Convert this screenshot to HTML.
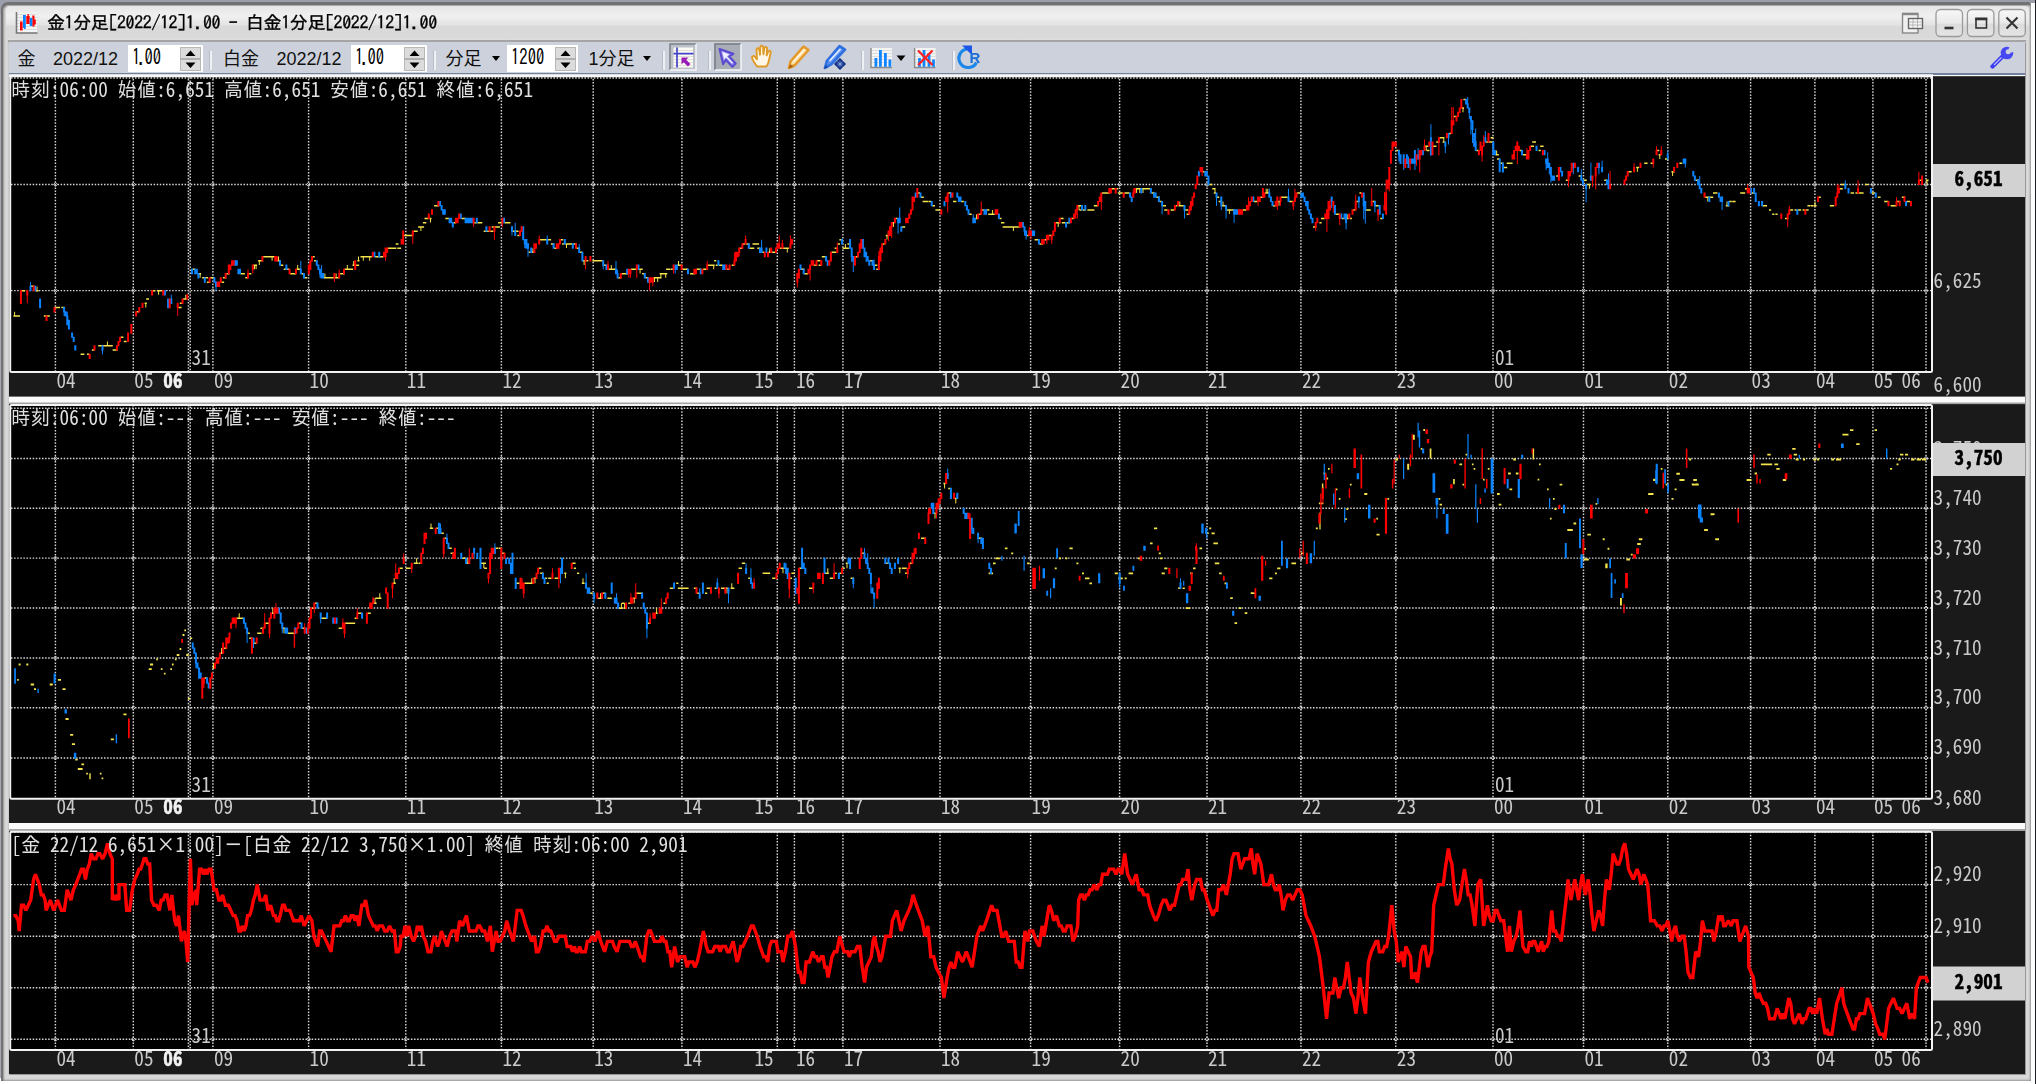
<!DOCTYPE html>
<html lang="ja"><head><meta charset="utf-8"><title>金1分足[2022/12]1.00 - 白金1分足[2022/12]1.00</title>
<style>
html,body{margin:0;padding:0;background:#fff}
body{width:2036px;height:1084px;position:relative;overflow:hidden;font-family:"Liberation Sans","Noto Sans CJK JP",sans-serif}
.abs{position:absolute}
#outer{left:0;top:0;width:2036px;height:1084px;background:#fff}
#darkr{left:2034.5px;top:0;width:2px;height:1084px;background:#1c1c24}
#topband{left:0;top:0;width:2034.5px;height:3px;background:#9c9fab}
#leftband{left:0;top:0;width:1.5px;height:1078px;background:#a7aab5}
#f1{left:1.4px;top:1.9px;width:2030px;height:1078.8px;background:#727272;border-radius:7px 3px 0 0}
#f2{left:3.2px;top:5px;width:2028.2px;height:1075.7px;background:#dadada;border-radius:5.5px 2px 0 0;box-shadow:inset 0 0 2.2px 0.8px #868686}
#title{left:5.5px;top:6px;width:2023.5px;height:34px;background:linear-gradient(#e6e6e6,#f0f0f0 30%,#e3e3e3 56%,#d9d9d9 59%,#d9d9d9 94%,#e0e0e0);border-radius:4px 4px 0 0}
#ttext{left:47px;top:11px;font:18px/22px IPAGothic,"Liberation Sans","Noto Sans CJK JP",sans-serif;color:#000;white-space:pre;letter-spacing:-0.4px;-webkit-text-stroke:0.35px #000;will-change:transform}
#inner{left:9px;top:41.6px;width:2015.7px;height:1032.5px;background:#fafafa;box-shadow:0 0 1.6px 1.2px #989898}
#tb{left:9px;top:41.6px;width:2015.7px;height:31.2px;background:#cdd1db}
#tbline{left:9px;top:72.5px;width:2015.7px;height:2px;background:#72819a}
#tsep{left:7.5px;top:39.8px;width:2018.7px;height:1.9px;background:#a5a5a5}
.lab{top:48px;font-size:18px;line-height:22px;color:#111;white-space:pre}
.cj{font-family:"Liberation Sans","Noto Sans CJK JP",sans-serif;font-size:18px}
.fld{top:45.3px;height:26.4px;background:#fff}
.fld span{position:absolute;left:4.3px;top:0.5px;font:19px/22px IPAGothic,"Liberation Mono",monospace;color:#000;transform:scale(.875,1.15);transform-origin:0 60%;white-space:pre}
.fld i{font-style:normal;margin:0 -2.2px 0 -2.6px}
.sp{top:46.5px;width:21px;height:24px;background:#dcdcdc;box-shadow:inset 0 0 0 1px #b8b8b8}
.sp:before{content:"";position:absolute;left:0;top:11.5px;width:21px;height:1.5px;background:#b0b0b0}
.sep{top:50.5px;width:2px;height:19px;background:#eef0f4;box-shadow:-1px 0 0 #b9bdc7}
.tri{width:0;height:0;border-left:4.5px solid transparent;border-right:4.5px solid transparent;border-top:5.5px solid #000}
.btn{top:43.4px;width:26.5px;height:26.5px}
</style></head><body>
<div class="abs" id="outer"></div><div class="abs" id="darkr"></div><div class="abs" id="topband"></div><div class="abs" id="leftband"></div>
<div class="abs" style="left:0;top:0;width:14px;height:14px;background:#9c9fab"></div><div class="abs" id="f1"></div><div class="abs" id="f2"></div><div class="abs" id="title"></div>
<div class="abs" id="ttext">金1分足[2022/12]1.00 - 白金1分足[2022/12]1.00</div>
<div class="abs" id="inner"></div><div class="abs" id="tb"></div><div class="abs" id="tbline"></div><div class="abs" id="tsep"></div>
<div class="abs lab cj" style="left:17.5px">金</div><div class="abs lab" style="left:53px">2022/12</div><div class="abs fld" style="left:127.7px;width:75.5px"><span>1<i>.</i>00</span></div><div class="abs sp" style="left:180.0px"></div><svg class="abs" style="left:180.0px;top:46.5px" width="21" height="24"><path d="M5.5 9L10.5 3.5L15.5 9zM5.5 15.5L10.5 21L15.5 15.5z" fill="#000"/></svg><div class="abs sep" style="left:210px"></div><div class="abs lab cj" style="left:223px">白金</div><div class="abs lab" style="left:276.5px">2022/12</div><div class="abs fld" style="left:351px;width:76px"><span>1<i>.</i>00</span></div><div class="abs sp" style="left:403.5px"></div><svg class="abs" style="left:403.5px;top:46.5px" width="21" height="24"><path d="M5.5 9L10.5 3.5L15.5 9zM5.5 15.5L10.5 21L15.5 15.5z" fill="#000"/></svg><div class="abs sep" style="left:433.7px"></div><div class="abs lab cj" style="left:445.5px">分足</div><div class="abs tri" style="left:492px;top:56px"></div><div class="abs fld" style="left:507.2px;width:71px"><span>1200</span></div><div class="abs sp" style="left:555.0px"></div><svg class="abs" style="left:555.0px;top:46.5px" width="21" height="24"><path d="M5.5 9L10.5 3.5L15.5 9zM5.5 15.5L10.5 21L15.5 15.5z" fill="#000"/></svg><div class="abs lab" style="left:588.5px"><span style="font-size:18px">1</span><span class="cj">分足</span></div><div class="abs tri" style="left:643.3px;top:56px"></div><div class="abs sep" style="left:663.3px"></div><div class="abs sep" style="left:709px"></div><div class="abs sep" style="left:862px"></div><div class="abs sep" style="left:952.5px"></div>
<svg class="abs" style="left:0;top:0" width="2036" height="76" viewBox="0 0 2036 76">
<defs><linearGradient id="bg" x1="0" y1="0" x2="0" y2="1"><stop offset="0" stop-color="#f8f8f8"/><stop offset="0.5" stop-color="#e9e9e9"/><stop offset="0.55" stop-color="#dcdcdc"/><stop offset="1" stop-color="#e4e4e4"/></linearGradient><filter id="b2"><feGaussianBlur stdDeviation="0.5"/></filter></defs>
<g filter="url(#b2)"><rect x="16.5" y="12.5" width="20.5" height="20" fill="#f4f4f4"/><path d="M17 14.5h20M17 17.5h20M17 20.5h20M17 23.5h20M17 26.5h20M17 29.5h20" stroke="#d4d4d4" stroke-width="0.8"/><path d="M16.5 12v21h21" fill="none" stroke="#777" stroke-width="1.6"/><path d="M20 21.5h2.6v9h-2.6zM26.3 16h3.4v8h-3.4zM27.5 14h1.3v2.5h-1.3zM32.3 15.5h2.2v11h-2.2zM34 19.5h1.8v5h-1.8z" fill="#ff0000"/><path d="M23 15h2.8v13h-2.8zM24 27h1.6v2h-1.6zM29.7 18h2.6v8h-2.6z" fill="#0a84ff"/></g>
<rect x="1936.0" y="9.5" width="26.5" height="27" rx="4.5" fill="url(#bg)" stroke="#9a9a9a" stroke-width="1.3"/>
<rect x="1967.4" y="9.5" width="26.5" height="27" rx="4.5" fill="url(#bg)" stroke="#9a9a9a" stroke-width="1.3"/>
<rect x="1998.8" y="9.5" width="26.5" height="27" rx="4.5" fill="url(#bg)" stroke="#9a9a9a" stroke-width="1.3"/>
<path d="M1944.5 28h9" stroke="#333" stroke-width="2.6"/>
<rect x="1976" y="18.5" width="10.5" height="9.5" fill="none" stroke="#333" stroke-width="1.6"/><path d="M1975.2 19h12" stroke="#333" stroke-width="2.6"/>
<path d="M2006.5 17.5l11 11M2017.5 17.5l-11 11" stroke="#333" stroke-width="2.1"/>
<g fill="none" stroke="#888" stroke-width="1.4"><rect x="1902.5" y="13.5" width="15.5" height="19.5" fill="#efefef"/><path d="M1902.5 14h15.5" stroke-width="2.4"/><rect x="1908.5" y="18.5" width="14" height="10" fill="#f6f6f6" stroke="#666"/><path d="M1909 22h13M1909 25h13M1913 19v9M1917.5 19v9" stroke="#aaa" stroke-width="0.8"/></g>
<rect x="669.5" y="43.5" width="26.5" height="26.5" fill="#bcc0c8"/><path d="M670 70V44h26" fill="none" stroke="#7e828a" stroke-width="1.5"/><path d="M670 70h26V44" fill="none" stroke="#f4f5f8" stroke-width="1.5"/>
<rect x="714.5" y="43.5" width="26.5" height="26.5" fill="#a9aeb6"/><path d="M715 70V44h26" fill="none" stroke="#777b84" stroke-width="1.5"/><path d="M715 70h26V44" fill="none" stroke="#f4f5f8" stroke-width="1.5"/>
<g filter="url(#b2)"><rect x="673.5" y="47.5" width="19.5" height="20" fill="#fbfbf3"/><path d="M674 50.5h19M674 56.5h19M674 59.5h19M674 62.5h19M674 65.5h19" stroke="#d9d9d0" stroke-width="0.8"/><path d="M677 47.5v20M673.5 53.7h20" stroke="#4343c9" stroke-width="1.7"/><path d="M681.5 57.5h7l-2.3 2.2l4.3 4.3l-2.6 2.6l-4.3-4.3l-2.1 2.2z" fill="#9a1db8"/></g>
<g filter="url(#b2)"><path d="M719.5 49l14 4.800l-4.300 2.700l6.500 7l-3.400 3.400l-6.500-7l-2.700 4.300z" fill="#8d84ea" stroke="#5a4bd0" stroke-width="2" stroke-linejoin="round"/><path d="M722 51.500l7.500 3l-2.500 1.800l6 6.500l-1 1l-6-6.500l-1.800 2.500z" fill="#f2f0ff"/></g>
<g filter="url(#b2)"><path d="M757 66.5c-2-3-4.5-6.5-5-9c0-1.5 1.7-2 2.8-.8l2.2 2.6l-.5-9.500c0-2 2.500-2 2.800 0l.7 5l.2-7.500c0-2 2.700-2 2.900 0l.3 7l1-6.200c.3-1.800 2.800-1.500 2.700.3l-.4 7l1.500-3.700c.8-1.700 2.900-1 2.500.8l-1.300 6c-.5 3-1.500 6-3 8z" fill="#fff8e8" stroke="#e09a28" stroke-width="1.9" stroke-linejoin="round"/></g>
<g filter="url(#b2)"><path d="M803.5 46.500l5 3.500l-13.500 15l-6 3l1.500-6.500z" fill="#fbe0a8" stroke="#e39a2a" stroke-width="2.600" stroke-linejoin="round"/><path d="M804.500 49.500l-11.500 12.500" stroke="#fff6e0" stroke-width="1.500"/><path d="M788.500 68.500l1.800-4.500l3 2.800z" fill="#a8620c"/></g>
<g filter="url(#b2)"><path d="M839.5 46l5.500 3.700l-13.500 14.500l-6.500 3.800l1.800-7z" fill="#5b93f2" stroke="#2f6fe0" stroke-width="2.600" stroke-linejoin="round"/><path d="M840.500 49l-11 12" stroke="#e4eeff" stroke-width="1.800"/><path d="M823.500 69l2.200-4l2.800 2.400z" fill="#1d4fb0"/><path d="M840 58l6 6l-6 6l-6-6z" fill="#0c2a80"/><path d="M836.500 64h7M840 60.500v7M837.500 61.500l5 5M842.500 61.500l-5 5" stroke="#9db8f0" stroke-width="0.700"/></g>
<g filter="url(#b2)"><rect x="871.0" y="48" width="21" height="19.500" fill="#f4f4f4"/><path d="M871.0 50.5h21M871.0 53.5h21M871.0 56.5h21M871.0 59.5h21M871.0 62.500h21" stroke="#d8d8d8" stroke-width="0.8"/><path d="M871.0 48v19.500h21" fill="none" stroke="#8a8a8a" stroke-width="1.4"/><rect x="874.5" y="58.0" width="2.800" height="8.8" fill="#0f86ff"/><rect x="879.0" y="50.0" width="2.800" height="16.8" fill="#0f86ff"/><rect x="884.0" y="53.0" width="2.800" height="13.8" fill="#0f86ff"/><rect x="888.5" y="59.5" width="2.800" height="7.3" fill="#0f86ff"/></g>
<path d="M896.500 55.500h9l-4.500 5.500z" fill="#000"/>
<g filter="url(#b2)"><rect x="914.6" y="48" width="21" height="19.500" fill="#f4f4f4"/><path d="M914.6 50.5h21M914.6 53.5h21M914.6 56.5h21M914.6 59.5h21M914.6 62.500h21" stroke="#d8d8d8" stroke-width="0.8"/><path d="M914.6 48v19.500h21" fill="none" stroke="#8a8a8a" stroke-width="1.4"/><rect x="918.1" y="58.0" width="2.800" height="8.8" fill="#0f86ff"/><rect x="922.6" y="50.0" width="2.800" height="16.8" fill="#0f86ff"/><rect x="927.6" y="53.0" width="2.800" height="13.8" fill="#0f86ff"/><rect x="932.1" y="59.5" width="2.800" height="7.3" fill="#0f86ff"/><path d="M918 50.500l14.500 14.500M932.500 50.500l-14.500 14.500" stroke="#ff2020" stroke-width="2.300"/></g>
<g filter="url(#b2)"><path d="M967 49a9.300 9.300 0 1 0 9.500 13.500" fill="none" stroke="#1a86ea" stroke-width="3.200"/><path d="M962 45.500h10v9.500z" fill="#1a56e8"/><text x="969.500" y="62.500" style="font:bold 15px 'Liberation Sans',sans-serif" fill="#1a6fd8">R</text></g>
<g filter="url(#b2)"><path d="M1992.5 66.500l10-10" stroke="#3a3af0" stroke-width="4.2" stroke-linecap="round"/><circle cx="2007" cy="53" r="6.3" fill="#4646f6"/><path d="M2007 53l3.200-7.800l6.500 6.500z" fill="#cdd1db"/><circle cx="2008.2" cy="51.8" r="2.500" fill="#cdd1db"/><path d="M1994 65l7.500-7.500" stroke="#c0c0ff" stroke-width="1.100"/></g>
</svg>
<svg width="2036" height="1084" viewBox="0 0 2036 1084" style="position:absolute;left:0;top:0">
<defs><filter id="bl" x="-1%" y="-1%" width="102%" height="102%"><feGaussianBlur stdDeviation="0.45"/></filter><filter id="bt" x="-1%" y="-1%" width="102%" height="102%"><feGaussianBlur stdDeviation="0.3"/></filter></defs>
<rect x="9" y="76.2" width="2016.0" height="320.4" fill="#1a1a1a"/>
<rect x="10" y="75.8" width="1922" height="296.2" fill="#000"/>
<rect x="9" y="404.1" width="2016.0" height="418.9" fill="#1a1a1a"/>
<rect x="10" y="405.1" width="1922" height="393.6" fill="#000"/>
<rect x="9" y="830.6" width="2016.0" height="243.4" fill="#1a1a1a"/>
<rect x="10" y="831.7" width="1922" height="218.4" fill="#000"/>
<path d="M9 403.2H2025M9 829.9H2025" stroke="#a4a4a4" stroke-width="1.6"/>
<g stroke="#d8d8d8" stroke-width="1.45" stroke-dasharray="1.5 1.6" fill="none" filter="url(#bl)">
<path d="M55.4 75.8V372.0"/>
<path d="M133.3 75.8V372.0"/>
<path d="M212.9 75.8V372.0"/>
<path d="M308.6 75.8V372.0"/>
<path d="M405.8 75.8V372.0"/>
<path d="M501.4 75.8V372.0"/>
<path d="M593.2 75.8V372.0"/>
<path d="M681.9 75.8V372.0"/>
<path d="M777.3 75.8V372.0"/>
<path d="M794.4 75.8V372.0"/>
<path d="M842.9 75.8V372.0"/>
<path d="M940.0 75.8V372.0"/>
<path d="M1030.6 75.8V372.0"/>
<path d="M1119.6 75.8V372.0"/>
<path d="M1207.0 75.8V372.0"/>
<path d="M1300.9 75.8V372.0"/>
<path d="M1395.8 75.8V372.0"/>
<path d="M1493.0 75.8V372.0"/>
<path d="M1583.5 75.8V372.0"/>
<path d="M1667.8 75.8V372.0"/>
<path d="M1750.6 75.8V372.0"/>
<path d="M1814.9 75.8V372.0"/>
<path d="M1872.9 75.8V372.0"/>
<path d="M1926.0 75.8V372.0"/>
<path d="M188.4 75.8V372.0"/><path d="M190.2 77.3V372.0"/>
<path d="M11.0 184.5H1931.0"/>
<path d="M11.0 290.6H1931.0"/>
<path d="M11.0 78.0H1931.0"/>
<path d="M55.4 405.1V798.7"/>
<path d="M133.3 405.1V798.7"/>
<path d="M212.9 405.1V798.7"/>
<path d="M308.6 405.1V798.7"/>
<path d="M405.8 405.1V798.7"/>
<path d="M501.4 405.1V798.7"/>
<path d="M593.2 405.1V798.7"/>
<path d="M681.9 405.1V798.7"/>
<path d="M777.3 405.1V798.7"/>
<path d="M794.4 405.1V798.7"/>
<path d="M842.9 405.1V798.7"/>
<path d="M940.0 405.1V798.7"/>
<path d="M1030.6 405.1V798.7"/>
<path d="M1119.6 405.1V798.7"/>
<path d="M1207.0 405.1V798.7"/>
<path d="M1300.9 405.1V798.7"/>
<path d="M1395.8 405.1V798.7"/>
<path d="M1493.0 405.1V798.7"/>
<path d="M1583.5 405.1V798.7"/>
<path d="M1667.8 405.1V798.7"/>
<path d="M1750.6 405.1V798.7"/>
<path d="M1814.9 405.1V798.7"/>
<path d="M1872.9 405.1V798.7"/>
<path d="M1926.0 405.1V798.7"/>
<path d="M188.4 405.1V798.7"/><path d="M190.2 406.6V798.7"/>
<path d="M11.0 458.5H1931.0"/>
<path d="M11.0 508.2H1931.0"/>
<path d="M11.0 558.1H1931.0"/>
<path d="M11.0 608.0H1931.0"/>
<path d="M11.0 657.9H1931.0"/>
<path d="M11.0 707.7H1931.0"/>
<path d="M11.0 757.9H1931.0"/>
<path d="M11.0 408.3H1931.0"/>
<path d="M55.4 831.7V1050.1"/>
<path d="M133.3 831.7V1050.1"/>
<path d="M212.9 831.7V1050.1"/>
<path d="M308.6 831.7V1050.1"/>
<path d="M405.8 831.7V1050.1"/>
<path d="M501.4 831.7V1050.1"/>
<path d="M593.2 831.7V1050.1"/>
<path d="M681.9 831.7V1050.1"/>
<path d="M777.3 831.7V1050.1"/>
<path d="M794.4 831.7V1050.1"/>
<path d="M842.9 831.7V1050.1"/>
<path d="M940.0 831.7V1050.1"/>
<path d="M1030.6 831.7V1050.1"/>
<path d="M1119.6 831.7V1050.1"/>
<path d="M1207.0 831.7V1050.1"/>
<path d="M1300.9 831.7V1050.1"/>
<path d="M1395.8 831.7V1050.1"/>
<path d="M1493.0 831.7V1050.1"/>
<path d="M1583.5 831.7V1050.1"/>
<path d="M1667.8 831.7V1050.1"/>
<path d="M1750.6 831.7V1050.1"/>
<path d="M1814.9 831.7V1050.1"/>
<path d="M1872.9 831.7V1050.1"/>
<path d="M1926.0 831.7V1050.1"/>
<path d="M188.4 831.7V1050.1"/><path d="M190.2 833.2V1050.1"/>
<path d="M11.0 884.6H1931.0"/>
<path d="M11.0 936.3H1931.0"/>
<path d="M11.0 987.8H1931.0"/>
<path d="M11.0 1039.3H1931.0"/>
<path d="M11.0 831.9H1931.0"/>
</g>
<g fill="none" stroke="#d8d8d8" stroke-width="0.9">
<path d="M55.4 182.5l2 2l-2 2l-2-2z"/>
<path d="M133.3 182.5l2 2l-2 2l-2-2z"/>
<path d="M212.9 182.5l2 2l-2 2l-2-2z"/>
<path d="M308.6 182.5l2 2l-2 2l-2-2z"/>
<path d="M405.8 182.5l2 2l-2 2l-2-2z"/>
<path d="M501.4 182.5l2 2l-2 2l-2-2z"/>
<path d="M593.2 182.5l2 2l-2 2l-2-2z"/>
<path d="M681.9 182.5l2 2l-2 2l-2-2z"/>
<path d="M777.3 182.5l2 2l-2 2l-2-2z"/>
<path d="M794.4 182.5l2 2l-2 2l-2-2z"/>
<path d="M842.9 182.5l2 2l-2 2l-2-2z"/>
<path d="M940.0 182.5l2 2l-2 2l-2-2z"/>
<path d="M1030.6 182.5l2 2l-2 2l-2-2z"/>
<path d="M1119.6 182.5l2 2l-2 2l-2-2z"/>
<path d="M1207.0 182.5l2 2l-2 2l-2-2z"/>
<path d="M1300.9 182.5l2 2l-2 2l-2-2z"/>
<path d="M1395.8 182.5l2 2l-2 2l-2-2z"/>
<path d="M1493.0 182.5l2 2l-2 2l-2-2z"/>
<path d="M1583.5 182.5l2 2l-2 2l-2-2z"/>
<path d="M1667.8 182.5l2 2l-2 2l-2-2z"/>
<path d="M1750.6 182.5l2 2l-2 2l-2-2z"/>
<path d="M1814.9 182.5l2 2l-2 2l-2-2z"/>
<path d="M1872.9 182.5l2 2l-2 2l-2-2z"/>
<path d="M1926.0 182.5l2 2l-2 2l-2-2z"/>
<path d="M55.4 288.6l2 2l-2 2l-2-2z"/>
<path d="M133.3 288.6l2 2l-2 2l-2-2z"/>
<path d="M212.9 288.6l2 2l-2 2l-2-2z"/>
<path d="M308.6 288.6l2 2l-2 2l-2-2z"/>
<path d="M405.8 288.6l2 2l-2 2l-2-2z"/>
<path d="M501.4 288.6l2 2l-2 2l-2-2z"/>
<path d="M593.2 288.6l2 2l-2 2l-2-2z"/>
<path d="M681.9 288.6l2 2l-2 2l-2-2z"/>
<path d="M777.3 288.6l2 2l-2 2l-2-2z"/>
<path d="M794.4 288.6l2 2l-2 2l-2-2z"/>
<path d="M842.9 288.6l2 2l-2 2l-2-2z"/>
<path d="M940.0 288.6l2 2l-2 2l-2-2z"/>
<path d="M1030.6 288.6l2 2l-2 2l-2-2z"/>
<path d="M1119.6 288.6l2 2l-2 2l-2-2z"/>
<path d="M1207.0 288.6l2 2l-2 2l-2-2z"/>
<path d="M1300.9 288.6l2 2l-2 2l-2-2z"/>
<path d="M1395.8 288.6l2 2l-2 2l-2-2z"/>
<path d="M1493.0 288.6l2 2l-2 2l-2-2z"/>
<path d="M1583.5 288.6l2 2l-2 2l-2-2z"/>
<path d="M1667.8 288.6l2 2l-2 2l-2-2z"/>
<path d="M1750.6 288.6l2 2l-2 2l-2-2z"/>
<path d="M1814.9 288.6l2 2l-2 2l-2-2z"/>
<path d="M1872.9 288.6l2 2l-2 2l-2-2z"/>
<path d="M1926.0 288.6l2 2l-2 2l-2-2z"/>
<path d="M55.4 456.5l2 2l-2 2l-2-2z"/>
<path d="M133.3 456.5l2 2l-2 2l-2-2z"/>
<path d="M212.9 456.5l2 2l-2 2l-2-2z"/>
<path d="M308.6 456.5l2 2l-2 2l-2-2z"/>
<path d="M405.8 456.5l2 2l-2 2l-2-2z"/>
<path d="M501.4 456.5l2 2l-2 2l-2-2z"/>
<path d="M593.2 456.5l2 2l-2 2l-2-2z"/>
<path d="M681.9 456.5l2 2l-2 2l-2-2z"/>
<path d="M777.3 456.5l2 2l-2 2l-2-2z"/>
<path d="M794.4 456.5l2 2l-2 2l-2-2z"/>
<path d="M842.9 456.5l2 2l-2 2l-2-2z"/>
<path d="M940.0 456.5l2 2l-2 2l-2-2z"/>
<path d="M1030.6 456.5l2 2l-2 2l-2-2z"/>
<path d="M1119.6 456.5l2 2l-2 2l-2-2z"/>
<path d="M1207.0 456.5l2 2l-2 2l-2-2z"/>
<path d="M1300.9 456.5l2 2l-2 2l-2-2z"/>
<path d="M1395.8 456.5l2 2l-2 2l-2-2z"/>
<path d="M1493.0 456.5l2 2l-2 2l-2-2z"/>
<path d="M1583.5 456.5l2 2l-2 2l-2-2z"/>
<path d="M1667.8 456.5l2 2l-2 2l-2-2z"/>
<path d="M1750.6 456.5l2 2l-2 2l-2-2z"/>
<path d="M1814.9 456.5l2 2l-2 2l-2-2z"/>
<path d="M1872.9 456.5l2 2l-2 2l-2-2z"/>
<path d="M1926.0 456.5l2 2l-2 2l-2-2z"/>
<path d="M55.4 506.2l2 2l-2 2l-2-2z"/>
<path d="M133.3 506.2l2 2l-2 2l-2-2z"/>
<path d="M212.9 506.2l2 2l-2 2l-2-2z"/>
<path d="M308.6 506.2l2 2l-2 2l-2-2z"/>
<path d="M405.8 506.2l2 2l-2 2l-2-2z"/>
<path d="M501.4 506.2l2 2l-2 2l-2-2z"/>
<path d="M593.2 506.2l2 2l-2 2l-2-2z"/>
<path d="M681.9 506.2l2 2l-2 2l-2-2z"/>
<path d="M777.3 506.2l2 2l-2 2l-2-2z"/>
<path d="M794.4 506.2l2 2l-2 2l-2-2z"/>
<path d="M842.9 506.2l2 2l-2 2l-2-2z"/>
<path d="M940.0 506.2l2 2l-2 2l-2-2z"/>
<path d="M1030.6 506.2l2 2l-2 2l-2-2z"/>
<path d="M1119.6 506.2l2 2l-2 2l-2-2z"/>
<path d="M1207.0 506.2l2 2l-2 2l-2-2z"/>
<path d="M1300.9 506.2l2 2l-2 2l-2-2z"/>
<path d="M1395.8 506.2l2 2l-2 2l-2-2z"/>
<path d="M1493.0 506.2l2 2l-2 2l-2-2z"/>
<path d="M1583.5 506.2l2 2l-2 2l-2-2z"/>
<path d="M1667.8 506.2l2 2l-2 2l-2-2z"/>
<path d="M1750.6 506.2l2 2l-2 2l-2-2z"/>
<path d="M1814.9 506.2l2 2l-2 2l-2-2z"/>
<path d="M1872.9 506.2l2 2l-2 2l-2-2z"/>
<path d="M1926.0 506.2l2 2l-2 2l-2-2z"/>
<path d="M55.4 556.1l2 2l-2 2l-2-2z"/>
<path d="M133.3 556.1l2 2l-2 2l-2-2z"/>
<path d="M212.9 556.1l2 2l-2 2l-2-2z"/>
<path d="M308.6 556.1l2 2l-2 2l-2-2z"/>
<path d="M405.8 556.1l2 2l-2 2l-2-2z"/>
<path d="M501.4 556.1l2 2l-2 2l-2-2z"/>
<path d="M593.2 556.1l2 2l-2 2l-2-2z"/>
<path d="M681.9 556.1l2 2l-2 2l-2-2z"/>
<path d="M777.3 556.1l2 2l-2 2l-2-2z"/>
<path d="M794.4 556.1l2 2l-2 2l-2-2z"/>
<path d="M842.9 556.1l2 2l-2 2l-2-2z"/>
<path d="M940.0 556.1l2 2l-2 2l-2-2z"/>
<path d="M1030.6 556.1l2 2l-2 2l-2-2z"/>
<path d="M1119.6 556.1l2 2l-2 2l-2-2z"/>
<path d="M1207.0 556.1l2 2l-2 2l-2-2z"/>
<path d="M1300.9 556.1l2 2l-2 2l-2-2z"/>
<path d="M1395.8 556.1l2 2l-2 2l-2-2z"/>
<path d="M1493.0 556.1l2 2l-2 2l-2-2z"/>
<path d="M1583.5 556.1l2 2l-2 2l-2-2z"/>
<path d="M1667.8 556.1l2 2l-2 2l-2-2z"/>
<path d="M1750.6 556.1l2 2l-2 2l-2-2z"/>
<path d="M1814.9 556.1l2 2l-2 2l-2-2z"/>
<path d="M1872.9 556.1l2 2l-2 2l-2-2z"/>
<path d="M1926.0 556.1l2 2l-2 2l-2-2z"/>
<path d="M55.4 606.0l2 2l-2 2l-2-2z"/>
<path d="M133.3 606.0l2 2l-2 2l-2-2z"/>
<path d="M212.9 606.0l2 2l-2 2l-2-2z"/>
<path d="M308.6 606.0l2 2l-2 2l-2-2z"/>
<path d="M405.8 606.0l2 2l-2 2l-2-2z"/>
<path d="M501.4 606.0l2 2l-2 2l-2-2z"/>
<path d="M593.2 606.0l2 2l-2 2l-2-2z"/>
<path d="M681.9 606.0l2 2l-2 2l-2-2z"/>
<path d="M777.3 606.0l2 2l-2 2l-2-2z"/>
<path d="M794.4 606.0l2 2l-2 2l-2-2z"/>
<path d="M842.9 606.0l2 2l-2 2l-2-2z"/>
<path d="M940.0 606.0l2 2l-2 2l-2-2z"/>
<path d="M1030.6 606.0l2 2l-2 2l-2-2z"/>
<path d="M1119.6 606.0l2 2l-2 2l-2-2z"/>
<path d="M1207.0 606.0l2 2l-2 2l-2-2z"/>
<path d="M1300.9 606.0l2 2l-2 2l-2-2z"/>
<path d="M1395.8 606.0l2 2l-2 2l-2-2z"/>
<path d="M1493.0 606.0l2 2l-2 2l-2-2z"/>
<path d="M1583.5 606.0l2 2l-2 2l-2-2z"/>
<path d="M1667.8 606.0l2 2l-2 2l-2-2z"/>
<path d="M1750.6 606.0l2 2l-2 2l-2-2z"/>
<path d="M1814.9 606.0l2 2l-2 2l-2-2z"/>
<path d="M1872.9 606.0l2 2l-2 2l-2-2z"/>
<path d="M1926.0 606.0l2 2l-2 2l-2-2z"/>
<path d="M55.4 655.9l2 2l-2 2l-2-2z"/>
<path d="M133.3 655.9l2 2l-2 2l-2-2z"/>
<path d="M212.9 655.9l2 2l-2 2l-2-2z"/>
<path d="M308.6 655.9l2 2l-2 2l-2-2z"/>
<path d="M405.8 655.9l2 2l-2 2l-2-2z"/>
<path d="M501.4 655.9l2 2l-2 2l-2-2z"/>
<path d="M593.2 655.9l2 2l-2 2l-2-2z"/>
<path d="M681.9 655.9l2 2l-2 2l-2-2z"/>
<path d="M777.3 655.9l2 2l-2 2l-2-2z"/>
<path d="M794.4 655.9l2 2l-2 2l-2-2z"/>
<path d="M842.9 655.9l2 2l-2 2l-2-2z"/>
<path d="M940.0 655.9l2 2l-2 2l-2-2z"/>
<path d="M1030.6 655.9l2 2l-2 2l-2-2z"/>
<path d="M1119.6 655.9l2 2l-2 2l-2-2z"/>
<path d="M1207.0 655.9l2 2l-2 2l-2-2z"/>
<path d="M1300.9 655.9l2 2l-2 2l-2-2z"/>
<path d="M1395.8 655.9l2 2l-2 2l-2-2z"/>
<path d="M1493.0 655.9l2 2l-2 2l-2-2z"/>
<path d="M1583.5 655.9l2 2l-2 2l-2-2z"/>
<path d="M1667.8 655.9l2 2l-2 2l-2-2z"/>
<path d="M1750.6 655.9l2 2l-2 2l-2-2z"/>
<path d="M1814.9 655.9l2 2l-2 2l-2-2z"/>
<path d="M1872.9 655.9l2 2l-2 2l-2-2z"/>
<path d="M1926.0 655.9l2 2l-2 2l-2-2z"/>
<path d="M55.4 705.7l2 2l-2 2l-2-2z"/>
<path d="M133.3 705.7l2 2l-2 2l-2-2z"/>
<path d="M212.9 705.7l2 2l-2 2l-2-2z"/>
<path d="M308.6 705.7l2 2l-2 2l-2-2z"/>
<path d="M405.8 705.7l2 2l-2 2l-2-2z"/>
<path d="M501.4 705.7l2 2l-2 2l-2-2z"/>
<path d="M593.2 705.7l2 2l-2 2l-2-2z"/>
<path d="M681.9 705.7l2 2l-2 2l-2-2z"/>
<path d="M777.3 705.7l2 2l-2 2l-2-2z"/>
<path d="M794.4 705.7l2 2l-2 2l-2-2z"/>
<path d="M842.9 705.7l2 2l-2 2l-2-2z"/>
<path d="M940.0 705.7l2 2l-2 2l-2-2z"/>
<path d="M1030.6 705.7l2 2l-2 2l-2-2z"/>
<path d="M1119.6 705.7l2 2l-2 2l-2-2z"/>
<path d="M1207.0 705.7l2 2l-2 2l-2-2z"/>
<path d="M1300.9 705.7l2 2l-2 2l-2-2z"/>
<path d="M1395.8 705.7l2 2l-2 2l-2-2z"/>
<path d="M1493.0 705.7l2 2l-2 2l-2-2z"/>
<path d="M1583.5 705.7l2 2l-2 2l-2-2z"/>
<path d="M1667.8 705.7l2 2l-2 2l-2-2z"/>
<path d="M1750.6 705.7l2 2l-2 2l-2-2z"/>
<path d="M1814.9 705.7l2 2l-2 2l-2-2z"/>
<path d="M1872.9 705.7l2 2l-2 2l-2-2z"/>
<path d="M1926.0 705.7l2 2l-2 2l-2-2z"/>
<path d="M55.4 755.9l2 2l-2 2l-2-2z"/>
<path d="M133.3 755.9l2 2l-2 2l-2-2z"/>
<path d="M212.9 755.9l2 2l-2 2l-2-2z"/>
<path d="M308.6 755.9l2 2l-2 2l-2-2z"/>
<path d="M405.8 755.9l2 2l-2 2l-2-2z"/>
<path d="M501.4 755.9l2 2l-2 2l-2-2z"/>
<path d="M593.2 755.9l2 2l-2 2l-2-2z"/>
<path d="M681.9 755.9l2 2l-2 2l-2-2z"/>
<path d="M777.3 755.9l2 2l-2 2l-2-2z"/>
<path d="M794.4 755.9l2 2l-2 2l-2-2z"/>
<path d="M842.9 755.9l2 2l-2 2l-2-2z"/>
<path d="M940.0 755.9l2 2l-2 2l-2-2z"/>
<path d="M1030.6 755.9l2 2l-2 2l-2-2z"/>
<path d="M1119.6 755.9l2 2l-2 2l-2-2z"/>
<path d="M1207.0 755.9l2 2l-2 2l-2-2z"/>
<path d="M1300.9 755.9l2 2l-2 2l-2-2z"/>
<path d="M1395.8 755.9l2 2l-2 2l-2-2z"/>
<path d="M1493.0 755.9l2 2l-2 2l-2-2z"/>
<path d="M1583.5 755.9l2 2l-2 2l-2-2z"/>
<path d="M1667.8 755.9l2 2l-2 2l-2-2z"/>
<path d="M1750.6 755.9l2 2l-2 2l-2-2z"/>
<path d="M1814.9 755.9l2 2l-2 2l-2-2z"/>
<path d="M1872.9 755.9l2 2l-2 2l-2-2z"/>
<path d="M1926.0 755.9l2 2l-2 2l-2-2z"/>
<path d="M55.4 882.6l2 2l-2 2l-2-2z"/>
<path d="M133.3 882.6l2 2l-2 2l-2-2z"/>
<path d="M212.9 882.6l2 2l-2 2l-2-2z"/>
<path d="M308.6 882.6l2 2l-2 2l-2-2z"/>
<path d="M405.8 882.6l2 2l-2 2l-2-2z"/>
<path d="M501.4 882.6l2 2l-2 2l-2-2z"/>
<path d="M593.2 882.6l2 2l-2 2l-2-2z"/>
<path d="M681.9 882.6l2 2l-2 2l-2-2z"/>
<path d="M777.3 882.6l2 2l-2 2l-2-2z"/>
<path d="M794.4 882.6l2 2l-2 2l-2-2z"/>
<path d="M842.9 882.6l2 2l-2 2l-2-2z"/>
<path d="M940.0 882.6l2 2l-2 2l-2-2z"/>
<path d="M1030.6 882.6l2 2l-2 2l-2-2z"/>
<path d="M1119.6 882.6l2 2l-2 2l-2-2z"/>
<path d="M1207.0 882.6l2 2l-2 2l-2-2z"/>
<path d="M1300.9 882.6l2 2l-2 2l-2-2z"/>
<path d="M1395.8 882.6l2 2l-2 2l-2-2z"/>
<path d="M1493.0 882.6l2 2l-2 2l-2-2z"/>
<path d="M1583.5 882.6l2 2l-2 2l-2-2z"/>
<path d="M1667.8 882.6l2 2l-2 2l-2-2z"/>
<path d="M1750.6 882.6l2 2l-2 2l-2-2z"/>
<path d="M1814.9 882.6l2 2l-2 2l-2-2z"/>
<path d="M1872.9 882.6l2 2l-2 2l-2-2z"/>
<path d="M1926.0 882.6l2 2l-2 2l-2-2z"/>
<path d="M55.4 934.3l2 2l-2 2l-2-2z"/>
<path d="M133.3 934.3l2 2l-2 2l-2-2z"/>
<path d="M212.9 934.3l2 2l-2 2l-2-2z"/>
<path d="M308.6 934.3l2 2l-2 2l-2-2z"/>
<path d="M405.8 934.3l2 2l-2 2l-2-2z"/>
<path d="M501.4 934.3l2 2l-2 2l-2-2z"/>
<path d="M593.2 934.3l2 2l-2 2l-2-2z"/>
<path d="M681.9 934.3l2 2l-2 2l-2-2z"/>
<path d="M777.3 934.3l2 2l-2 2l-2-2z"/>
<path d="M794.4 934.3l2 2l-2 2l-2-2z"/>
<path d="M842.9 934.3l2 2l-2 2l-2-2z"/>
<path d="M940.0 934.3l2 2l-2 2l-2-2z"/>
<path d="M1030.6 934.3l2 2l-2 2l-2-2z"/>
<path d="M1119.6 934.3l2 2l-2 2l-2-2z"/>
<path d="M1207.0 934.3l2 2l-2 2l-2-2z"/>
<path d="M1300.9 934.3l2 2l-2 2l-2-2z"/>
<path d="M1395.8 934.3l2 2l-2 2l-2-2z"/>
<path d="M1493.0 934.3l2 2l-2 2l-2-2z"/>
<path d="M1583.5 934.3l2 2l-2 2l-2-2z"/>
<path d="M1667.8 934.3l2 2l-2 2l-2-2z"/>
<path d="M1750.6 934.3l2 2l-2 2l-2-2z"/>
<path d="M1814.9 934.3l2 2l-2 2l-2-2z"/>
<path d="M1872.9 934.3l2 2l-2 2l-2-2z"/>
<path d="M1926.0 934.3l2 2l-2 2l-2-2z"/>
<path d="M55.4 985.8l2 2l-2 2l-2-2z"/>
<path d="M133.3 985.8l2 2l-2 2l-2-2z"/>
<path d="M212.9 985.8l2 2l-2 2l-2-2z"/>
<path d="M308.6 985.8l2 2l-2 2l-2-2z"/>
<path d="M405.8 985.8l2 2l-2 2l-2-2z"/>
<path d="M501.4 985.8l2 2l-2 2l-2-2z"/>
<path d="M593.2 985.8l2 2l-2 2l-2-2z"/>
<path d="M681.9 985.8l2 2l-2 2l-2-2z"/>
<path d="M777.3 985.8l2 2l-2 2l-2-2z"/>
<path d="M794.4 985.8l2 2l-2 2l-2-2z"/>
<path d="M842.9 985.8l2 2l-2 2l-2-2z"/>
<path d="M940.0 985.8l2 2l-2 2l-2-2z"/>
<path d="M1030.6 985.8l2 2l-2 2l-2-2z"/>
<path d="M1119.6 985.8l2 2l-2 2l-2-2z"/>
<path d="M1207.0 985.8l2 2l-2 2l-2-2z"/>
<path d="M1300.9 985.8l2 2l-2 2l-2-2z"/>
<path d="M1395.8 985.8l2 2l-2 2l-2-2z"/>
<path d="M1493.0 985.8l2 2l-2 2l-2-2z"/>
<path d="M1583.5 985.8l2 2l-2 2l-2-2z"/>
<path d="M1667.8 985.8l2 2l-2 2l-2-2z"/>
<path d="M1750.6 985.8l2 2l-2 2l-2-2z"/>
<path d="M1814.9 985.8l2 2l-2 2l-2-2z"/>
<path d="M1872.9 985.8l2 2l-2 2l-2-2z"/>
<path d="M1926.0 985.8l2 2l-2 2l-2-2z"/>
<path d="M55.4 1037.3l2 2l-2 2l-2-2z"/>
<path d="M133.3 1037.3l2 2l-2 2l-2-2z"/>
<path d="M212.9 1037.3l2 2l-2 2l-2-2z"/>
<path d="M308.6 1037.3l2 2l-2 2l-2-2z"/>
<path d="M405.8 1037.3l2 2l-2 2l-2-2z"/>
<path d="M501.4 1037.3l2 2l-2 2l-2-2z"/>
<path d="M593.2 1037.3l2 2l-2 2l-2-2z"/>
<path d="M681.9 1037.3l2 2l-2 2l-2-2z"/>
<path d="M777.3 1037.3l2 2l-2 2l-2-2z"/>
<path d="M794.4 1037.3l2 2l-2 2l-2-2z"/>
<path d="M842.9 1037.3l2 2l-2 2l-2-2z"/>
<path d="M940.0 1037.3l2 2l-2 2l-2-2z"/>
<path d="M1030.6 1037.3l2 2l-2 2l-2-2z"/>
<path d="M1119.6 1037.3l2 2l-2 2l-2-2z"/>
<path d="M1207.0 1037.3l2 2l-2 2l-2-2z"/>
<path d="M1300.9 1037.3l2 2l-2 2l-2-2z"/>
<path d="M1395.8 1037.3l2 2l-2 2l-2-2z"/>
<path d="M1493.0 1037.3l2 2l-2 2l-2-2z"/>
<path d="M1583.5 1037.3l2 2l-2 2l-2-2z"/>
<path d="M1667.8 1037.3l2 2l-2 2l-2-2z"/>
<path d="M1750.6 1037.3l2 2l-2 2l-2-2z"/>
<path d="M1814.9 1037.3l2 2l-2 2l-2-2z"/>
<path d="M1872.9 1037.3l2 2l-2 2l-2-2z"/>
<path d="M1926.0 1037.3l2 2l-2 2l-2-2z"/>
</g>
<g filter="url(#bl)"><path fill="#f4e34c" d="M13.4 315.3h3.4v1.5h-3.4zM14.1 311.8h1.0v4.2h-1.0zM16.6 315.3h3.4v1.5h-3.4zM21.4 289.9h2.8v1.5h-2.8zM23.0 289.9h2.2v1.5h-2.2zM31.0 285.6h3.4v1.5h-3.4zM35.8 289.9h2.8v1.5h-2.8zM36.5 286.4h1.0v4.2h-1.0zM43.8 315.3h2.8v1.5h-2.8zM47.0 315.3h2.8v1.5h-2.8zM55.0 306.8h2.8v1.5h-2.8zM56.6 306.8h3.4v1.5h-3.4zM61.4 306.8h3.4v1.5h-3.4zM80.6 353.5h3.4v1.5h-3.4zM82.2 353.5h2.2v1.5h-2.2zM87.0 353.5h2.2v1.5h-2.2zM91.8 349.3h2.8v1.5h-2.8zM98.2 345.0h2.2v1.5h-2.2zM99.8 345.0h3.4v1.5h-3.4zM103.0 345.0h2.8v1.5h-2.8zM104.6 345.0h3.4v1.5h-3.4zM106.2 345.0h2.2v1.5h-2.2zM106.9 341.5h1.0v4.2h-1.0zM107.8 345.0h2.8v1.5h-2.8zM109.4 345.0h3.4v1.5h-3.4zM112.6 349.3h2.8v1.5h-2.8zM114.2 349.3h3.4v1.5h-3.4zM120.6 336.5h2.8v1.5h-2.8zM123.8 340.8h2.8v1.5h-2.8zM136.6 311.1h2.2v1.5h-2.2zM144.6 302.6h2.2v1.5h-2.2zM145.3 303.3h1.0v4.2h-1.0zM146.2 298.3h2.8v1.5h-2.8zM152.6 289.9h2.8v1.5h-2.8zM157.4 289.9h2.8v1.5h-2.8zM158.1 290.6h1.0v4.2h-1.0zM160.6 289.9h2.2v1.5h-2.2zM178.2 306.8h3.4v1.5h-3.4zM179.8 302.6h2.2v1.5h-2.2zM183.0 298.3h2.8v1.5h-2.8zM184.6 298.3h2.2v1.5h-2.2zM185.3 294.8h1.0v4.2h-1.0zM192.5 268.6h2.8v1.5h-2.8zM198.9 272.9h2.2v1.5h-2.2zM199.6 273.6h1.0v4.2h-1.0zM202.1 277.1h3.4v1.5h-3.4zM205.3 277.1h2.8v1.5h-2.8zM206.9 281.4h3.4v1.5h-3.4zM210.1 277.1h2.8v1.5h-2.8zM211.7 277.1h2.8v1.5h-2.8zM221.3 281.4h2.8v1.5h-2.8zM222.9 277.1h3.4v1.5h-3.4zM226.1 272.9h3.4v1.5h-3.4zM240.5 272.9h2.2v1.5h-2.2zM242.1 272.9h2.8v1.5h-2.8zM245.3 277.1h2.8v1.5h-2.8zM248.5 272.9h2.8v1.5h-2.8zM253.3 264.4h2.2v1.5h-2.2zM254.0 265.1h1.0v4.2h-1.0zM254.9 264.4h2.2v1.5h-2.2zM255.6 265.1h1.0v4.2h-1.0zM258.1 260.1h3.4v1.5h-3.4zM258.8 260.9h1.0v4.2h-1.0zM259.7 260.1h3.4v1.5h-3.4zM262.9 255.9h3.4v1.5h-3.4zM264.5 255.9h2.8v1.5h-2.8zM266.1 255.9h3.4v1.5h-3.4zM269.3 255.9h3.4v1.5h-3.4zM270.9 255.9h2.8v1.5h-2.8zM271.6 256.6h1.0v4.2h-1.0zM272.5 255.9h2.8v1.5h-2.8zM277.3 260.1h3.4v1.5h-3.4zM278.0 256.6h1.0v4.2h-1.0zM280.5 264.4h2.8v1.5h-2.8zM283.7 268.6h3.4v1.5h-3.4zM286.9 268.6h2.2v1.5h-2.2zM290.1 272.9h2.8v1.5h-2.8zM291.7 272.9h3.4v1.5h-3.4zM293.3 272.9h2.8v1.5h-2.8zM296.5 268.6h2.8v1.5h-2.8zM297.2 265.1h1.0v4.2h-1.0zM298.1 268.6h2.8v1.5h-2.8zM301.3 272.9h2.8v1.5h-2.8zM304.5 277.1h2.8v1.5h-2.8zM312.5 255.9h2.2v1.5h-2.2zM314.1 260.1h2.2v1.5h-2.2zM323.7 277.1h2.8v1.5h-2.8zM324.4 273.6h1.0v4.2h-1.0zM325.3 277.1h3.4v1.5h-3.4zM326.9 277.1h2.2v1.5h-2.2zM328.5 277.1h2.8v1.5h-2.8zM330.1 277.1h2.8v1.5h-2.8zM331.7 277.1h2.8v1.5h-2.8zM334.9 277.1h2.2v1.5h-2.2zM335.6 273.6h1.0v4.2h-1.0zM336.5 277.1h2.8v1.5h-2.8zM339.7 272.9h2.2v1.5h-2.2zM341.3 272.9h3.4v1.5h-3.4zM344.5 268.6h2.8v1.5h-2.8zM346.1 268.6h2.2v1.5h-2.2zM346.8 265.1h1.0v4.2h-1.0zM347.7 268.6h3.4v1.5h-3.4zM349.3 268.6h2.8v1.5h-2.8zM350.9 268.6h2.2v1.5h-2.2zM352.5 264.4h2.8v1.5h-2.8zM353.2 260.9h1.0v4.2h-1.0zM355.7 264.4h3.4v1.5h-3.4zM357.3 260.1h2.2v1.5h-2.2zM358.0 256.6h1.0v4.2h-1.0zM360.5 255.9h2.8v1.5h-2.8zM362.1 255.9h2.2v1.5h-2.2zM362.8 256.6h1.0v4.2h-1.0zM363.7 255.9h2.8v1.5h-2.8zM365.3 255.9h3.4v1.5h-3.4zM366.9 255.9h2.8v1.5h-2.8zM368.5 255.9h3.4v1.5h-3.4zM369.2 256.6h1.0v4.2h-1.0zM374.9 255.9h2.2v1.5h-2.2zM376.5 255.9h3.4v1.5h-3.4zM379.7 255.9h2.8v1.5h-2.8zM381.3 255.9h2.2v1.5h-2.2zM387.7 247.4h2.8v1.5h-2.8zM389.3 247.4h2.2v1.5h-2.2zM390.9 247.4h2.2v1.5h-2.2zM392.5 247.4h2.8v1.5h-2.8zM394.1 247.4h2.2v1.5h-2.2zM395.7 243.2h2.8v1.5h-2.8zM397.3 247.4h3.4v1.5h-3.4zM398.9 247.4h2.2v1.5h-2.2zM403.7 234.7h2.2v1.5h-2.2zM405.3 234.7h2.8v1.5h-2.8zM406.9 234.7h3.4v1.5h-3.4zM408.5 234.7h2.2v1.5h-2.2zM410.1 234.7h2.2v1.5h-2.2zM413.3 230.4h3.4v1.5h-3.4zM414.9 230.4h2.8v1.5h-2.8zM418.1 226.2h3.4v1.5h-3.4zM419.7 226.2h3.4v1.5h-3.4zM420.4 226.9h1.0v4.2h-1.0zM421.3 226.2h2.8v1.5h-2.8zM422.9 221.9h3.4v1.5h-3.4zM424.5 217.7h2.8v1.5h-2.8zM426.1 217.7h2.8v1.5h-2.8zM429.3 217.7h2.2v1.5h-2.2zM430.0 218.4h1.0v4.2h-1.0zM434.1 205.0h3.4v1.5h-3.4zM435.7 205.0h3.4v1.5h-3.4zM445.3 217.7h2.8v1.5h-2.8zM446.9 217.7h2.2v1.5h-2.2zM453.3 221.9h2.8v1.5h-2.8zM461.3 217.7h3.4v1.5h-3.4zM462.9 217.7h2.8v1.5h-2.8zM474.1 221.9h2.8v1.5h-2.8zM477.3 221.9h3.4v1.5h-3.4zM478.9 221.9h3.4v1.5h-3.4zM483.7 230.4h3.4v1.5h-3.4zM486.9 230.4h3.4v1.5h-3.4zM490.1 230.4h3.4v1.5h-3.4zM491.7 226.2h3.4v1.5h-3.4zM494.9 226.2h2.2v1.5h-2.2zM496.5 226.2h3.4v1.5h-3.4zM498.1 221.9h2.8v1.5h-2.8zM499.7 221.9h3.4v1.5h-3.4zM504.5 221.9h2.2v1.5h-2.2zM506.1 221.9h2.2v1.5h-2.2zM507.7 221.9h2.8v1.5h-2.8zM512.5 230.4h2.8v1.5h-2.8zM515.7 230.4h2.8v1.5h-2.8zM517.3 234.7h2.8v1.5h-2.8zM528.5 251.6h2.8v1.5h-2.8zM531.7 251.6h2.8v1.5h-2.8zM532.4 248.2h1.0v4.2h-1.0zM539.7 238.9h2.2v1.5h-2.2zM541.3 238.9h2.8v1.5h-2.8zM542.9 238.9h3.4v1.5h-3.4zM544.5 238.9h3.4v1.5h-3.4zM547.7 238.9h3.4v1.5h-3.4zM550.9 243.2h3.4v1.5h-3.4zM554.1 247.4h2.8v1.5h-2.8zM560.5 238.9h2.8v1.5h-2.8zM562.1 243.2h2.2v1.5h-2.2zM565.3 243.2h3.4v1.5h-3.4zM566.0 243.9h1.0v4.2h-1.0zM566.9 243.2h2.2v1.5h-2.2zM568.5 243.2h3.4v1.5h-3.4zM570.1 243.2h2.2v1.5h-2.2zM573.3 243.2h3.4v1.5h-3.4zM576.5 247.4h2.8v1.5h-2.8zM579.7 251.6h2.8v1.5h-2.8zM582.9 260.1h2.2v1.5h-2.2zM583.6 260.9h1.0v4.2h-1.0zM586.1 260.1h2.2v1.5h-2.2zM592.5 260.1h3.4v1.5h-3.4zM594.1 260.1h3.4v1.5h-3.4zM595.7 260.1h2.2v1.5h-2.2zM597.3 260.1h2.8v1.5h-2.8zM598.9 260.1h2.2v1.5h-2.2zM600.5 260.1h2.2v1.5h-2.2zM603.7 264.4h2.8v1.5h-2.8zM608.5 268.6h2.2v1.5h-2.2zM610.1 268.6h3.4v1.5h-3.4zM610.8 265.1h1.0v4.2h-1.0zM611.7 268.6h2.8v1.5h-2.8zM613.3 268.6h2.8v1.5h-2.8zM618.1 277.1h3.4v1.5h-3.4zM621.3 272.9h3.4v1.5h-3.4zM622.9 272.9h3.4v1.5h-3.4zM624.5 272.9h3.4v1.5h-3.4zM630.9 268.6h2.8v1.5h-2.8zM632.5 268.6h2.8v1.5h-2.8zM634.1 268.6h2.2v1.5h-2.2zM638.9 268.6h2.8v1.5h-2.8zM639.6 269.4h1.0v4.2h-1.0zM640.5 268.6h2.2v1.5h-2.2zM642.1 272.9h2.8v1.5h-2.8zM645.3 277.1h2.8v1.5h-2.8zM653.3 277.1h2.2v1.5h-2.2zM654.0 277.9h1.0v4.2h-1.0zM654.9 277.1h2.2v1.5h-2.2zM656.5 277.1h2.8v1.5h-2.8zM657.2 277.9h1.0v4.2h-1.0zM658.1 277.1h3.4v1.5h-3.4zM659.7 272.9h3.4v1.5h-3.4zM660.4 273.6h1.0v4.2h-1.0zM661.3 272.9h3.4v1.5h-3.4zM662.9 272.9h2.2v1.5h-2.2zM664.5 272.9h2.8v1.5h-2.8zM665.2 273.6h1.0v4.2h-1.0zM666.1 268.6h2.2v1.5h-2.2zM667.7 268.6h2.8v1.5h-2.8zM670.9 268.6h2.8v1.5h-2.8zM677.3 264.4h3.4v1.5h-3.4zM678.0 260.9h1.0v4.2h-1.0zM678.9 264.4h3.4v1.5h-3.4zM682.1 268.6h3.4v1.5h-3.4zM683.7 268.6h2.8v1.5h-2.8zM685.3 268.6h2.8v1.5h-2.8zM690.1 272.9h2.2v1.5h-2.2zM691.7 272.9h3.4v1.5h-3.4zM696.5 268.6h3.4v1.5h-3.4zM698.1 268.6h3.4v1.5h-3.4zM702.9 268.6h2.2v1.5h-2.2zM704.5 268.6h2.2v1.5h-2.2zM707.7 264.4h2.8v1.5h-2.8zM709.3 264.4h3.4v1.5h-3.4zM710.9 264.4h2.2v1.5h-2.2zM712.5 264.4h2.2v1.5h-2.2zM713.2 265.1h1.0v4.2h-1.0zM714.1 260.1h2.2v1.5h-2.2zM715.7 264.4h2.2v1.5h-2.2zM718.9 264.4h2.2v1.5h-2.2zM720.5 264.4h2.2v1.5h-2.2zM726.9 268.6h2.8v1.5h-2.8zM731.7 264.4h2.8v1.5h-2.8zM739.7 247.4h2.8v1.5h-2.8zM742.9 243.2h2.2v1.5h-2.2zM746.1 243.2h3.4v1.5h-3.4zM749.3 247.4h3.4v1.5h-3.4zM750.9 247.4h3.4v1.5h-3.4zM752.5 243.2h2.8v1.5h-2.8zM754.1 243.2h2.2v1.5h-2.2zM755.7 243.2h3.4v1.5h-3.4zM757.3 247.4h2.8v1.5h-2.8zM762.1 251.6h2.2v1.5h-2.2zM768.5 251.6h3.4v1.5h-3.4zM769.2 248.2h1.0v4.2h-1.0zM771.7 251.6h3.4v1.5h-3.4zM773.3 251.6h2.2v1.5h-2.2zM779.7 247.4h3.4v1.5h-3.4zM782.9 247.4h2.2v1.5h-2.2zM784.5 247.4h2.8v1.5h-2.8zM786.1 247.4h2.8v1.5h-2.8zM786.8 248.2h1.0v4.2h-1.0zM801.0 268.6h3.4v1.5h-3.4zM804.2 272.9h2.2v1.5h-2.2zM805.8 272.9h2.2v1.5h-2.2zM813.8 264.4h3.4v1.5h-3.4zM817.0 260.1h3.4v1.5h-3.4zM818.6 264.4h2.8v1.5h-2.8zM821.8 255.9h3.4v1.5h-3.4zM823.4 255.9h2.8v1.5h-2.8zM831.4 251.6h3.4v1.5h-3.4zM833.0 251.6h3.4v1.5h-3.4zM834.6 247.4h2.2v1.5h-2.2zM837.8 243.2h2.2v1.5h-2.2zM839.4 238.9h3.4v1.5h-3.4zM842.6 247.4h2.8v1.5h-2.8zM844.2 247.4h3.4v1.5h-3.4zM844.9 243.9h1.0v4.2h-1.0zM845.8 247.4h3.4v1.5h-3.4zM847.4 243.2h2.2v1.5h-2.2zM855.4 255.9h2.8v1.5h-2.8zM869.8 260.1h3.4v1.5h-3.4zM874.6 264.4h2.8v1.5h-2.8zM876.2 268.6h3.4v1.5h-3.4zM882.6 243.2h2.2v1.5h-2.2zM885.8 234.7h2.2v1.5h-2.2zM886.5 235.4h1.0v4.2h-1.0zM892.2 221.9h2.2v1.5h-2.2zM892.9 222.7h1.0v4.2h-1.0zM895.4 217.7h2.2v1.5h-2.2zM901.8 226.2h3.4v1.5h-3.4zM917.8 192.2h2.2v1.5h-2.2zM921.0 196.5h2.8v1.5h-2.8zM922.6 200.7h2.2v1.5h-2.2zM924.2 200.7h2.2v1.5h-2.2zM925.8 200.7h2.8v1.5h-2.8zM929.0 200.7h2.2v1.5h-2.2zM932.2 205.0h2.8v1.5h-2.8zM935.4 209.2h2.2v1.5h-2.2zM937.0 209.2h2.2v1.5h-2.2zM938.6 209.2h2.2v1.5h-2.2zM948.2 192.2h2.8v1.5h-2.8zM953.0 200.7h3.4v1.5h-3.4zM961.0 200.7h2.8v1.5h-2.8zM969.0 213.4h2.8v1.5h-2.8zM975.4 217.7h2.8v1.5h-2.8zM976.1 214.2h1.0v4.2h-1.0zM978.6 213.4h2.8v1.5h-2.8zM981.8 209.2h2.8v1.5h-2.8zM986.6 209.2h2.8v1.5h-2.8zM988.2 213.4h3.4v1.5h-3.4zM991.4 213.4h3.4v1.5h-3.4zM992.1 209.9h1.0v4.2h-1.0zM999.4 217.7h2.2v1.5h-2.2zM1001.0 221.9h3.4v1.5h-3.4zM1002.6 226.2h2.8v1.5h-2.8zM1004.2 226.2h2.2v1.5h-2.2zM1005.8 226.2h2.2v1.5h-2.2zM1007.4 226.2h3.4v1.5h-3.4zM1009.0 226.2h2.2v1.5h-2.2zM1010.6 226.2h2.8v1.5h-2.8zM1012.2 226.2h3.4v1.5h-3.4zM1012.9 226.9h1.0v4.2h-1.0zM1013.8 226.2h2.8v1.5h-2.8zM1015.4 226.2h2.8v1.5h-2.8zM1017.0 226.2h3.4v1.5h-3.4zM1026.6 234.7h2.2v1.5h-2.2zM1034.6 238.9h2.2v1.5h-2.2zM1036.2 238.9h3.4v1.5h-3.4zM1039.4 243.2h3.4v1.5h-3.4zM1044.2 238.9h2.2v1.5h-2.2zM1049.0 234.7h3.4v1.5h-3.4zM1055.4 221.9h2.2v1.5h-2.2zM1057.0 221.9h3.4v1.5h-3.4zM1057.7 222.7h1.0v4.2h-1.0zM1060.2 217.7h3.4v1.5h-3.4zM1061.8 221.9h2.8v1.5h-2.8zM1063.4 221.9h2.2v1.5h-2.2zM1066.6 221.9h3.4v1.5h-3.4zM1071.4 217.7h2.8v1.5h-2.8zM1077.8 205.0h3.4v1.5h-3.4zM1078.5 205.7h1.0v4.2h-1.0zM1079.4 209.2h2.2v1.5h-2.2zM1082.6 209.2h3.4v1.5h-3.4zM1087.4 209.2h2.8v1.5h-2.8zM1089.0 209.2h2.8v1.5h-2.8zM1090.6 209.2h2.8v1.5h-2.8zM1092.2 209.2h2.2v1.5h-2.2zM1093.8 205.0h2.8v1.5h-2.8zM1095.4 205.0h2.8v1.5h-2.8zM1101.8 192.2h2.2v1.5h-2.2zM1103.4 192.2h2.8v1.5h-2.8zM1105.0 192.2h2.2v1.5h-2.2zM1106.6 192.2h3.4v1.5h-3.4zM1111.4 188.0h2.8v1.5h-2.8zM1113.0 188.0h2.2v1.5h-2.2zM1116.2 188.0h2.2v1.5h-2.2zM1117.8 192.2h2.8v1.5h-2.8zM1119.4 192.2h3.4v1.5h-3.4zM1124.2 192.2h2.8v1.5h-2.8zM1125.8 192.2h3.4v1.5h-3.4zM1127.4 192.2h2.2v1.5h-2.2zM1135.4 188.0h2.8v1.5h-2.8zM1136.1 188.7h1.0v4.2h-1.0zM1137.0 188.0h2.2v1.5h-2.2zM1138.6 188.0h3.4v1.5h-3.4zM1139.3 188.7h1.0v4.2h-1.0zM1141.8 188.0h3.4v1.5h-3.4zM1142.5 188.7h1.0v4.2h-1.0zM1143.4 188.0h2.2v1.5h-2.2zM1145.0 188.0h3.4v1.5h-3.4zM1146.6 188.0h3.4v1.5h-3.4zM1148.2 188.0h2.2v1.5h-2.2zM1151.4 192.2h3.4v1.5h-3.4zM1156.2 196.5h3.4v1.5h-3.4zM1159.4 200.7h2.2v1.5h-2.2zM1162.6 205.0h3.4v1.5h-3.4zM1164.2 209.2h3.4v1.5h-3.4zM1170.6 209.2h3.4v1.5h-3.4zM1172.2 209.2h2.2v1.5h-2.2zM1175.4 205.0h2.2v1.5h-2.2zM1178.6 205.0h2.2v1.5h-2.2zM1179.3 201.5h1.0v4.2h-1.0zM1180.2 205.0h2.8v1.5h-2.8zM1181.8 205.0h2.2v1.5h-2.2zM1185.0 209.2h3.4v1.5h-3.4zM1186.6 213.4h2.8v1.5h-2.8zM1202.6 171.0h2.2v1.5h-2.2zM1209.0 183.7h3.4v1.5h-3.4zM1212.2 188.0h3.4v1.5h-3.4zM1213.8 192.2h2.2v1.5h-2.2zM1214.5 188.7h1.0v4.2h-1.0zM1217.0 196.5h2.2v1.5h-2.2zM1218.6 200.7h3.4v1.5h-3.4zM1221.8 205.0h3.4v1.5h-3.4zM1222.5 201.5h1.0v4.2h-1.0zM1223.4 205.0h3.4v1.5h-3.4zM1226.6 209.2h3.4v1.5h-3.4zM1228.2 209.2h2.2v1.5h-2.2zM1228.9 209.9h1.0v4.2h-1.0zM1229.8 209.2h2.8v1.5h-2.8zM1231.4 209.2h3.4v1.5h-3.4zM1242.6 209.2h2.8v1.5h-2.8zM1244.2 209.2h2.2v1.5h-2.2zM1253.8 200.7h2.8v1.5h-2.8zM1255.4 200.7h2.2v1.5h-2.2zM1260.2 196.5h3.4v1.5h-3.4zM1265.0 192.2h2.2v1.5h-2.2zM1265.7 188.7h1.0v4.2h-1.0zM1266.6 192.2h2.2v1.5h-2.2zM1267.3 188.7h1.0v4.2h-1.0zM1273.0 205.0h3.4v1.5h-3.4zM1277.8 200.7h2.2v1.5h-2.2zM1278.5 201.5h1.0v4.2h-1.0zM1281.0 196.5h2.2v1.5h-2.2zM1282.6 196.5h2.2v1.5h-2.2zM1284.2 196.5h3.4v1.5h-3.4zM1289.0 200.7h2.8v1.5h-2.8zM1290.6 200.7h2.8v1.5h-2.8zM1297.0 192.2h3.4v1.5h-3.4zM1298.6 192.2h2.2v1.5h-2.2zM1313.0 226.2h3.4v1.5h-3.4zM1319.4 221.9h2.2v1.5h-2.2zM1321.0 217.7h2.2v1.5h-2.2zM1322.6 217.7h2.2v1.5h-2.2zM1335.4 213.4h2.2v1.5h-2.2zM1337.0 213.4h2.8v1.5h-2.8zM1341.8 217.7h3.4v1.5h-3.4zM1346.6 217.7h2.2v1.5h-2.2zM1347.3 214.2h1.0v4.2h-1.0zM1349.8 217.7h2.2v1.5h-2.2zM1353.0 209.2h2.2v1.5h-2.2zM1356.2 200.7h3.4v1.5h-3.4zM1359.4 192.2h2.2v1.5h-2.2zM1365.8 209.2h3.4v1.5h-3.4zM1367.4 209.2h3.4v1.5h-3.4zM1372.2 200.7h3.4v1.5h-3.4zM1375.4 205.0h3.4v1.5h-3.4zM1380.2 217.7h2.8v1.5h-2.8zM1396.2 149.8h3.4v1.5h-3.4zM1425.0 145.5h3.4v1.5h-3.4zM1425.7 146.3h1.0v4.2h-1.0zM1426.6 149.8h2.8v1.5h-2.8zM1433.0 145.5h3.4v1.5h-3.4zM1436.2 141.3h3.4v1.5h-3.4zM1439.4 137.0h2.2v1.5h-2.2zM1441.0 137.0h3.4v1.5h-3.4zM1442.6 141.3h2.2v1.5h-2.2zM1443.3 137.8h1.0v4.2h-1.0zM1449.0 132.8h2.2v1.5h-2.2zM1453.8 115.8h3.4v1.5h-3.4zM1461.8 107.3h2.2v1.5h-2.2zM1462.5 108.1h1.0v4.2h-1.0zM1463.4 98.8h2.8v1.5h-2.8zM1476.2 149.8h2.8v1.5h-2.8zM1485.8 141.3h2.8v1.5h-2.8zM1489.0 141.3h3.4v1.5h-3.4zM1490.6 137.0h2.8v1.5h-2.8zM1495.4 154.0h3.4v1.5h-3.4zM1496.1 150.5h1.0v4.2h-1.0zM1497.0 158.3h2.8v1.5h-2.8zM1500.2 162.5h3.4v1.5h-3.4zM1503.4 166.7h2.8v1.5h-2.8zM1505.0 166.7h2.2v1.5h-2.2zM1506.6 162.5h2.8v1.5h-2.8zM1508.2 162.5h2.2v1.5h-2.2zM1509.8 162.5h2.8v1.5h-2.8zM1519.4 149.8h2.8v1.5h-2.8zM1522.6 154.0h3.4v1.5h-3.4zM1524.2 154.0h2.2v1.5h-2.2zM1530.6 145.5h3.4v1.5h-3.4zM1532.2 141.3h2.8v1.5h-2.8zM1533.8 141.3h2.2v1.5h-2.2zM1538.6 149.8h2.2v1.5h-2.2zM1540.2 145.5h3.4v1.5h-3.4zM1556.2 175.2h3.4v1.5h-3.4zM1565.8 179.5h3.4v1.5h-3.4zM1578.6 175.2h2.8v1.5h-2.8zM1583.4 179.5h3.4v1.5h-3.4zM1586.6 183.7h2.8v1.5h-2.8zM1588.2 183.7h2.8v1.5h-2.8zM1588.9 184.5h1.0v4.2h-1.0zM1604.2 179.5h2.8v1.5h-2.8zM1628.2 171.0h3.4v1.5h-3.4zM1636.2 166.7h2.8v1.5h-2.8zM1636.9 167.5h1.0v4.2h-1.0zM1644.2 162.5h3.4v1.5h-3.4zM1650.6 162.5h3.4v1.5h-3.4zM1657.0 149.8h2.2v1.5h-2.2zM1658.6 154.0h2.2v1.5h-2.2zM1659.3 154.8h1.0v4.2h-1.0zM1665.0 158.3h3.4v1.5h-3.4zM1671.4 171.0h3.4v1.5h-3.4zM1672.1 171.7h1.0v4.2h-1.0zM1679.4 162.5h2.8v1.5h-2.8zM1695.4 179.5h3.4v1.5h-3.4zM1705.0 196.5h2.8v1.5h-2.8zM1706.6 196.5h3.4v1.5h-3.4zM1707.3 197.2h1.0v4.2h-1.0zM1709.8 196.5h3.4v1.5h-3.4zM1713.0 192.2h2.8v1.5h-2.8zM1714.6 192.2h2.8v1.5h-2.8zM1725.8 205.0h3.4v1.5h-3.4zM1726.5 201.5h1.0v4.2h-1.0zM1729.0 200.7h2.8v1.5h-2.8zM1732.2 200.7h3.4v1.5h-3.4zM1740.2 192.2h2.2v1.5h-2.2zM1741.8 192.2h3.4v1.5h-3.4zM1745.0 188.0h2.2v1.5h-2.2zM1751.4 192.2h3.4v1.5h-3.4zM1762.6 205.0h3.4v1.5h-3.4zM1764.2 205.0h2.8v1.5h-2.8zM1769.0 209.2h2.2v1.5h-2.2zM1772.2 213.4h2.2v1.5h-2.2zM1775.4 213.4h2.2v1.5h-2.2zM1785.0 217.7h3.4v1.5h-3.4zM1789.8 209.2h3.4v1.5h-3.4zM1794.6 209.2h2.2v1.5h-2.2zM1797.8 209.2h3.4v1.5h-3.4zM1802.6 209.2h2.8v1.5h-2.8zM1805.8 209.2h2.8v1.5h-2.8zM1807.4 205.0h2.8v1.5h-2.8zM1810.6 205.0h2.8v1.5h-2.8zM1813.8 205.0h2.8v1.5h-2.8zM1814.5 201.5h1.0v4.2h-1.0zM1818.6 196.5h2.2v1.5h-2.2zM1829.8 205.0h2.2v1.5h-2.2zM1831.4 205.0h2.8v1.5h-2.8zM1839.4 188.0h3.4v1.5h-3.4zM1841.0 183.7h2.2v1.5h-2.2zM1842.6 183.7h3.4v1.5h-3.4zM1850.6 192.2h3.4v1.5h-3.4zM1855.4 192.2h2.8v1.5h-2.8zM1858.6 192.2h3.4v1.5h-3.4zM1860.2 192.2h3.4v1.5h-3.4zM1865.0 183.7h3.4v1.5h-3.4zM1871.4 192.2h3.4v1.5h-3.4zM1873.0 192.2h2.2v1.5h-2.2zM1877.8 196.5h2.8v1.5h-2.8zM1884.2 200.7h3.4v1.5h-3.4zM1885.8 200.7h2.8v1.5h-2.8zM1890.6 205.0h2.8v1.5h-2.8zM1892.2 205.0h2.8v1.5h-2.8zM1893.8 205.0h2.8v1.5h-2.8zM1897.0 200.7h3.4v1.5h-3.4zM1901.8 196.5h3.4v1.5h-3.4zM1906.6 200.7h3.4v1.5h-3.4zM1919.4 179.5h2.2v1.5h-2.2zM1925.8 179.5h2.8v1.5h-2.8zM1926.5 180.2h1.0v4.2h-1.0z"/>
<path fill="#0a84ff" d="M29.5 285.8h2.0v5.4h-2.0zM30.0 282.1h1.0v4.2h-1.0zM34.3 285.8h2.0v5.4h-2.0zM39.1 298.5h2.0v9.7h-2.0zM63.1 307.0h2.0v5.4h-2.0zM63.6 311.8h1.0v4.2h-1.0zM64.7 311.2h2.0v5.4h-2.0zM66.3 315.5h2.0v9.7h-2.0zM66.8 311.8h1.0v4.2h-1.0zM67.9 319.7h2.0v9.7h-2.0zM71.1 332.4h2.0v5.4h-2.0zM72.7 336.7h2.0v5.4h-2.0zM74.3 345.2h2.0v5.4h-2.0zM101.5 345.2h2.0v5.4h-2.0zM102.0 350.0h1.0v4.2h-1.0zM163.9 290.0h2.0v5.4h-2.0zM167.1 298.5h2.0v9.7h-2.0zM170.3 298.5h2.0v5.4h-2.0zM170.8 294.8h1.0v4.2h-1.0zM191.0 268.8h2.0v5.4h-2.0zM194.2 268.8h2.0v5.4h-2.0zM195.8 268.8h2.0v5.4h-2.0zM197.4 273.0h2.0v5.4h-2.0zM203.8 277.3h2.0v5.4h-2.0zM213.4 277.3h2.0v5.4h-2.0zM215.0 281.5h2.0v5.4h-2.0zM215.5 286.4h1.0v4.2h-1.0zM234.2 260.3h2.0v5.4h-2.0zM235.8 260.3h2.0v5.4h-2.0zM237.4 268.8h2.0v5.4h-2.0zM239.0 268.8h2.0v5.4h-2.0zM279.0 260.3h2.0v5.4h-2.0zM285.4 264.5h2.0v5.4h-2.0zM299.8 268.8h2.0v5.4h-2.0zM300.3 260.9h1.0v8.5h-1.0zM303.0 273.0h2.0v5.4h-2.0zM315.8 260.3h2.0v5.4h-2.0zM317.4 264.5h2.0v5.4h-2.0zM319.0 268.8h2.0v5.4h-2.0zM319.5 273.6h1.0v4.2h-1.0zM320.6 273.0h2.0v5.4h-2.0zM321.1 265.1h1.0v8.5h-1.0zM322.2 273.0h2.0v5.4h-2.0zM373.4 251.8h2.0v5.4h-2.0zM378.2 251.8h2.0v5.4h-2.0zM439.0 200.9h2.0v5.4h-2.0zM440.6 205.1h2.0v5.4h-2.0zM442.2 209.3h2.0v5.4h-2.0zM443.8 209.3h2.0v5.4h-2.0zM448.6 217.8h2.0v5.4h-2.0zM450.2 217.8h2.0v5.4h-2.0zM451.8 222.1h2.0v5.4h-2.0zM459.8 213.6h2.0v5.4h-2.0zM464.6 217.8h2.0v5.4h-2.0zM466.2 217.8h2.0v5.4h-2.0zM467.8 217.8h2.0v5.4h-2.0zM469.4 217.8h2.0v5.4h-2.0zM471.0 217.8h2.0v5.4h-2.0zM475.8 217.8h2.0v5.4h-2.0zM485.4 226.3h2.0v5.4h-2.0zM503.0 217.8h2.0v5.4h-2.0zM511.0 226.3h2.0v5.4h-2.0zM511.5 231.2h1.0v4.2h-1.0zM514.2 230.6h2.0v5.4h-2.0zM514.7 222.7h1.0v8.5h-1.0zM522.2 226.3h2.0v13.9h-2.0zM523.8 239.1h2.0v5.4h-2.0zM524.3 243.9h1.0v4.2h-1.0zM525.4 239.1h2.0v9.7h-2.0zM527.0 243.3h2.0v5.4h-2.0zM527.5 248.2h1.0v8.5h-1.0zM530.2 247.6h2.0v5.4h-2.0zM546.2 239.1h2.0v5.4h-2.0zM546.7 235.4h1.0v4.2h-1.0zM552.6 243.3h2.0v5.4h-2.0zM563.8 239.1h2.0v5.4h-2.0zM571.8 243.3h2.0v5.4h-2.0zM578.2 247.6h2.0v5.4h-2.0zM578.7 243.9h1.0v4.2h-1.0zM581.4 251.8h2.0v9.7h-2.0zM602.2 260.3h2.0v5.4h-2.0zM602.7 265.1h1.0v4.2h-1.0zM605.4 264.5h2.0v5.4h-2.0zM615.0 268.8h2.0v5.4h-2.0zM615.5 260.9h1.0v8.5h-1.0zM616.6 273.0h2.0v5.4h-2.0zM617.1 269.4h1.0v4.2h-1.0zM626.2 268.8h2.0v5.4h-2.0zM637.4 264.5h2.0v5.4h-2.0zM643.8 273.0h2.0v5.4h-2.0zM647.0 277.3h2.0v5.4h-2.0zM674.2 264.5h2.0v5.4h-2.0zM674.7 269.4h1.0v4.2h-1.0zM675.8 264.5h2.0v5.4h-2.0zM687.0 268.8h2.0v5.4h-2.0zM699.8 268.8h2.0v5.4h-2.0zM717.4 260.3h2.0v5.4h-2.0zM722.2 264.5h2.0v5.4h-2.0zM723.8 264.5h2.0v5.4h-2.0zM747.8 243.3h2.0v5.4h-2.0zM759.0 247.6h2.0v5.4h-2.0zM760.6 247.6h2.0v5.4h-2.0zM761.1 239.7h1.0v8.5h-1.0zM765.4 247.6h2.0v5.4h-2.0zM799.5 264.5h2.0v5.4h-2.0zM802.7 268.8h2.0v5.4h-2.0zM825.1 256.0h2.0v5.4h-2.0zM826.7 260.3h2.0v5.4h-2.0zM841.1 239.1h2.0v5.4h-2.0zM849.1 239.1h2.0v9.7h-2.0zM850.7 247.6h2.0v9.7h-2.0zM851.2 256.6h1.0v5.5h-1.0zM852.3 256.0h2.0v5.4h-2.0zM852.8 260.9h1.0v11.0h-1.0zM861.9 239.1h2.0v9.7h-2.0zM863.5 247.6h2.0v9.7h-2.0zM865.1 251.8h2.0v5.4h-2.0zM865.6 256.6h1.0v5.5h-1.0zM866.7 256.0h2.0v5.4h-2.0zM868.3 260.3h2.0v5.4h-2.0zM871.5 260.3h2.0v5.4h-2.0zM873.1 264.5h2.0v5.4h-2.0zM873.6 259.6h1.0v5.5h-1.0zM897.1 217.8h2.0v5.4h-2.0zM897.6 222.7h1.0v11.0h-1.0zM898.7 217.8h2.0v5.4h-2.0zM899.2 207.4h1.0v11.0h-1.0zM900.3 226.3h2.0v5.4h-2.0zM914.7 192.4h2.0v5.4h-2.0zM919.5 192.4h2.0v5.4h-2.0zM930.7 200.9h2.0v5.4h-2.0zM943.5 200.9h2.0v5.4h-2.0zM949.9 192.4h2.0v5.4h-2.0zM956.3 192.4h2.0v5.4h-2.0zM957.9 196.6h2.0v5.4h-2.0zM959.5 196.6h2.0v5.4h-2.0zM964.3 200.9h2.0v5.4h-2.0zM965.9 205.1h2.0v5.4h-2.0zM967.5 209.3h2.0v5.4h-2.0zM972.3 217.8h2.0v5.4h-2.0zM972.8 214.2h1.0v4.2h-1.0zM973.9 217.8h2.0v5.4h-2.0zM983.5 209.3h2.0v5.4h-2.0zM985.1 209.3h2.0v5.4h-2.0zM997.9 213.6h2.0v5.4h-2.0zM1021.9 222.1h2.0v5.4h-2.0zM1023.5 226.3h2.0v5.4h-2.0zM1024.0 231.2h1.0v4.2h-1.0zM1025.1 230.6h2.0v5.4h-2.0zM1025.6 235.4h1.0v4.2h-1.0zM1031.5 230.6h2.0v5.4h-2.0zM1033.1 230.6h2.0v5.4h-2.0zM1037.9 239.1h2.0v5.4h-2.0zM1065.1 222.1h2.0v5.4h-2.0zM1068.3 217.8h2.0v5.4h-2.0zM1081.1 205.1h2.0v5.4h-2.0zM1084.3 205.1h2.0v5.4h-2.0zM1129.1 192.4h2.0v5.4h-2.0zM1130.7 196.6h2.0v5.4h-2.0zM1140.3 188.1h2.0v5.4h-2.0zM1149.9 188.1h2.0v5.4h-2.0zM1153.1 192.4h2.0v5.4h-2.0zM1154.7 192.4h2.0v5.4h-2.0zM1157.9 196.6h2.0v5.4h-2.0zM1161.1 200.9h2.0v5.4h-2.0zM1161.6 205.7h1.0v8.5h-1.0zM1183.5 205.1h2.0v5.4h-2.0zM1184.0 209.9h1.0v8.5h-1.0zM1197.9 171.1h2.0v5.4h-2.0zM1204.3 171.1h2.0v5.4h-2.0zM1205.9 171.1h2.0v5.4h-2.0zM1207.5 175.4h2.0v9.7h-2.0zM1215.5 192.4h2.0v5.4h-2.0zM1216.0 197.2h1.0v8.5h-1.0zM1220.3 196.6h2.0v9.7h-2.0zM1220.8 205.7h1.0v4.2h-1.0zM1225.1 205.1h2.0v5.4h-2.0zM1225.6 209.9h1.0v8.5h-1.0zM1233.1 209.3h2.0v5.4h-2.0zM1233.6 214.2h1.0v8.5h-1.0zM1234.7 209.3h2.0v5.4h-2.0zM1236.3 209.3h2.0v5.4h-2.0zM1252.3 196.6h2.0v5.4h-2.0zM1268.3 192.4h2.0v5.4h-2.0zM1268.8 188.7h1.0v4.2h-1.0zM1269.9 196.6h2.0v5.4h-2.0zM1271.5 200.9h2.0v5.4h-2.0zM1287.5 196.6h2.0v5.4h-2.0zM1288.0 188.7h1.0v8.5h-1.0zM1300.3 192.4h2.0v5.4h-2.0zM1301.9 192.4h2.0v5.4h-2.0zM1303.5 196.6h2.0v5.4h-2.0zM1305.1 200.9h2.0v5.4h-2.0zM1306.7 200.9h2.0v9.7h-2.0zM1308.3 209.3h2.0v5.4h-2.0zM1309.9 213.6h2.0v5.4h-2.0zM1311.5 217.8h2.0v5.4h-2.0zM1330.7 196.6h2.0v5.4h-2.0zM1331.2 201.5h1.0v6.8h-1.0zM1333.9 205.1h2.0v9.7h-2.0zM1340.3 213.6h2.0v5.4h-2.0zM1343.5 213.6h2.0v5.4h-2.0zM1345.1 213.6h2.0v9.7h-2.0zM1345.6 222.7h1.0v6.8h-1.0zM1357.9 196.6h2.0v5.4h-2.0zM1358.4 201.5h1.0v6.8h-1.0zM1362.7 192.4h2.0v13.9h-2.0zM1363.2 205.7h1.0v13.6h-1.0zM1364.3 200.9h2.0v9.7h-2.0zM1364.8 209.9h1.0v13.6h-1.0zM1373.9 200.9h2.0v5.4h-2.0zM1374.4 205.7h1.0v6.8h-1.0zM1378.7 205.1h2.0v9.7h-2.0zM1381.9 213.6h2.0v5.4h-2.0zM1397.9 149.9h2.0v5.4h-2.0zM1398.4 154.8h1.0v6.8h-1.0zM1399.5 154.2h2.0v9.7h-2.0zM1402.7 154.2h2.0v9.7h-2.0zM1403.2 163.2h1.0v6.8h-1.0zM1405.9 154.2h2.0v9.7h-2.0zM1407.5 162.7h2.0v5.4h-2.0zM1408.0 156.5h1.0v6.8h-1.0zM1410.7 158.4h2.0v5.4h-2.0zM1412.3 158.4h2.0v5.4h-2.0zM1413.9 149.9h2.0v13.9h-2.0zM1414.4 163.2h1.0v6.8h-1.0zM1417.1 154.2h2.0v5.4h-2.0zM1417.6 148.0h1.0v6.8h-1.0zM1421.9 149.9h2.0v5.4h-2.0zM1429.9 137.2h2.0v18.2h-2.0zM1430.4 124.2h1.0v13.6h-1.0zM1444.3 141.4h2.0v5.4h-2.0zM1444.8 146.3h1.0v6.8h-1.0zM1447.5 132.9h2.0v5.4h-2.0zM1448.0 137.8h1.0v6.8h-1.0zM1465.1 99.0h2.0v5.4h-2.0zM1466.7 103.2h2.0v5.4h-2.0zM1467.2 97.0h1.0v6.8h-1.0zM1468.3 107.5h2.0v5.4h-2.0zM1468.8 112.3h1.0v6.8h-1.0zM1469.9 116.0h2.0v5.4h-2.0zM1470.4 120.8h1.0v13.6h-1.0zM1471.5 120.2h2.0v9.7h-2.0zM1472.0 129.3h1.0v13.6h-1.0zM1473.1 132.9h2.0v13.9h-2.0zM1474.7 141.4h2.0v9.7h-2.0zM1475.2 128.4h1.0v13.6h-1.0zM1484.3 137.2h2.0v5.4h-2.0zM1484.8 131.0h1.0v6.8h-1.0zM1492.3 141.4h2.0v13.9h-2.0zM1493.9 149.9h2.0v5.4h-2.0zM1498.7 158.4h2.0v13.9h-2.0zM1501.9 162.7h2.0v9.7h-2.0zM1521.1 149.9h2.0v5.4h-2.0zM1535.5 145.7h2.0v5.4h-2.0zM1543.5 149.9h2.0v5.4h-2.0zM1545.1 158.4h2.0v5.4h-2.0zM1545.6 163.2h1.0v6.8h-1.0zM1546.7 158.4h2.0v9.7h-2.0zM1547.2 152.2h1.0v6.8h-1.0zM1548.3 162.7h2.0v5.4h-2.0zM1548.8 167.5h1.0v6.8h-1.0zM1549.9 166.9h2.0v9.7h-2.0zM1550.4 176.0h1.0v6.8h-1.0zM1551.5 175.4h2.0v5.4h-2.0zM1553.1 175.4h2.0v5.4h-2.0zM1559.5 166.9h2.0v5.4h-2.0zM1561.1 171.1h2.0v5.4h-2.0zM1572.3 162.7h2.0v5.4h-2.0zM1572.8 167.5h1.0v6.8h-1.0zM1577.1 166.9h2.0v5.4h-2.0zM1580.3 175.4h2.0v5.4h-2.0zM1580.8 169.2h1.0v6.8h-1.0zM1581.9 179.6h2.0v5.4h-2.0zM1585.1 183.9h2.0v5.4h-2.0zM1585.6 188.7h1.0v13.6h-1.0zM1589.9 175.4h2.0v5.4h-2.0zM1590.4 162.4h1.0v13.6h-1.0zM1597.9 162.7h2.0v5.4h-2.0zM1598.4 167.5h1.0v6.8h-1.0zM1601.1 166.9h2.0v5.4h-2.0zM1601.6 160.7h1.0v6.8h-1.0zM1605.9 179.6h2.0v5.4h-2.0zM1607.5 179.6h2.0v9.7h-2.0zM1608.0 173.4h1.0v6.8h-1.0zM1666.7 154.2h2.0v5.4h-2.0zM1667.2 150.5h1.0v4.2h-1.0zM1682.7 158.4h2.0v5.4h-2.0zM1684.3 158.4h2.0v5.4h-2.0zM1684.8 163.2h1.0v4.2h-1.0zM1692.3 171.1h2.0v5.4h-2.0zM1693.9 175.4h2.0v5.4h-2.0zM1697.1 179.6h2.0v5.4h-2.0zM1698.7 183.9h2.0v5.4h-2.0zM1699.2 176.0h1.0v8.5h-1.0zM1700.3 188.1h2.0v5.4h-2.0zM1708.3 196.6h2.0v5.4h-2.0zM1717.9 192.4h2.0v5.4h-2.0zM1719.5 196.6h2.0v5.4h-2.0zM1721.1 196.6h2.0v5.4h-2.0zM1721.6 201.5h1.0v8.5h-1.0zM1727.5 200.9h2.0v5.4h-2.0zM1749.9 188.1h2.0v5.4h-2.0zM1753.1 188.1h2.0v5.4h-2.0zM1754.7 192.4h2.0v9.7h-2.0zM1757.9 200.9h2.0v5.4h-2.0zM1761.1 200.9h2.0v5.4h-2.0zM1796.3 209.3h2.0v5.4h-2.0zM1844.3 183.9h2.0v5.4h-2.0zM1844.8 180.2h1.0v4.2h-1.0zM1847.5 188.1h2.0v5.4h-2.0zM1869.9 188.1h2.0v5.4h-2.0zM1874.7 192.4h2.0v5.4h-2.0zM1905.1 200.9h2.0v5.4h-2.0z"/>
<path fill="#ff0000" d="M19.9 290.0h2.0v13.9h-2.0zM26.3 290.0h2.0v5.4h-2.0zM26.8 294.8h1.0v8.5h-1.0zM32.7 285.8h2.0v5.4h-2.0zM45.5 315.5h2.0v5.4h-2.0zM53.5 307.0h2.0v5.4h-2.0zM88.7 353.7h2.0v5.4h-2.0zM93.5 345.2h2.0v5.4h-2.0zM115.9 345.2h2.0v5.4h-2.0zM117.5 340.9h2.0v5.4h-2.0zM119.1 336.7h2.0v5.4h-2.0zM127.1 332.4h2.0v9.7h-2.0zM130.3 324.0h2.0v9.7h-2.0zM135.1 311.2h2.0v5.4h-2.0zM138.3 307.0h2.0v5.4h-2.0zM141.5 302.7h2.0v5.4h-2.0zM151.1 290.0h2.0v5.4h-2.0zM162.3 290.0h2.0v5.4h-2.0zM168.7 298.5h2.0v9.7h-2.0zM176.7 302.7h2.0v5.4h-2.0zM177.2 307.6h1.0v8.5h-1.0zM181.5 298.5h2.0v5.4h-2.0zM186.3 294.2h2.0v5.4h-2.0zM208.6 277.3h2.0v5.4h-2.0zM216.6 281.5h2.0v5.4h-2.0zM218.2 281.5h2.0v5.4h-2.0zM219.8 277.3h2.0v5.4h-2.0zM224.6 273.0h2.0v5.4h-2.0zM227.8 264.5h2.0v9.7h-2.0zM229.4 264.5h2.0v5.4h-2.0zM231.0 260.3h2.0v5.4h-2.0zM232.6 260.3h2.0v5.4h-2.0zM247.0 273.0h2.0v5.4h-2.0zM247.5 269.4h1.0v4.2h-1.0zM251.8 264.5h2.0v5.4h-2.0zM252.3 269.4h1.0v4.2h-1.0zM261.4 256.0h2.0v5.4h-2.0zM274.2 256.0h2.0v5.4h-2.0zM275.8 256.0h2.0v5.4h-2.0zM288.6 268.8h2.0v5.4h-2.0zM295.0 268.8h2.0v5.4h-2.0zM307.8 264.5h2.0v9.7h-2.0zM309.4 260.3h2.0v9.7h-2.0zM311.0 256.0h2.0v5.4h-2.0zM333.4 273.0h2.0v5.4h-2.0zM333.9 277.9h1.0v4.2h-1.0zM338.2 273.0h2.0v5.4h-2.0zM338.7 269.4h1.0v4.2h-1.0zM343.0 268.8h2.0v5.4h-2.0zM354.2 260.3h2.0v9.7h-2.0zM371.8 251.8h2.0v5.4h-2.0zM383.0 251.8h2.0v5.4h-2.0zM384.6 247.6h2.0v9.7h-2.0zM385.1 256.6h1.0v4.2h-1.0zM386.2 247.6h2.0v5.4h-2.0zM400.6 239.1h2.0v5.4h-2.0zM402.2 230.6h2.0v13.9h-2.0zM411.8 230.6h2.0v5.4h-2.0zM412.3 235.4h1.0v8.5h-1.0zM427.8 213.6h2.0v5.4h-2.0zM431.0 209.3h2.0v5.4h-2.0zM437.4 200.9h2.0v5.4h-2.0zM455.0 217.8h2.0v5.4h-2.0zM456.6 217.8h2.0v5.4h-2.0zM458.2 213.6h2.0v5.4h-2.0zM472.6 217.8h2.0v5.4h-2.0zM473.1 222.7h1.0v4.2h-1.0zM488.6 226.3h2.0v5.4h-2.0zM493.4 226.3h2.0v5.4h-2.0zM493.9 231.2h1.0v8.5h-1.0zM501.4 217.8h2.0v5.4h-2.0zM501.9 222.7h1.0v4.2h-1.0zM519.0 230.6h2.0v5.4h-2.0zM520.6 226.3h2.0v5.4h-2.0zM533.4 243.3h2.0v9.7h-2.0zM535.0 243.3h2.0v5.4h-2.0zM538.2 239.1h2.0v5.4h-2.0zM538.7 235.4h1.0v4.2h-1.0zM555.8 243.3h2.0v5.4h-2.0zM557.4 243.3h2.0v5.4h-2.0zM559.0 239.1h2.0v5.4h-2.0zM575.0 243.3h2.0v5.4h-2.0zM584.6 256.0h2.0v5.4h-2.0zM585.1 260.9h1.0v8.5h-1.0zM589.4 256.0h2.0v5.4h-2.0zM607.0 264.5h2.0v5.4h-2.0zM607.5 260.9h1.0v4.2h-1.0zM619.8 273.0h2.0v5.4h-2.0zM627.8 268.8h2.0v5.4h-2.0zM628.3 273.6h1.0v4.2h-1.0zM629.4 268.8h2.0v5.4h-2.0zM629.9 273.6h1.0v4.2h-1.0zM635.8 264.5h2.0v5.4h-2.0zM636.3 269.4h1.0v8.5h-1.0zM648.6 277.3h2.0v5.4h-2.0zM649.1 282.1h1.0v8.5h-1.0zM650.2 277.3h2.0v5.4h-2.0zM651.8 277.3h2.0v5.4h-2.0zM652.3 282.1h1.0v4.2h-1.0zM672.6 264.5h2.0v5.4h-2.0zM673.1 269.4h1.0v4.2h-1.0zM680.6 264.5h2.0v5.4h-2.0zM693.4 268.8h2.0v5.4h-2.0zM695.0 268.8h2.0v5.4h-2.0zM701.4 268.8h2.0v5.4h-2.0zM706.2 264.5h2.0v5.4h-2.0zM706.7 260.9h1.0v4.2h-1.0zM725.4 264.5h2.0v5.4h-2.0zM728.6 264.5h2.0v5.4h-2.0zM733.4 260.3h2.0v5.4h-2.0zM733.9 252.4h1.0v8.5h-1.0zM735.0 251.8h2.0v9.7h-2.0zM736.6 251.8h2.0v5.4h-2.0zM738.2 247.6h2.0v5.4h-2.0zM738.7 252.4h1.0v4.2h-1.0zM741.4 243.3h2.0v5.4h-2.0zM744.6 239.1h2.0v5.4h-2.0zM745.1 235.4h1.0v4.2h-1.0zM763.8 251.8h2.0v5.4h-2.0zM767.0 251.8h2.0v5.4h-2.0zM770.2 247.6h2.0v5.4h-2.0zM775.0 247.6h2.0v5.4h-2.0zM776.6 243.3h2.0v5.4h-2.0zM778.2 243.3h2.0v5.4h-2.0zM778.7 235.4h1.0v8.5h-1.0zM781.4 243.3h2.0v5.4h-2.0zM781.9 239.7h1.0v4.2h-1.0zM789.4 243.3h2.0v5.4h-2.0zM789.9 235.4h1.0v8.5h-1.0zM791.0 239.1h2.0v5.4h-2.0zM796.3 273.0h2.0v9.7h-2.0zM796.8 282.1h1.0v5.5h-1.0zM797.9 268.8h2.0v9.7h-2.0zM807.5 268.8h2.0v5.4h-2.0zM809.1 264.5h2.0v5.4h-2.0zM809.6 269.4h1.0v11.0h-1.0zM810.7 260.3h2.0v5.4h-2.0zM812.3 260.3h2.0v5.4h-2.0zM815.5 260.3h2.0v5.4h-2.0zM820.3 260.3h2.0v5.4h-2.0zM828.3 260.3h2.0v5.4h-2.0zM829.9 251.8h2.0v9.7h-2.0zM836.3 247.6h2.0v5.4h-2.0zM836.8 242.6h1.0v5.5h-1.0zM853.9 256.0h2.0v9.7h-2.0zM857.1 251.8h2.0v5.4h-2.0zM858.7 243.3h2.0v9.7h-2.0zM860.3 239.1h2.0v9.7h-2.0zM877.9 256.0h2.0v13.9h-2.0zM878.4 251.1h1.0v5.5h-1.0zM879.5 247.6h2.0v13.9h-2.0zM881.1 243.3h2.0v9.7h-2.0zM884.3 239.1h2.0v5.4h-2.0zM887.5 230.6h2.0v5.4h-2.0zM888.0 235.4h1.0v5.5h-1.0zM889.1 226.3h2.0v9.7h-2.0zM890.7 222.1h2.0v5.4h-2.0zM891.2 226.9h1.0v11.0h-1.0zM893.9 217.8h2.0v5.4h-2.0zM905.1 217.8h2.0v5.4h-2.0zM906.7 217.8h2.0v5.4h-2.0zM908.3 213.6h2.0v5.4h-2.0zM909.9 209.3h2.0v5.4h-2.0zM911.5 196.6h2.0v13.9h-2.0zM913.1 196.6h2.0v5.4h-2.0zM916.3 188.1h2.0v9.7h-2.0zM940.3 209.3h2.0v5.4h-2.0zM945.1 196.6h2.0v5.4h-2.0zM946.7 192.4h2.0v9.7h-2.0zM947.2 201.5h1.0v11.0h-1.0zM951.5 192.4h2.0v5.4h-2.0zM977.1 213.6h2.0v5.4h-2.0zM980.3 209.3h2.0v5.4h-2.0zM980.8 201.5h1.0v8.5h-1.0zM994.7 209.3h2.0v5.4h-2.0zM996.3 209.3h2.0v5.4h-2.0zM1018.7 222.1h2.0v5.4h-2.0zM1020.3 222.1h2.0v5.4h-2.0zM1028.3 230.6h2.0v5.4h-2.0zM1028.8 226.9h1.0v4.2h-1.0zM1029.9 230.6h2.0v5.4h-2.0zM1030.4 235.4h1.0v4.2h-1.0zM1041.1 239.1h2.0v5.4h-2.0zM1042.7 239.1h2.0v5.4h-2.0zM1045.9 234.8h2.0v5.4h-2.0zM1046.4 239.7h1.0v4.2h-1.0zM1047.5 234.8h2.0v5.4h-2.0zM1050.7 234.8h2.0v5.4h-2.0zM1051.2 239.7h1.0v4.2h-1.0zM1052.3 230.6h2.0v5.4h-2.0zM1053.9 222.1h2.0v9.7h-2.0zM1058.7 217.8h2.0v5.4h-2.0zM1069.9 217.8h2.0v5.4h-2.0zM1073.1 213.6h2.0v5.4h-2.0zM1074.7 209.3h2.0v5.4h-2.0zM1075.2 214.2h1.0v4.2h-1.0zM1076.3 205.1h2.0v5.4h-2.0zM1076.8 209.9h1.0v8.5h-1.0zM1097.1 200.9h2.0v5.4h-2.0zM1098.7 196.6h2.0v5.4h-2.0zM1100.3 192.4h2.0v9.7h-2.0zM1100.8 201.5h1.0v8.5h-1.0zM1108.3 188.1h2.0v5.4h-2.0zM1109.9 188.1h2.0v5.4h-2.0zM1114.7 188.1h2.0v5.4h-2.0zM1122.7 192.4h2.0v5.4h-2.0zM1132.3 192.4h2.0v5.4h-2.0zM1132.8 188.7h1.0v4.2h-1.0zM1133.9 188.1h2.0v5.4h-2.0zM1167.5 209.3h2.0v5.4h-2.0zM1173.9 205.1h2.0v5.4h-2.0zM1177.1 200.9h2.0v5.4h-2.0zM1188.3 209.3h2.0v5.4h-2.0zM1188.8 205.7h1.0v4.2h-1.0zM1189.9 200.9h2.0v9.7h-2.0zM1191.5 196.6h2.0v9.7h-2.0zM1193.1 192.4h2.0v5.4h-2.0zM1194.7 183.9h2.0v5.4h-2.0zM1196.3 175.4h2.0v9.7h-2.0zM1199.5 166.9h2.0v5.4h-2.0zM1201.1 166.9h2.0v5.4h-2.0zM1201.6 171.7h1.0v4.2h-1.0zM1237.9 209.3h2.0v5.4h-2.0zM1239.5 209.3h2.0v5.4h-2.0zM1241.1 209.3h2.0v5.4h-2.0zM1245.9 205.1h2.0v5.4h-2.0zM1247.5 205.1h2.0v5.4h-2.0zM1248.0 197.2h1.0v8.5h-1.0zM1249.1 200.9h2.0v5.4h-2.0zM1250.7 196.6h2.0v5.4h-2.0zM1257.1 196.6h2.0v5.4h-2.0zM1257.6 201.5h1.0v4.2h-1.0zM1258.7 196.6h2.0v5.4h-2.0zM1261.9 188.1h2.0v9.7h-2.0zM1263.5 192.4h2.0v5.4h-2.0zM1274.7 200.9h2.0v5.4h-2.0zM1276.3 196.6h2.0v9.7h-2.0zM1276.8 205.7h1.0v4.2h-1.0zM1279.5 196.6h2.0v5.4h-2.0zM1280.0 201.5h1.0v4.2h-1.0zM1292.3 200.9h2.0v5.4h-2.0zM1292.8 205.7h1.0v4.2h-1.0zM1293.9 196.6h2.0v5.4h-2.0zM1294.4 188.7h1.0v8.5h-1.0zM1295.5 192.4h2.0v5.4h-2.0zM1314.7 222.1h2.0v5.4h-2.0zM1315.2 226.9h1.0v4.2h-1.0zM1316.3 217.8h2.0v5.4h-2.0zM1324.3 213.6h2.0v5.4h-2.0zM1325.9 209.3h2.0v9.7h-2.0zM1326.4 218.4h1.0v13.6h-1.0zM1327.5 200.9h2.0v18.2h-2.0zM1329.1 205.1h2.0v5.4h-2.0zM1329.6 198.9h1.0v6.8h-1.0zM1332.3 200.9h2.0v5.4h-2.0zM1332.8 205.7h1.0v6.8h-1.0zM1338.7 213.6h2.0v5.4h-2.0zM1339.2 218.4h1.0v6.8h-1.0zM1348.3 213.6h2.0v5.4h-2.0zM1351.5 209.3h2.0v5.4h-2.0zM1354.7 200.9h2.0v9.7h-2.0zM1355.2 194.7h1.0v6.8h-1.0zM1361.1 192.4h2.0v5.4h-2.0zM1370.7 200.9h2.0v5.4h-2.0zM1371.2 187.9h1.0v13.6h-1.0zM1377.1 209.3h2.0v5.4h-2.0zM1377.6 214.2h1.0v6.8h-1.0zM1383.5 205.1h2.0v5.4h-2.0zM1384.0 192.1h1.0v13.6h-1.0zM1385.1 192.4h2.0v22.4h-2.0zM1385.6 179.4h1.0v13.6h-1.0zM1386.7 179.6h2.0v9.7h-2.0zM1388.3 166.9h2.0v18.2h-2.0zM1388.8 184.5h1.0v6.8h-1.0zM1389.9 149.9h2.0v13.9h-2.0zM1391.5 141.4h2.0v9.7h-2.0zM1393.1 141.4h2.0v5.4h-2.0zM1394.7 141.4h2.0v5.4h-2.0zM1404.3 158.4h2.0v9.7h-2.0zM1409.1 158.4h2.0v5.4h-2.0zM1409.6 163.2h1.0v6.8h-1.0zM1415.5 154.2h2.0v5.4h-2.0zM1416.0 159.0h1.0v6.8h-1.0zM1418.7 149.9h2.0v9.7h-2.0zM1419.2 159.0h1.0v13.6h-1.0zM1420.3 149.9h2.0v5.4h-2.0zM1423.5 145.7h2.0v5.4h-2.0zM1424.0 139.5h1.0v6.8h-1.0zM1428.3 141.4h2.0v5.4h-2.0zM1431.5 141.4h2.0v13.9h-2.0zM1437.9 137.2h2.0v5.4h-2.0zM1438.4 142.0h1.0v13.6h-1.0zM1445.9 132.9h2.0v5.4h-2.0zM1450.7 120.2h2.0v13.9h-2.0zM1451.2 107.2h1.0v13.6h-1.0zM1452.3 120.2h2.0v5.4h-2.0zM1452.8 107.2h1.0v13.6h-1.0zM1455.5 116.0h2.0v5.4h-2.0zM1457.1 111.7h2.0v5.4h-2.0zM1458.7 107.5h2.0v5.4h-2.0zM1460.3 99.0h2.0v9.7h-2.0zM1477.9 149.9h2.0v5.4h-2.0zM1479.5 141.4h2.0v9.7h-2.0zM1481.1 145.7h2.0v9.7h-2.0zM1481.6 154.8h1.0v6.8h-1.0zM1482.7 141.4h2.0v5.4h-2.0zM1483.2 135.2h1.0v6.8h-1.0zM1487.5 132.9h2.0v9.7h-2.0zM1511.5 154.2h2.0v5.4h-2.0zM1513.1 149.9h2.0v9.7h-2.0zM1514.7 145.7h2.0v5.4h-2.0zM1516.3 141.4h2.0v9.7h-2.0zM1516.8 150.5h1.0v13.6h-1.0zM1517.9 145.7h2.0v5.4h-2.0zM1525.9 154.2h2.0v5.4h-2.0zM1526.4 148.0h1.0v6.8h-1.0zM1527.5 149.9h2.0v9.7h-2.0zM1529.1 145.7h2.0v5.4h-2.0zM1541.9 149.9h2.0v5.4h-2.0zM1557.9 166.9h2.0v13.9h-2.0zM1567.5 171.1h2.0v9.7h-2.0zM1568.0 180.2h1.0v6.8h-1.0zM1569.1 171.1h2.0v5.4h-2.0zM1570.7 162.7h2.0v9.7h-2.0zM1573.9 162.7h2.0v5.4h-2.0zM1591.5 175.4h2.0v5.4h-2.0zM1592.0 180.2h1.0v6.8h-1.0zM1594.7 166.9h2.0v9.7h-2.0zM1595.2 176.0h1.0v13.6h-1.0zM1596.3 162.7h2.0v5.4h-2.0zM1609.1 183.9h2.0v5.4h-2.0zM1609.6 170.9h1.0v13.6h-1.0zM1623.5 179.6h2.0v5.4h-2.0zM1625.1 175.4h2.0v5.4h-2.0zM1626.7 171.1h2.0v5.4h-2.0zM1633.1 166.9h2.0v5.4h-2.0zM1633.6 163.2h1.0v4.2h-1.0zM1639.5 162.7h2.0v5.4h-2.0zM1652.3 158.4h2.0v5.4h-2.0zM1652.8 163.2h1.0v4.2h-1.0zM1655.5 149.9h2.0v5.4h-2.0zM1656.0 146.3h1.0v4.2h-1.0zM1660.3 149.9h2.0v5.4h-2.0zM1660.8 146.3h1.0v4.2h-1.0zM1673.1 166.9h2.0v5.4h-2.0zM1676.3 162.7h2.0v5.4h-2.0zM1703.5 192.4h2.0v5.4h-2.0zM1746.7 188.1h2.0v5.4h-2.0zM1747.2 184.5h1.0v4.2h-1.0zM1748.3 188.1h2.0v5.4h-2.0zM1780.3 213.6h2.0v5.4h-2.0zM1786.7 213.6h2.0v5.4h-2.0zM1787.2 218.4h1.0v8.5h-1.0zM1788.3 209.3h2.0v5.4h-2.0zM1788.8 205.7h1.0v4.2h-1.0zM1804.3 209.3h2.0v5.4h-2.0zM1817.1 196.6h2.0v5.4h-2.0zM1834.7 196.6h2.0v9.7h-2.0zM1836.3 192.4h2.0v5.4h-2.0zM1836.8 184.5h1.0v8.5h-1.0zM1837.9 188.1h2.0v5.4h-2.0zM1838.4 184.5h1.0v4.2h-1.0zM1857.1 188.1h2.0v5.4h-2.0zM1857.6 180.2h1.0v8.5h-1.0zM1887.5 200.9h2.0v5.4h-2.0zM1895.5 200.9h2.0v5.4h-2.0zM1896.0 197.2h1.0v4.2h-1.0zM1898.7 200.9h2.0v5.4h-2.0zM1903.5 196.6h2.0v5.4h-2.0zM1909.9 200.9h2.0v5.4h-2.0zM1917.9 179.6h2.0v5.4h-2.0zM1918.4 171.7h1.0v8.5h-1.0zM1921.1 175.4h2.0v9.7h-2.0z"/></g>
<g filter="url(#bl)"><path fill="#f4e34c" d="M190.0 637.4h2.2v1.5h-2.2zM204.4 677.3h2.8v1.5h-2.8zM212.4 667.3h2.2v1.5h-2.2zM213.1 663.1h1.0v5.0h-1.0zM220.4 652.4h2.2v1.5h-2.2zM221.1 648.1h1.0v5.0h-1.0zM223.6 647.4h3.4v1.5h-3.4zM236.4 617.4h2.8v1.5h-2.8zM238.0 617.4h2.2v1.5h-2.2zM238.7 613.2h1.0v5.0h-1.0zM239.6 617.4h2.2v1.5h-2.2zM241.2 617.4h2.2v1.5h-2.2zM247.6 632.4h2.2v1.5h-2.2zM249.2 637.4h3.4v1.5h-3.4zM254.0 642.4h2.8v1.5h-2.8zM257.2 632.4h3.4v1.5h-3.4zM258.8 632.4h2.8v1.5h-2.8zM260.4 627.4h3.4v1.5h-3.4zM265.2 622.4h3.4v1.5h-3.4zM266.8 622.4h2.8v1.5h-2.8zM271.6 612.4h3.4v1.5h-3.4zM272.3 608.2h1.0v5.0h-1.0zM282.8 627.4h2.2v1.5h-2.2zM283.5 628.2h1.0v5.0h-1.0zM287.6 632.4h2.2v1.5h-2.2zM289.2 632.4h3.4v1.5h-3.4zM290.8 632.4h2.8v1.5h-2.8zM292.4 632.4h3.4v1.5h-3.4zM298.8 622.4h2.2v1.5h-2.2zM302.0 627.4h3.4v1.5h-3.4zM311.6 607.5h2.8v1.5h-2.8zM314.8 602.5h2.8v1.5h-2.8zM321.2 617.4h2.2v1.5h-2.2zM322.8 617.4h2.8v1.5h-2.8zM324.4 617.4h2.8v1.5h-2.8zM338.6 627.4h2.2v1.5h-2.2zM340.2 627.4h2.2v1.5h-2.2zM345.0 622.4h3.4v1.5h-3.4zM346.6 622.4h2.8v1.5h-2.8zM348.2 622.4h3.4v1.5h-3.4zM349.8 622.4h3.4v1.5h-3.4zM353.0 622.4h2.2v1.5h-2.2zM354.6 617.4h3.4v1.5h-3.4zM357.8 612.4h3.4v1.5h-3.4zM359.4 612.4h2.2v1.5h-2.2zM367.4 612.4h3.4v1.5h-3.4zM373.8 602.5h2.8v1.5h-2.8zM374.5 598.2h1.0v5.0h-1.0zM375.4 597.5h3.4v1.5h-3.4zM377.0 597.5h3.4v1.5h-3.4zM378.6 597.5h2.8v1.5h-2.8zM379.3 593.2h1.0v5.0h-1.0zM393.0 582.5h2.8v1.5h-2.8zM393.7 578.3h1.0v5.0h-1.0zM399.4 567.5h3.4v1.5h-3.4zM405.8 567.5h2.8v1.5h-2.8zM407.4 567.5h3.4v1.5h-3.4zM413.8 562.5h3.4v1.5h-3.4zM415.4 562.5h2.8v1.5h-2.8zM416.1 558.3h1.0v5.0h-1.0zM418.6 562.5h2.8v1.5h-2.8zM429.8 527.6h3.4v1.5h-3.4zM430.5 523.4h1.0v5.0h-1.0zM436.2 527.6h3.4v1.5h-3.4zM441.0 532.6h2.8v1.5h-2.8zM444.2 537.6h2.2v1.5h-2.2zM449.0 547.6h2.8v1.5h-2.8zM450.6 552.6h3.4v1.5h-3.4zM461.8 557.5h2.2v1.5h-2.2zM463.4 557.5h2.8v1.5h-2.8zM466.6 562.5h3.4v1.5h-3.4zM467.3 558.3h1.0v5.0h-1.0zM481.0 562.5h2.2v1.5h-2.2zM482.6 562.5h3.4v1.5h-3.4zM483.3 563.3h1.0v5.0h-1.0zM484.2 567.5h2.8v1.5h-2.8zM495.4 547.6h2.8v1.5h-2.8zM498.6 547.6h3.4v1.5h-3.4zM501.8 552.6h2.8v1.5h-2.8zM516.2 582.5h3.4v1.5h-3.4zM524.2 582.5h3.4v1.5h-3.4zM527.4 582.5h2.2v1.5h-2.2zM529.0 582.5h2.8v1.5h-2.8zM530.6 582.5h3.4v1.5h-3.4zM531.3 578.3h1.0v5.0h-1.0zM533.8 577.5h2.8v1.5h-2.8zM534.5 578.3h1.0v5.0h-1.0zM538.6 567.5h2.8v1.5h-2.8zM540.2 572.5h3.4v1.5h-3.4zM545.0 577.5h2.2v1.5h-2.2zM546.6 582.5h2.2v1.5h-2.2zM548.2 577.5h3.4v1.5h-3.4zM554.6 577.5h3.4v1.5h-3.4zM564.2 572.5h2.2v1.5h-2.2zM564.9 573.3h1.0v5.0h-1.0zM572.2 562.5h3.4v1.5h-3.4zM573.8 567.5h2.2v1.5h-2.2zM577.0 572.5h2.2v1.5h-2.2zM581.8 582.5h2.8v1.5h-2.8zM582.5 578.3h1.0v5.0h-1.0zM589.8 592.5h2.8v1.5h-2.8zM597.8 597.5h2.8v1.5h-2.8zM599.4 597.5h2.8v1.5h-2.8zM600.1 593.2h1.0v5.0h-1.0zM602.6 592.5h2.8v1.5h-2.8zM607.4 597.5h2.8v1.5h-2.8zM609.0 597.5h2.8v1.5h-2.8zM618.6 607.5h2.2v1.5h-2.2zM620.2 607.5h2.2v1.5h-2.2zM620.9 603.2h1.0v5.0h-1.0zM621.8 602.5h2.8v1.5h-2.8zM623.4 607.5h2.8v1.5h-2.8zM624.1 603.2h1.0v5.0h-1.0zM628.2 602.5h3.4v1.5h-3.4zM633.0 597.5h2.8v1.5h-2.8zM633.7 598.2h1.0v5.0h-1.0zM636.2 592.5h2.2v1.5h-2.2zM637.8 592.5h3.4v1.5h-3.4zM639.4 592.5h3.4v1.5h-3.4zM647.4 622.4h3.4v1.5h-3.4zM655.4 612.4h2.2v1.5h-2.2zM656.1 608.2h1.0v5.0h-1.0zM663.4 602.5h2.8v1.5h-2.8zM669.8 587.5h3.4v1.5h-3.4zM676.2 582.5h2.2v1.5h-2.2zM677.8 587.5h2.2v1.5h-2.2zM679.4 587.5h3.4v1.5h-3.4zM682.6 587.5h2.8v1.5h-2.8zM684.2 587.5h3.4v1.5h-3.4zM685.8 587.5h2.8v1.5h-2.8zM693.8 587.5h3.4v1.5h-3.4zM697.0 592.5h2.2v1.5h-2.2zM705.0 592.5h2.2v1.5h-2.2zM706.6 587.5h2.8v1.5h-2.8zM708.2 587.5h3.4v1.5h-3.4zM714.6 587.5h2.2v1.5h-2.2zM721.0 587.5h2.2v1.5h-2.2zM722.6 587.5h2.8v1.5h-2.8zM725.8 587.5h2.2v1.5h-2.2zM726.5 588.2h1.0v5.0h-1.0zM730.6 587.5h3.4v1.5h-3.4zM731.3 583.2h1.0v5.0h-1.0zM732.2 587.5h2.2v1.5h-2.2zM738.6 567.5h3.4v1.5h-3.4zM741.8 562.5h3.4v1.5h-3.4zM748.2 577.5h2.2v1.5h-2.2zM762.6 572.5h2.2v1.5h-2.2zM764.2 572.5h3.4v1.5h-3.4zM767.4 572.5h2.8v1.5h-2.8zM772.2 577.5h3.4v1.5h-3.4zM780.2 567.5h2.2v1.5h-2.2zM781.8 567.5h2.2v1.5h-2.2zM782.5 568.3h1.0v5.0h-1.0zM789.8 577.5h2.2v1.5h-2.2zM791.4 572.5h3.4v1.5h-3.4zM799.4 567.5h2.8v1.5h-2.8zM809.0 587.5h3.4v1.5h-3.4zM810.6 587.5h2.2v1.5h-2.2zM825.0 572.5h2.8v1.5h-2.8zM826.6 572.5h2.2v1.5h-2.2zM827.3 568.3h1.0v5.0h-1.0zM829.8 577.5h3.4v1.5h-3.4zM834.6 572.5h2.2v1.5h-2.2zM839.4 572.5h2.8v1.5h-2.8zM842.6 567.5h2.2v1.5h-2.2zM845.8 562.5h2.8v1.5h-2.8zM846.5 563.3h1.0v5.0h-1.0zM850.6 577.5h3.4v1.5h-3.4zM861.8 552.6h2.8v1.5h-2.8zM885.8 562.5h2.8v1.5h-2.8zM898.6 567.5h2.2v1.5h-2.2zM899.3 568.3h1.0v5.0h-1.0zM901.8 567.5h2.8v1.5h-2.8zM903.4 567.5h3.4v1.5h-3.4zM905.0 572.5h3.4v1.5h-3.4zM909.8 562.5h2.2v1.5h-2.2zM921.0 537.6h3.4v1.5h-3.4zM922.6 537.6h3.4v1.5h-3.4zM933.8 512.6h2.8v1.5h-2.8zM934.5 513.4h1.0v5.0h-1.0zM943.4 482.7h2.2v1.5h-2.2zM944.1 483.4h1.0v5.0h-1.0zM948.2 487.7h2.2v1.5h-2.2zM954.6 497.7h2.2v1.5h-2.2zM955.3 498.4h1.0v5.0h-1.0zM978.6 537.6h3.4v1.5h-3.4zM1182.6 587.5h2.2v1.5h-2.2zM1206.6 532.6h2.2v1.5h-2.2zM1251.4 592.5h3.4v1.5h-3.4zM1291.4 562.5h2.8v1.5h-2.8zM1301.0 552.6h2.8v1.5h-2.8zM18.6 663.6h2.0v1.8h-2.0zM26.3 663.6h2.0v1.8h-2.0zM17.1 679.0h1.7v1.8h-1.7zM30.7 683.6h3.4v1.8h-3.4zM34.0 688.2h2.0v1.8h-2.0zM49.7 683.6h3.1v1.8h-3.1zM57.9 679.0h3.1v1.8h-3.1zM62.5 688.2h3.1v1.8h-3.1zM65.5 718.1h3.1v1.8h-3.1zM70.1 733.9h3.1v1.8h-3.1zM71.9 743.3h3.1v1.8h-3.1zM75.3 758.7h2.4v1.8h-2.4zM81.4 763.5h2.7v1.8h-2.7zM77.8 768.1h4.8v1.8h-4.8zM86.2 772.8h1.7v1.8h-1.7zM89.3 773.2h1.4v6.0h-1.4zM99.8 772.8h1.7v1.8h-1.7zM101.6 777.5h1.7v1.8h-1.7zM110.8 738.5h3.1v1.8h-3.1zM123.4 713.5h3.1v1.8h-3.1zM148.7 668.2h3.1v1.8h-3.1zM150.0 663.6h3.1v1.8h-3.1zM156.2 658.5h1.7v1.8h-1.7zM160.8 668.2h1.7v1.8h-1.7zM163.9 672.8h1.7v1.8h-1.7zM170.3 668.2h1.7v1.8h-1.7zM171.9 663.6h1.7v1.8h-1.7zM174.9 658.5h1.7v1.8h-1.7zM176.7 654.1h2.7v1.8h-2.7zM179.6 648.1h1.7v1.8h-1.7zM182.5 634.1h2.0v1.8h-2.0zM184.3 629.5h1.7v1.8h-1.7zM186.2 654.1h2.4v1.8h-2.4zM187.9 697.8h2.0v1.8h-2.0zM1319.4 512.4h1.2v17.1h-1.2zM1321.9 483.4h1.4v10.2h-1.4zM1328.0 468.0h1.7v1.8h-1.7zM1335.7 488.5h1.7v1.8h-1.7zM1338.8 497.9h1.7v1.8h-1.7zM1346.5 508.1h1.7v1.8h-1.7zM1345.1 518.3h1.7v1.8h-1.7zM1349.9 483.7h1.7v1.8h-1.7zM1364.2 493.1h3.1v1.8h-3.1zM1376.3 517.8h1.7v1.8h-1.7zM1376.5 533.7h3.1v1.8h-3.1zM1387.4 497.9h1.7v1.8h-1.7zM1395.6 458.6h2.4v1.8h-2.4zM1407.2 463.8h2.0v6.0h-2.0zM1412.8 434.7h2.0v5.1h-2.0zM1420.7 448.0h1.7v1.8h-1.7zM1423.3 429.1h1.7v1.8h-1.7zM1429.7 448.4h1.7v10.2h-1.7zM1438.6 497.9h1.7v1.8h-1.7zM1439.6 503.8h2.4v1.8h-2.4zM1453.1 479.1h1.7v5.1h-1.7zM1459.4 463.4h2.7v1.8h-2.7zM1462.5 483.7h1.7v1.8h-1.7zM1465.6 453.8h1.7v1.8h-1.7zM1471.9 463.4h1.7v1.8h-1.7zM1473.6 468.0h1.7v1.8h-1.7zM1483.0 478.7h1.7v1.8h-1.7zM1487.8 468.0h1.7v1.8h-1.7zM1497.0 493.1h2.7v1.8h-2.7zM1498.7 503.8h2.7v1.8h-2.7zM1508.1 472.6h2.7v1.8h-2.7zM1509.5 488.5h2.7v1.8h-2.7zM1513.2 458.6h2.7v1.8h-2.7zM1515.8 472.6h2.7v1.8h-2.7zM1532.6 448.4h1.5v11.1h-1.5zM1539.0 463.4h1.7v1.8h-1.7zM1537.6 478.7h1.7v1.8h-1.7zM1547.0 488.5h1.7v1.8h-1.7zM1553.0 497.9h1.7v1.8h-1.7zM1554.5 508.1h2.0v1.8h-2.0zM1559.6 483.7h2.7v1.8h-2.7zM1549.9 517.8h1.7v1.8h-1.7zM1567.3 529.1h5.5v1.8h-5.5zM1573.5 522.6h2.7v1.8h-2.7zM1584.4 558.4h3.8v1.8h-3.8zM1588.0 533.7h2.7v1.8h-2.7zM1595.6 503.0h1.7v1.8h-1.7zM1603.0 538.5h1.7v1.8h-1.7zM1607.6 547.7h1.7v1.8h-1.7zM1605.9 563.6h1.7v4.3h-1.7zM1637.8 543.1h2.0v1.8h-2.0zM1639.2 538.5h2.7v1.8h-2.7zM1626.7 558.4h2.7v1.8h-2.7zM1649.2 493.1h3.8v1.8h-3.8zM1653.2 478.7h2.7v1.8h-2.7zM1620.0 598.0h1.9v7.6h-1.9zM1653.1 479.1h3.0v1.8h-3.0zM1648.0 493.3h5.5v1.8h-5.5zM1676.3 473.0h3.6v1.8h-3.6zM1679.5 479.1h4.7v1.8h-4.7zM1693.2 479.1h3.6v1.8h-3.6zM1691.8 483.6h2.2v1.8h-2.2zM1695.4 483.6h3.3v1.8h-3.3zM1674.7 488.5h1.9v1.8h-1.9zM1671.6 497.9h1.9v1.8h-1.9zM1710.5 513.4h3.6v1.8h-3.6zM1704.3 529.0h3.6v1.8h-3.6zM1715.4 538.3h3.6v1.8h-3.6zM1602.7 538.3h1.9v1.8h-1.9zM1607.5 548.0h1.9v1.8h-1.9zM1638.8 538.3h3.6v1.8h-3.6zM1637.2 543.1h3.6v1.8h-3.6zM1630.8 553.8h1.9v1.8h-1.9zM1626.4 558.7h3.6v1.8h-3.6zM1605.3 563.4h2.2v4.8h-2.2zM1587.3 533.7h3.6v1.8h-3.6zM1584.0 548.0h1.9v1.8h-1.9zM1583.9 558.7h5.0v1.8h-5.0zM1650.2 493.1h3.1v1.8h-3.1zM1653.6 479.1h2.4v1.8h-2.4zM1660.8 468.0h1.7v1.8h-1.7zM1665.7 483.7h2.0v1.8h-2.0zM1671.5 497.9h2.0v1.8h-2.0zM1674.6 488.5h2.0v1.8h-2.0zM1676.5 472.8h3.4v1.8h-3.4zM1679.4 479.1h5.1v1.8h-5.1zM1693.5 479.1h3.4v1.8h-3.4zM1691.8 483.7h6.8v1.8h-6.8zM1689.1 458.6h2.0v1.8h-2.0zM1710.8 513.2h3.8v1.8h-3.8zM1704.1 529.1h3.8v1.8h-3.8zM1715.2 538.5h3.8v1.8h-3.8zM1746.6 479.1h4.8v1.8h-4.8zM1754.6 472.6h2.4v1.8h-2.4zM1760.9 463.4h11.3v1.8h-11.3zM1767.3 453.8h3.4v1.8h-3.4zM1774.4 463.4h3.8v1.8h-3.8zM1776.3 468.0h3.4v1.8h-3.4zM1782.8 479.1h3.4v1.8h-3.4zM1792.2 448.0h3.4v1.8h-3.4zM1793.7 453.8h3.4v1.8h-3.4zM1795.6 458.6h3.1v1.8h-3.1zM1803.1 458.6h2.0v1.8h-2.0zM1813.5 458.6h2.4v1.8h-2.4zM1817.1 458.6h2.0v1.8h-2.0zM1831.3 458.6h2.7v1.8h-2.7zM1836.0 458.6h5.1v1.8h-5.1zM1842.4 433.8h6.1v1.8h-6.1zM1850.0 429.2h3.4v1.8h-3.4zM1856.2 443.2h3.4v1.8h-3.4zM1874.6 429.2h2.4v1.8h-2.4zM1890.1 468.0h2.0v1.8h-2.0zM1896.5 463.4h2.0v1.8h-2.0zM1898.3 458.6h2.4v1.8h-2.4zM1900.0 453.8h3.4v1.8h-3.4zM1905.0 453.8h3.1v1.8h-3.1zM1911.1 458.6h3.4v1.8h-3.4zM1916.6 458.6h4.4v1.8h-4.4zM1921.9 458.6h4.1v1.8h-4.1zM988.6 572.4h4.5v1.8h-4.5zM993.0 562.4h2.6v1.8h-2.6zM995.4 557.4h4.5v1.8h-4.5zM1004.9 547.4h2.6v1.8h-2.6zM1011.2 552.4h2.0v1.8h-2.0zM1027.1 562.4h2.6v1.8h-2.6zM1054.7 567.4h2.0v1.8h-2.0zM1059.0 557.4h2.0v1.8h-2.0zM1065.3 557.4h2.0v1.8h-2.0zM1069.5 547.4h3.2v1.8h-3.2zM1076.4 562.4h2.0v1.8h-2.0zM1082.0 572.4h2.0v1.8h-2.0zM1085.0 577.4h4.5v1.8h-4.5zM1089.4 582.4h2.6v1.8h-2.6zM1114.7 572.4h3.2v1.8h-3.2zM1118.3 577.4h4.5v1.8h-4.5zM1124.7 577.4h2.0v1.8h-2.0zM1128.6 572.4h4.5v1.8h-4.5zM1138.0 557.4h2.6v1.8h-2.6zM1150.0 542.4h2.6v1.8h-2.6zM1154.0 527.5h3.2v1.8h-3.2zM1158.8 552.4h2.0v1.8h-2.0zM1159.9 557.4h2.6v1.8h-2.6zM1164.2 567.4h3.2v1.8h-3.2zM1161.6 572.4h3.2v1.8h-3.2zM1178.2 587.3h2.6v1.8h-2.6zM1185.7 607.3h4.5v1.8h-4.5zM1190.1 572.4h2.6v1.8h-2.6zM1193.0 567.4h2.6v1.8h-2.6zM1199.5 547.4h2.6v1.8h-2.6zM1209.2 527.5h2.0v1.8h-2.0zM1211.5 532.5h3.2v1.8h-3.2zM1213.4 542.4h4.5v1.8h-4.5zM1214.8 562.4h4.5v1.8h-4.5zM1219.1 572.4h2.6v1.8h-2.6zM1224.5 582.4h2.0v1.8h-2.0zM1230.2 597.3h2.6v1.8h-2.6zM1234.5 622.3h2.6v1.8h-2.6zM1238.7 607.3h2.6v1.8h-2.6zM1244.7 612.3h2.6v1.8h-2.6zM1250.7 592.3h2.6v1.8h-2.6zM1269.2 577.4h3.2v1.8h-3.2zM1274.9 572.4h2.0v1.8h-2.0zM1277.2 567.4h3.2v1.8h-3.2zM1291.6 562.4h4.5v1.8h-4.5zM1315.8 527.5h2.0v1.8h-2.0zM1318.9 502.5h4.5v1.8h-4.5zM1321.8 487.5h2.0v1.8h-2.0zM1323.5 472.6h2.0v1.8h-2.0zM1326.1 477.6h2.0v1.8h-2.0z"/>
<path fill="#0a84ff" d="M191.7 642.5h2.0v6.2h-2.0zM193.3 647.5h2.0v6.2h-2.0zM194.9 652.5h2.0v11.2h-2.0zM195.4 663.1h1.0v5.0h-1.0zM196.5 662.5h2.0v6.2h-2.0zM198.1 667.5h2.0v11.2h-2.0zM199.7 672.5h2.0v6.2h-2.0zM206.1 677.5h2.0v6.2h-2.0zM207.7 682.4h2.0v6.2h-2.0zM242.9 617.6h2.0v6.2h-2.0zM244.5 622.6h2.0v6.2h-2.0zM246.1 627.6h2.0v6.2h-2.0zM246.6 633.1h1.0v10.0h-1.0zM252.5 637.5h2.0v6.2h-2.0zM253.0 643.1h1.0v5.0h-1.0zM278.1 607.6h2.0v6.2h-2.0zM279.7 612.6h2.0v11.2h-2.0zM281.3 622.6h2.0v6.2h-2.0zM281.8 628.2h1.0v5.0h-1.0zM284.5 627.6h2.0v6.2h-2.0zM286.1 627.6h2.0v6.2h-2.0zM294.1 627.6h2.0v6.2h-2.0zM300.5 622.6h2.0v6.2h-2.0zM305.3 627.6h2.0v6.2h-2.0zM316.5 602.6h2.0v6.2h-2.0zM319.7 612.6h2.0v6.2h-2.0zM320.2 618.2h1.0v5.0h-1.0zM326.1 612.6h2.0v6.2h-2.0zM332.3 617.6h2.0v6.2h-2.0zM335.5 617.6h2.0v6.2h-2.0zM361.1 612.6h2.0v6.2h-2.0zM437.9 522.8h2.0v11.2h-2.0zM439.5 527.8h2.0v6.2h-2.0zM440.0 523.4h1.0v5.0h-1.0zM445.9 537.7h2.0v6.2h-2.0zM446.4 533.4h1.0v5.0h-1.0zM447.5 542.7h2.0v6.2h-2.0zM460.3 552.7h2.0v6.2h-2.0zM465.1 557.7h2.0v6.2h-2.0zM473.1 547.7h2.0v6.2h-2.0zM473.6 553.3h1.0v5.0h-1.0zM476.3 552.7h2.0v6.2h-2.0zM479.5 547.7h2.0v21.2h-2.0zM493.9 547.7h2.0v6.2h-2.0zM494.4 543.3h1.0v5.0h-1.0zM505.1 557.7h2.0v6.2h-2.0zM508.3 557.7h2.0v6.2h-2.0zM509.9 562.7h2.0v11.2h-2.0zM511.5 552.7h2.0v21.2h-2.0zM514.7 577.7h2.0v11.2h-2.0zM541.9 572.7h2.0v6.2h-2.0zM543.5 577.7h2.0v6.2h-2.0zM559.5 567.7h2.0v6.2h-2.0zM560.0 573.3h1.0v10.0h-1.0zM561.1 557.7h2.0v16.2h-2.0zM585.1 582.6h2.0v6.2h-2.0zM585.6 573.3h1.0v10.0h-1.0zM586.7 587.6h2.0v6.2h-2.0zM588.3 587.6h2.0v6.2h-2.0zM593.1 592.6h2.0v6.2h-2.0zM593.6 598.2h1.0v5.0h-1.0zM604.3 592.6h2.0v6.2h-2.0zM610.7 582.6h2.0v11.2h-2.0zM613.9 597.6h2.0v6.2h-2.0zM615.5 597.6h2.0v6.2h-2.0zM616.0 593.2h1.0v5.0h-1.0zM617.1 602.6h2.0v6.2h-2.0zM641.1 592.6h2.0v6.2h-2.0zM642.7 602.6h2.0v6.2h-2.0zM644.3 607.6h2.0v6.2h-2.0zM645.9 612.6h2.0v16.2h-2.0zM646.4 628.2h1.0v10.0h-1.0zM673.1 582.6h2.0v6.2h-2.0zM698.7 592.6h2.0v6.2h-2.0zM699.2 588.2h1.0v5.0h-1.0zM701.9 582.6h2.0v11.2h-2.0zM716.3 582.6h2.0v6.2h-2.0zM716.8 578.3h1.0v5.0h-1.0zM727.5 587.6h2.0v6.2h-2.0zM728.0 593.2h1.0v10.0h-1.0zM745.1 567.7h2.0v6.2h-2.0zM745.6 563.3h1.0v5.0h-1.0zM749.9 577.7h2.0v6.2h-2.0zM750.4 568.3h1.0v10.0h-1.0zM751.5 582.6h2.0v6.2h-2.0zM783.5 562.7h2.0v6.2h-2.0zM785.1 567.7h2.0v6.2h-2.0zM785.6 563.3h1.0v5.0h-1.0zM786.7 567.7h2.0v11.2h-2.0zM794.7 577.7h2.0v16.2h-2.0zM801.1 547.7h2.0v21.2h-2.0zM802.7 562.7h2.0v6.2h-2.0zM804.3 567.7h2.0v6.2h-2.0zM823.5 557.7h2.0v16.2h-2.0zM837.9 572.7h2.0v6.2h-2.0zM847.5 557.7h2.0v6.2h-2.0zM849.1 557.7h2.0v11.2h-2.0zM852.3 577.7h2.0v6.2h-2.0zM852.8 583.2h1.0v5.0h-1.0zM863.5 552.7h2.0v6.2h-2.0zM864.0 548.3h1.0v5.0h-1.0zM865.1 557.7h2.0v6.2h-2.0zM866.7 562.7h2.0v6.2h-2.0zM867.2 553.3h1.0v10.0h-1.0zM868.3 567.7h2.0v6.2h-2.0zM869.9 572.7h2.0v11.2h-2.0zM870.4 583.2h1.0v10.0h-1.0zM871.5 587.6h2.0v6.2h-2.0zM873.1 592.6h2.0v6.2h-2.0zM873.6 598.2h1.0v10.0h-1.0zM884.3 557.7h2.0v6.2h-2.0zM887.5 557.7h2.0v6.2h-2.0zM889.1 562.7h2.0v6.2h-2.0zM890.7 567.7h2.0v6.2h-2.0zM893.9 562.7h2.0v6.2h-2.0zM897.1 557.7h2.0v6.2h-2.0zM930.7 502.8h2.0v6.2h-2.0zM932.3 502.8h2.0v11.2h-2.0zM946.7 472.9h2.0v6.2h-2.0zM947.2 468.5h1.0v5.0h-1.0zM949.9 487.8h2.0v11.2h-2.0zM956.3 492.8h2.0v6.2h-2.0zM962.7 507.8h2.0v6.2h-2.0zM964.3 512.8h2.0v6.2h-2.0zM965.9 512.8h2.0v6.2h-2.0zM970.7 517.8h2.0v11.2h-2.0zM971.2 528.4h1.0v5.0h-1.0zM972.3 527.8h2.0v6.2h-2.0zM977.1 532.8h2.0v6.2h-2.0zM977.6 538.3h1.0v5.0h-1.0zM980.3 537.7h2.0v6.2h-2.0zM981.9 537.7h2.0v11.2h-2.0zM988.3 562.7h2.0v6.2h-2.0zM989.9 567.7h2.0v6.2h-2.0zM1118.7 572.7h2.0v11.2h-2.0zM1119.2 583.2h1.0v5.0h-1.0zM1179.5 582.6h2.0v6.2h-2.0zM1180.0 578.3h1.0v5.0h-1.0zM1205.1 527.8h2.0v6.2h-2.0zM1225.9 582.6h2.0v6.2h-2.0zM14.2 668.3h1.7v15.4h-1.7zM37.4 688.8h1.4v4.3h-1.4zM53.6 673.4h2.0v10.2h-2.0zM64.5 709.2h2.4v4.3h-2.4zM73.9 752.8h2.4v6.0h-2.4zM115.7 734.3h1.4v9.0h-1.4zM1323.7 463.8h1.2v16.2h-1.2zM1333.0 493.6h1.4v11.1h-1.4zM1344.1 508.1h1.2v14.5h-1.2zM1356.7 473.2h2.4v6.0h-2.4zM1368.0 504.7h2.4v13.7h-2.4zM1403.0 458.6h1.2v20.5h-1.2zM1417.5 422.8h1.2v14.5h-1.2zM1418.8 430.5h1.4v17.1h-1.4zM1422.2 448.4h2.0v5.1h-2.0zM1432.5 473.2h2.7v19.6h-2.7zM1435.5 497.9h2.7v6.8h-2.7zM1436.3 504.7h1.2v13.7h-1.2zM1442.7 509.0h2.0v5.1h-2.0zM1445.8 514.1h2.7v19.6h-2.7zM1467.4 433.9h1.2v24.7h-1.2zM1470.4 454.7h1.4v3.9h-1.4zM1475.2 484.2h1.2v24.7h-1.2zM1476.8 509.0h1.2v13.7h-1.2zM1484.3 488.5h1.5v4.3h-1.5zM1490.7 458.6h2.7v35.0h-2.7zM1506.7 479.1h2.0v9.4h-2.0zM1517.7 479.1h2.2v18.8h-2.2zM1521.2 454.7h2.0v3.9h-2.0zM1549.0 497.9h1.2v11.1h-1.2zM1563.0 504.7h2.0v8.5h-2.0zM1564.8 543.1h1.9v15.4h-1.9zM1579.0 518.4h1.9v29.9h-1.9zM1580.5 554.2h2.2v13.7h-2.2zM1597.3 497.9h1.2v6.0h-1.2zM1609.6 558.5h1.2v9.4h-1.2zM1655.7 463.8h1.7v20.5h-1.7zM1610.7 573.1h1.7v24.9h-1.7zM1614.3 579.3h1.7v4.2h-1.7zM1621.8 593.2h1.7v4.8h-1.7zM1655.2 470.0h2.2v13.1h-2.2zM1664.7 470.0h1.2v13.8h-1.2zM1667.2 483.8h1.7v9.0h-1.7zM1698.2 504.6h3.3v13.8h-3.3zM1700.0 518.4h3.0v4.2h-3.0zM1609.3 558.6h1.7v9.7h-1.7zM1655.8 468.0h2.0v11.9h-2.0zM1656.6 463.8h1.2v19.6h-1.2zM1664.3 468.9h1.4v14.5h-1.4zM1667.2 484.2h1.4v8.5h-1.4zM1698.0 504.7h3.1v12.8h-3.1zM1699.7 517.5h3.1v5.1h-3.1zM1798.7 454.7h1.4v3.9h-1.4zM1841.0 443.6h2.7v4.3h-2.7zM1886.0 448.4h1.4v10.2h-1.4zM1001.3 555.8h1.2v5.0h-1.2zM1014.4 523.4h2.4v10.0h-2.4zM1017.8 510.9h1.8v15.0h-1.8zM1023.5 555.8h1.2v15.0h-1.2zM1042.6 568.3h2.4v10.0h-2.4zM1046.3 590.7h1.8v5.0h-1.8zM1050.0 588.2h1.2v10.0h-1.2zM1052.9 578.3h2.2v10.0h-2.2zM1056.2 548.3h1.8v10.0h-1.8zM1098.1 573.3h2.2v10.0h-2.2zM1123.1 585.7h1.8v5.0h-1.8zM1132.5 565.8h1.8v5.0h-1.8zM1143.3 545.8h2.4v5.0h-2.4zM1183.1 580.8h1.2v5.0h-1.2zM1185.9 593.2h2.4v10.0h-2.4zM1201.3 523.4h2.4v10.0h-2.4zM1206.2 528.4h1.2v10.0h-1.2zM1232.1 610.7h2.2v5.0h-2.2zM1258.5 595.7h2.4v5.0h-2.4zM1281.0 540.8h1.8v25.0h-1.8zM1285.9 558.3h2.2v10.0h-2.2zM1309.7 553.3h2.4v10.0h-2.4zM1313.7 540.8h1.2v15.0h-1.2z"/>
<path fill="#ff0000" d="M201.3 677.5h2.0v21.2h-2.0zM202.9 677.5h2.0v6.2h-2.0zM203.4 683.0h1.0v5.0h-1.0zM209.3 677.5h2.0v11.2h-2.0zM210.9 672.5h2.0v6.2h-2.0zM214.1 662.5h2.0v6.2h-2.0zM215.7 657.5h2.0v6.2h-2.0zM217.3 657.5h2.0v6.2h-2.0zM218.9 652.5h2.0v6.2h-2.0zM222.1 642.5h2.0v11.2h-2.0zM225.3 637.5h2.0v11.2h-2.0zM226.9 637.5h2.0v6.2h-2.0zM228.5 632.5h2.0v6.2h-2.0zM229.0 638.1h1.0v5.0h-1.0zM230.1 622.6h2.0v6.2h-2.0zM231.7 617.6h2.0v6.2h-2.0zM233.3 617.6h2.0v6.2h-2.0zM234.9 617.6h2.0v6.2h-2.0zM235.4 623.2h1.0v5.0h-1.0zM250.9 637.5h2.0v16.2h-2.0zM255.7 637.5h2.0v6.2h-2.0zM262.1 627.6h2.0v6.2h-2.0zM263.7 622.6h2.0v6.2h-2.0zM264.2 613.2h1.0v10.0h-1.0zM268.5 617.6h2.0v16.2h-2.0zM269.0 633.1h1.0v5.0h-1.0zM270.1 612.6h2.0v6.2h-2.0zM273.3 607.6h2.0v11.2h-2.0zM274.9 607.6h2.0v6.2h-2.0zM275.4 603.2h1.0v5.0h-1.0zM276.5 607.6h2.0v6.2h-2.0zM295.7 627.6h2.0v6.2h-2.0zM297.3 622.6h2.0v6.2h-2.0zM303.7 627.6h2.0v6.2h-2.0zM304.2 623.2h1.0v5.0h-1.0zM306.9 627.6h2.0v6.2h-2.0zM307.4 623.2h1.0v5.0h-1.0zM308.5 617.6h2.0v11.2h-2.0zM310.1 607.6h2.0v11.2h-2.0zM313.3 602.6h2.0v6.2h-2.0zM313.8 608.2h1.0v5.0h-1.0zM333.9 617.6h2.0v6.2h-2.0zM341.9 622.6h2.0v6.2h-2.0zM342.4 618.2h1.0v5.0h-1.0zM343.5 622.6h2.0v11.2h-2.0zM344.0 633.1h1.0v5.0h-1.0zM356.3 612.6h2.0v6.2h-2.0zM356.8 608.2h1.0v5.0h-1.0zM365.9 612.6h2.0v11.2h-2.0zM369.1 602.6h2.0v6.2h-2.0zM370.7 602.6h2.0v6.2h-2.0zM372.3 597.6h2.0v6.2h-2.0zM385.1 587.6h2.0v6.2h-2.0zM386.7 592.6h2.0v16.2h-2.0zM391.5 582.6h2.0v6.2h-2.0zM392.0 588.2h1.0v10.0h-1.0zM394.7 572.7h2.0v6.2h-2.0zM395.2 563.3h1.0v10.0h-1.0zM396.3 572.7h2.0v6.2h-2.0zM397.9 567.7h2.0v6.2h-2.0zM402.7 557.7h2.0v6.2h-2.0zM403.2 553.3h1.0v5.0h-1.0zM410.7 562.7h2.0v6.2h-2.0zM411.2 568.3h1.0v5.0h-1.0zM420.3 552.7h2.0v11.2h-2.0zM421.9 547.7h2.0v6.2h-2.0zM423.5 532.8h2.0v11.2h-2.0zM425.1 532.8h2.0v6.2h-2.0zM434.7 527.8h2.0v6.2h-2.0zM442.7 537.7h2.0v16.2h-2.0zM443.2 553.3h1.0v5.0h-1.0zM452.3 552.7h2.0v6.2h-2.0zM453.9 547.7h2.0v11.2h-2.0zM468.3 557.7h2.0v6.2h-2.0zM468.8 548.3h1.0v10.0h-1.0zM471.5 552.7h2.0v6.2h-2.0zM487.5 572.7h2.0v6.2h-2.0zM488.0 578.3h1.0v5.0h-1.0zM489.1 552.7h2.0v21.2h-2.0zM490.7 547.7h2.0v11.2h-2.0zM492.3 547.7h2.0v6.2h-2.0zM500.3 547.7h2.0v21.2h-2.0zM503.5 552.7h2.0v6.2h-2.0zM519.5 577.7h2.0v11.2h-2.0zM521.1 582.6h2.0v6.2h-2.0zM521.6 578.3h1.0v5.0h-1.0zM522.7 582.6h2.0v11.2h-2.0zM523.2 593.2h1.0v5.0h-1.0zM532.3 577.7h2.0v6.2h-2.0zM535.5 572.7h2.0v6.2h-2.0zM537.1 567.7h2.0v6.2h-2.0zM551.5 572.7h2.0v6.2h-2.0zM552.0 568.3h1.0v5.0h-1.0zM557.9 567.7h2.0v11.2h-2.0zM558.4 578.3h1.0v10.0h-1.0zM570.7 562.7h2.0v6.2h-2.0zM596.3 592.6h2.0v6.2h-2.0zM601.1 592.6h2.0v6.2h-2.0zM625.1 602.6h2.0v6.2h-2.0zM629.9 597.6h2.0v6.2h-2.0zM630.4 593.2h1.0v5.0h-1.0zM631.5 597.6h2.0v6.2h-2.0zM634.7 592.6h2.0v6.2h-2.0zM635.2 583.2h1.0v10.0h-1.0zM649.1 617.6h2.0v6.2h-2.0zM649.6 613.2h1.0v5.0h-1.0zM652.3 612.6h2.0v6.2h-2.0zM653.9 612.6h2.0v6.2h-2.0zM658.7 607.6h2.0v6.2h-2.0zM660.3 607.6h2.0v6.2h-2.0zM660.8 598.2h1.0v10.0h-1.0zM665.1 597.6h2.0v6.2h-2.0zM666.7 592.6h2.0v6.2h-2.0zM695.5 587.6h2.0v6.2h-2.0zM709.9 587.6h2.0v6.2h-2.0zM717.9 587.6h2.0v6.2h-2.0zM718.4 593.2h1.0v5.0h-1.0zM724.3 587.6h2.0v6.2h-2.0zM737.1 572.7h2.0v11.2h-2.0zM753.1 582.6h2.0v6.2h-2.0zM753.6 578.3h1.0v5.0h-1.0zM775.5 572.7h2.0v6.2h-2.0zM777.1 567.7h2.0v6.2h-2.0zM778.7 562.7h2.0v6.2h-2.0zM788.3 572.7h2.0v16.2h-2.0zM788.8 588.2h1.0v10.0h-1.0zM796.3 587.6h2.0v6.2h-2.0zM797.9 567.7h2.0v36.1h-2.0zM812.3 582.6h2.0v6.2h-2.0zM812.8 588.2h1.0v5.0h-1.0zM817.1 572.7h2.0v6.2h-2.0zM818.7 572.7h2.0v6.2h-2.0zM821.9 572.7h2.0v11.2h-2.0zM833.1 572.7h2.0v6.2h-2.0zM833.6 563.3h1.0v10.0h-1.0zM841.1 567.7h2.0v6.2h-2.0zM858.7 557.7h2.0v11.2h-2.0zM860.3 547.7h2.0v11.2h-2.0zM876.3 582.6h2.0v16.2h-2.0zM877.9 577.7h2.0v11.2h-2.0zM906.7 567.7h2.0v6.2h-2.0zM907.2 573.3h1.0v5.0h-1.0zM908.3 562.7h2.0v6.2h-2.0zM911.5 552.7h2.0v11.2h-2.0zM913.1 552.7h2.0v6.2h-2.0zM913.6 548.3h1.0v5.0h-1.0zM914.7 547.7h2.0v6.2h-2.0zM917.9 532.8h2.0v6.2h-2.0zM924.3 537.7h2.0v6.2h-2.0zM927.5 512.8h2.0v11.2h-2.0zM928.0 508.4h1.0v5.0h-1.0zM929.1 507.8h2.0v6.2h-2.0zM935.5 502.8h2.0v11.2h-2.0zM936.0 513.4h1.0v5.0h-1.0zM937.1 502.8h2.0v6.2h-2.0zM937.6 498.4h1.0v5.0h-1.0zM938.7 497.8h2.0v6.2h-2.0zM940.3 492.8h2.0v6.2h-2.0zM945.1 472.9h2.0v11.2h-2.0zM953.1 492.8h2.0v6.2h-2.0zM967.5 512.8h2.0v6.2h-2.0zM969.1 517.8h2.0v21.2h-2.0zM969.6 513.4h1.0v5.0h-1.0zM1032.3 567.7h2.0v21.2h-2.0zM1033.9 567.7h2.0v21.2h-2.0zM1168.3 567.7h2.0v6.2h-2.0zM1190.7 572.7h2.0v11.2h-2.0zM1195.5 547.7h2.0v16.2h-2.0zM1196.0 543.3h1.0v5.0h-1.0zM1305.9 552.7h2.0v11.2h-2.0zM1321.9 487.8h2.0v11.2h-2.0zM1322.4 498.4h1.0v5.0h-1.0zM128.0 718.6h1.7v19.6h-1.7zM181.3 638.9h1.7v4.1h-1.7zM293.7 629.0h1.4v18.8h-1.4zM1320.2 493.6h1.4v20.5h-1.4zM1325.2 473.2h1.5v15.4h-1.5zM1331.3 463.8h1.2v9.4h-1.2zM1334.8 488.5h1.2v20.5h-1.2zM1348.7 488.5h1.4v9.4h-1.4zM1353.5 448.4h2.4v19.6h-2.4zM1360.5 454.4h1.7v34.1h-1.7zM1373.6 518.4h2.0v4.3h-2.0zM1384.9 497.9h2.2v35.8h-2.2zM1391.9 479.1h1.4v9.4h-1.4zM1393.6 459.5h1.2v23.9h-1.2zM1398.7 454.7h1.4v3.9h-1.4zM1409.8 454.4h1.4v11.9h-1.4zM1411.6 433.9h1.2v23.9h-1.2zM1425.5 429.6h2.4v4.3h-2.4zM1426.8 439.0h2.4v4.3h-2.4zM1450.2 484.2h2.4v4.3h-2.4zM1453.8 459.5h2.0v4.3h-2.0zM1464.4 458.6h1.4v29.9h-1.4zM1479.7 497.9h1.5v6.0h-1.5zM1481.5 448.4h1.4v30.7h-1.4zM1486.0 479.1h1.5v9.4h-1.5zM1503.6 468.0h2.0v16.2h-2.0zM1519.4 463.8h2.2v15.4h-2.2zM1531.6 448.4h1.2v5.1h-1.2zM1558.4 504.7h2.0v4.3h-2.0zM1582.4 538.9h1.9v15.4h-1.9zM1590.0 504.7h2.7v13.7h-2.7zM1636.4 548.2h2.0v6.0h-2.0zM1632.9 554.2h2.4v4.3h-2.4zM1645.8 509.0h2.0v4.3h-2.0zM1625.1 573.1h2.8v15.2h-2.8zM1623.3 604.3h1.4v9.0h-1.4zM1662.5 472.8h1.4v15.2h-1.4zM1645.1 509.4h3.0v4.2h-3.0zM1737.4 508.8h1.7v13.8h-1.7zM1636.1 548.2h3.0v5.5h-3.0zM1633.0 554.4h3.0v4.2h-3.0zM1662.6 473.2h1.4v15.4h-1.4zM1685.9 448.4h1.5v19.6h-1.5zM1737.5 509.0h1.5v13.7h-1.5zM1753.3 454.4h1.5v13.7h-1.5zM1756.3 474.0h1.4v9.4h-1.4zM1759.4 479.1h1.4v4.3h-1.4zM1784.7 473.2h2.7v6.0h-2.7zM1789.1 454.4h2.7v4.3h-2.7zM1818.3 443.6h2.0v4.3h-2.0zM1038.9 565.8h1.2v15.0h-1.2zM1078.7 575.8h1.8v5.0h-1.8zM1139.8 555.8h2.4v5.0h-2.4zM1157.2 545.8h1.8v5.0h-1.8zM1176.3 568.3h1.2v10.0h-1.2zM1188.5 585.7h2.4v5.0h-2.4zM1195.1 545.8h1.8v5.0h-1.8zM1222.9 575.8h1.8v5.0h-1.8zM1254.5 588.2h1.8v10.0h-1.8zM1261.1 555.8h2.2v25.0h-2.2zM1265.0 560.8h1.2v5.0h-1.2zM1299.2 548.3h1.2v10.0h-1.2zM1302.6 540.8h1.2v15.0h-1.2zM1318.3 513.4h2.2v10.0h-2.2z"/></g>
<path d="M13.4 915.6 L15.8 915.6 L18.2 920.7 L19.2 931.0 L21.5 905.2 L23.7 905.2 L25.9 910.4 L28.3 905.2 L30.7 900.1 L33.6 879.4 L35.5 874.3 L37.4 879.4 L39.3 884.6 L41.3 894.9 L43.2 894.9 L45.1 900.1 L46.1 910.4 L48.2 905.2 L50.3 900.1 L52.0 905.2 L53.7 910.4 L55.7 905.2 L57.6 900.1 L59.5 905.2 L61.4 910.4 L64.3 910.4 L67.2 889.8 L69.1 894.9 L71.0 900.1 L73.4 889.8 L75.8 884.6 L77.7 879.4 L79.7 874.3 L81.6 869.1 L83.5 869.1 L85.4 879.4 L87.3 869.1 L89.3 864.0 L91.2 853.6 L93.6 858.8 L96.0 858.8 L97.9 853.6 L99.8 853.6 L102.7 858.8 L105.1 853.6 L107.5 843.3 L109.9 853.6 L112.3 858.8 L112.3 900.1 L114.0 894.9 L115.6 900.1 L117.3 894.9 L119.0 900.1 L119.0 884.6 L121.9 884.6 L124.8 884.6 L126.7 910.4 L129.6 910.4 L132.4 889.8 L134.8 879.4 L137.2 874.3 L139.0 869.1 L140.7 869.1 L142.4 864.0 L144.1 858.8 L145.9 858.8 L147.8 864.0 L149.7 864.0 L151.6 900.1 L154.0 905.2 L156.4 905.2 L159.3 910.4 L161.2 900.1 L163.1 900.1 L165.1 894.9 L167.0 894.9 L169.9 910.4 L171.8 894.9 L174.7 920.7 L176.6 925.9 L178.5 915.6 L181.4 941.4 L184.3 931.0 L186.0 941.4 L187.7 962.0 L189.1 905.2 L190.4 858.8 L191.9 905.2 L194.0 894.9 L196.2 889.8 L196.7 905.2 L199.6 869.1 L201.5 869.1 L203.5 874.3 L205.4 869.1 L206.9 874.3 L209.0 869.1 L211.1 869.1 L214.0 889.8 L216.4 889.8 L218.8 900.1 L220.7 900.1 L222.6 894.9 L225.5 905.2 L228.4 905.2 L230.8 910.4 L233.2 915.6 L235.1 915.6 L237.0 920.7 L239.0 931.0 L240.6 931.0 L242.2 925.9 L244.1 931.0 L245.9 925.9 L247.6 915.6 L249.5 915.6 L251.4 910.4 L253.4 900.1 L255.3 894.9 L257.2 884.6 L260.1 900.1 L262.0 900.1 L263.9 900.1 L265.8 894.9 L267.8 910.4 L270.6 905.2 L273.5 915.6 L275.2 915.6 L276.9 920.7 L278.6 920.7 L280.2 915.6 L282.5 905.2 L284.3 905.2 L286.0 910.4 L287.9 910.4 L289.8 910.4 L291.7 915.6 L293.7 920.7 L295.6 920.7 L297.5 920.7 L299.4 920.7 L301.3 915.6 L304.2 925.9 L306.6 920.7 L309.0 915.6 L311.9 920.7 L313.8 936.2 L315.7 941.4 L317.7 946.5 L319.6 931.0 L321.5 931.0 L323.9 936.2 L326.3 941.4 L328.7 946.5 L331.1 951.7 L334.0 925.9 L335.9 925.9 L337.8 925.9 L339.7 925.9 L341.7 920.7 L343.6 920.7 L345.5 915.6 L347.4 920.7 L349.3 920.7 L351.2 915.6 L353.2 915.6 L355.1 920.7 L357.0 915.6 L358.9 925.9 L361.8 905.2 L363.7 905.2 L365.6 900.1 L368.5 915.6 L370.9 920.7 L373.3 925.9 L375.2 925.9 L377.2 931.0 L379.1 925.9 L380.0 925.9 L382.4 925.9 L384.8 931.0 L387.2 931.0 L389.6 925.9 L392.0 931.0 L394.4 931.0 L396.3 951.7 L398.2 951.7 L400.2 946.5 L401.1 936.2 L403.0 936.2 L405.0 925.9 L406.9 936.2 L408.8 925.9 L411.2 936.2 L413.6 941.4 L415.5 936.2 L417.4 925.9 L419.3 931.0 L421.3 925.9 L423.2 936.2 L425.6 941.4 L428.0 951.7 L430.9 951.7 L432.8 941.4 L434.7 936.2 L437.6 946.5 L439.5 941.4 L441.4 931.0 L443.3 936.2 L445.3 941.4 L447.2 946.5 L449.6 936.2 L452.0 931.0 L453.9 931.0 L455.8 931.0 L456.8 941.4 L459.7 920.7 L462.5 925.9 L464.5 920.7 L466.4 915.6 L469.3 931.0 L471.7 931.0 L474.0 931.0 L476.0 931.0 L477.9 925.9 L479.8 925.9 L482.2 931.0 L484.6 931.0 L487.5 941.4 L490.4 925.9 L492.3 951.7 L494.2 941.4 L496.1 931.0 L498.0 941.4 L500.0 941.4 L502.4 936.2 L504.8 931.0 L506.7 920.7 L509.6 931.0 L511.5 936.2 L513.4 941.4 L515.3 925.9 L517.2 910.4 L519.2 910.4 L521.1 910.4 L523.0 915.6 L525.9 925.9 L527.8 931.0 L529.7 936.2 L531.6 941.4 L534.5 936.2 L536.4 951.7 L538.3 951.7 L540.3 946.5 L543.1 931.0 L545.1 931.0 L547.0 925.9 L548.9 931.0 L550.8 931.0 L552.7 936.2 L554.7 941.4 L556.6 941.4 L559.0 936.2 L561.4 936.2 L563.3 936.2 L565.2 936.2 L567.1 946.5 L568.9 946.5 L570.7 946.5 L572.5 951.7 L574.3 946.5 L576.1 951.7 L577.8 951.7 L579.6 946.5 L581.5 951.7 L583.5 951.7 L585.4 951.7 L587.3 941.4 L589.7 941.4 L592.1 936.2 L595.0 941.4 L597.9 931.0 L600.7 941.4 L602.6 946.5 L604.6 951.7 L607.4 941.4 L609.1 941.4 L610.8 941.4 L612.5 941.4 L614.2 946.5 L617.0 951.7 L619.9 941.4 L621.8 941.4 L623.8 941.4 L625.7 941.4 L627.6 941.4 L629.5 941.4 L631.4 946.5 L633.4 946.5 L635.3 941.4 L637.2 946.5 L638.9 951.7 L640.6 956.8 L642.2 956.8 L643.9 962.0 L646.8 936.2 L648.7 931.0 L650.6 931.0 L652.6 936.2 L654.5 941.4 L656.4 941.4 L658.3 941.4 L660.2 941.4 L662.1 936.2 L664.1 941.4 L666.0 941.4 L667.9 951.7 L669.8 951.7 L671.7 967.2 L674.6 946.5 L677.5 962.0 L679.9 956.8 L682.3 956.8 L684.7 956.8 L687.1 967.2 L689.0 962.0 L690.9 962.0 L692.9 962.0 L694.8 967.2 L697.2 962.0 L699.6 951.7 L701.5 941.4 L703.4 931.0 L706.3 946.5 L708.2 951.7 L710.1 951.7 L712.5 951.7 L714.9 946.5 L716.7 946.5 L718.4 946.5 L720.1 951.7 L721.8 946.5 L723.6 946.5 L725.5 946.5 L727.4 951.7 L729.3 951.7 L731.2 946.5 L733.2 941.4 L735.1 951.7 L737.0 962.0 L738.9 956.8 L740.8 946.5 L742.8 946.5 L745.2 941.4 L747.6 936.2 L749.5 931.0 L751.4 925.9 L753.3 925.9 L755.2 931.0 L757.2 936.2 L760.0 946.5 L761.9 951.7 L763.8 956.8 L765.8 956.8 L767.7 962.0 L769.6 946.5 L771.5 941.4 L773.9 941.4 L776.3 941.4 L778.0 951.7 L779.7 951.7 L781.4 951.7 L783.0 962.0 L785.4 951.7 L787.8 936.2 L790.2 936.2 L792.6 931.0 L795.5 946.5 L798.4 972.3 L800.3 972.3 L802.2 982.6 L804.1 982.6 L806.1 962.0 L807.7 962.0 L809.4 962.0 L811.1 956.8 L812.8 951.7 L814.7 956.8 L816.6 956.8 L818.5 962.0 L821.4 956.8 L823.1 956.8 L824.8 967.2 L826.5 967.2 L828.1 977.5 L830.1 967.2 L832.0 956.8 L834.4 951.7 L836.8 951.7 L839.7 936.2 L842.5 946.5 L844.2 951.7 L845.9 951.7 L847.6 951.7 L849.3 956.8 L851.2 951.7 L853.1 951.7 L855.0 951.7 L857.4 946.5 L859.8 946.5 L862.2 967.2 L864.6 982.6 L866.5 967.2 L868.9 962.0 L871.3 956.8 L873.0 941.4 L874.6 936.2 L876.4 946.5 L878.2 951.7 L880.0 962.0 L881.9 956.8 L883.8 946.5 L885.7 936.2 L888.1 936.2 L890.5 936.2 L892.4 920.7 L894.5 915.6 L896.7 910.4 L898.9 920.7 L901.1 931.0 L904.0 920.7 L906.4 915.6 L908.8 910.4 L910.9 905.2 L913.0 894.9 L914.7 900.1 L916.4 905.2 L918.3 910.4 L920.3 915.6 L922.2 920.7 L925.1 936.2 L927.9 925.9 L930.8 956.8 L933.7 956.8 L936.1 967.2 L938.5 972.3 L941.4 977.5 L943.9 998.1 L945.5 987.8 L947.1 977.5 L949.1 967.2 L951.0 962.0 L952.9 967.2 L954.8 967.2 L957.7 951.7 L960.1 956.8 L962.5 962.0 L964.4 956.8 L966.3 951.7 L968.3 956.8 L970.2 962.0 L972.1 967.2 L974.5 951.7 L976.9 936.2 L978.8 931.0 L980.7 925.9 L982.6 931.0 L984.6 925.9 L986.5 920.7 L988.2 915.6 L989.9 910.4 L991.7 905.2 L993.5 910.4 L995.3 910.4 L997.0 910.4 L999.9 925.9 L1001.8 936.2 L1003.8 936.2 L1005.7 931.0 L1008.6 941.4 L1010.5 941.4 L1012.4 941.4 L1014.3 941.4 L1016.2 962.0 L1018.2 962.0 L1020.1 967.2 L1022.0 967.2 L1024.9 931.0 L1027.8 941.4 L1029.4 931.0 L1031.0 931.0 L1032.8 931.0 L1034.6 936.2 L1036.4 941.4 L1039.3 946.5 L1042.1 925.9 L1044.1 936.2 L1045.8 925.9 L1047.5 915.6 L1049.3 905.2 L1051.5 910.4 L1053.7 920.7 L1056.5 915.6 L1059.4 925.9 L1061.3 925.9 L1063.3 931.0 L1065.2 931.0 L1067.1 925.9 L1069.0 925.9 L1070.9 925.9 L1072.9 941.4 L1075.3 936.2 L1077.7 925.9 L1078.6 900.1 L1080.5 894.9 L1082.5 894.9 L1084.4 900.1 L1086.3 894.9 L1088.2 894.9 L1090.1 889.8 L1092.1 889.8 L1094.0 884.6 L1096.9 889.8 L1098.8 884.6 L1100.7 884.6 L1102.6 874.3 L1105.5 874.3 L1107.4 874.3 L1109.3 869.1 L1111.2 869.1 L1113.6 869.1 L1116.0 874.3 L1118.0 869.1 L1119.9 869.1 L1121.8 874.3 L1124.7 853.6 L1127.6 874.3 L1130.0 879.4 L1132.4 884.6 L1134.3 879.4 L1136.2 874.3 L1139.1 889.8 L1140.0 889.8 L1141.9 889.8 L1143.8 894.9 L1145.8 894.9 L1147.7 894.9 L1149.6 905.2 L1151.5 910.4 L1153.4 915.6 L1155.8 920.7 L1158.2 915.6 L1161.1 905.2 L1163.5 900.1 L1165.9 900.1 L1167.8 905.2 L1169.8 910.4 L1172.1 905.2 L1174.5 905.2 L1176.9 894.9 L1179.3 884.6 L1181.0 884.6 L1182.7 879.4 L1184.4 879.4 L1186.1 879.4 L1188.0 869.1 L1189.9 889.8 L1191.8 900.1 L1194.7 884.6 L1196.6 879.4 L1198.5 879.4 L1200.5 879.4 L1202.4 889.8 L1204.3 889.8 L1207.2 900.1 L1209.1 905.2 L1211.0 910.4 L1212.9 915.6 L1214.9 910.4 L1216.8 910.4 L1218.7 889.8 L1221.1 889.8 L1223.5 884.6 L1226.4 894.9 L1228.3 884.6 L1230.2 874.3 L1232.1 858.8 L1234.0 853.6 L1236.0 853.6 L1237.9 853.6 L1240.8 869.1 L1242.7 864.0 L1244.6 858.8 L1246.5 858.8 L1248.9 858.8 L1251.3 848.5 L1253.0 864.0 L1254.6 874.3 L1257.1 853.6 L1259.0 858.8 L1260.9 864.0 L1263.8 884.6 L1266.2 884.6 L1268.6 884.6 L1271.5 874.3 L1273.4 884.6 L1275.3 889.8 L1277.2 889.8 L1279.2 884.6 L1281.1 894.9 L1283.0 910.4 L1285.4 900.1 L1287.8 894.9 L1290.2 894.9 L1292.6 900.1 L1295.0 894.9 L1297.4 889.8 L1299.8 889.8 L1302.2 894.9 L1304.1 905.2 L1306.0 915.6 L1308.4 920.7 L1310.8 925.9 L1312.7 931.0 L1314.7 936.2 L1317.1 946.5 L1319.5 956.8 L1321.4 972.3 L1323.3 987.8 L1324.9 1003.3 L1326.6 1018.8 L1329.1 993.0 L1331.0 993.0 L1332.9 993.0 L1334.8 977.5 L1336.7 987.8 L1338.7 998.1 L1341.1 987.8 L1343.5 987.8 L1345.4 977.5 L1347.3 962.0 L1349.2 977.5 L1351.1 993.0 L1353.5 998.1 L1355.9 1013.6 L1357.9 998.1 L1359.8 977.5 L1362.6 998.1 L1365.5 1013.6 L1368.4 962.0 L1371.3 951.7 L1373.7 946.5 L1376.1 941.4 L1377.8 941.4 L1379.4 951.7 L1381.1 951.7 L1382.8 951.7 L1384.7 946.5 L1386.6 946.5 L1388.6 936.2 L1390.2 920.7 L1391.8 905.2 L1394.3 931.0 L1396.2 941.4 L1398.2 962.0 L1400.1 956.8 L1402.0 951.7 L1403.9 967.2 L1405.8 946.5 L1408.2 951.7 L1410.6 956.8 L1411.6 977.5 L1413.5 977.5 L1415.4 972.3 L1417.4 982.6 L1419.3 967.2 L1421.2 951.7 L1423.1 946.5 L1425.0 946.5 L1427.9 967.2 L1429.8 956.8 L1431.7 951.7 L1433.7 905.2 L1436.1 894.9 L1438.5 884.6 L1440.9 884.6 L1443.3 884.6 L1445.2 869.1 L1446.8 858.8 L1448.4 848.5 L1450.2 858.8 L1451.9 864.0 L1454.3 889.8 L1456.7 905.2 L1459.6 900.1 L1462.0 884.6 L1464.4 869.1 L1466.3 879.4 L1468.2 894.9 L1470.1 894.9 L1472.1 905.2 L1474.9 925.9 L1477.8 884.6 L1480.7 879.4 L1483.6 925.9 L1485.5 915.6 L1487.4 905.2 L1489.3 915.6 L1491.2 920.7 L1493.2 920.7 L1495.1 910.4 L1497.0 910.4 L1498.9 915.6 L1500.8 920.7 L1503.7 920.7 L1505.6 936.2 L1507.6 951.7 L1509.5 925.9 L1511.4 951.7 L1513.8 941.4 L1516.2 936.2 L1518.1 925.9 L1520.0 910.4 L1522.9 946.5 L1525.8 951.7 L1527.7 951.7 L1529.6 941.4 L1531.3 946.5 L1533.0 941.4 L1534.8 941.4 L1536.5 946.5 L1538.2 951.7 L1539.9 946.5 L1541.6 941.4 L1543.3 951.7 L1545.0 946.5 L1546.9 946.5 L1548.8 941.4 L1551.7 910.4 L1553.6 931.0 L1555.6 931.0 L1557.5 936.2 L1559.4 936.2 L1561.3 941.4 L1564.2 915.6 L1566.1 900.1 L1568.0 879.4 L1570.9 900.1 L1572.8 889.8 L1574.8 879.4 L1576.7 889.8 L1578.6 900.1 L1580.5 884.6 L1582.4 874.3 L1585.3 894.9 L1588.2 879.4 L1590.1 894.9 L1592.0 915.6 L1593.9 931.0 L1596.3 920.7 L1598.7 910.4 L1600.7 915.6 L1602.6 925.9 L1604.5 900.1 L1606.4 879.4 L1609.3 889.8 L1611.2 874.3 L1613.1 853.6 L1615.1 858.8 L1617.0 864.0 L1618.9 864.0 L1620.8 858.8 L1622.7 848.5 L1624.7 843.3 L1626.6 853.6 L1628.5 869.1 L1630.9 874.3 L1633.3 879.4 L1635.2 874.3 L1637.1 869.1 L1639.0 874.3 L1641.0 884.6 L1643.8 874.3 L1645.8 879.4 L1647.7 884.6 L1650.6 920.7 L1652.5 920.7 L1654.4 920.7 L1657.3 925.9 L1659.7 925.9 L1662.1 931.0 L1664.0 925.9 L1665.9 925.9 L1667.8 920.7 L1669.8 931.0 L1671.7 941.4 L1673.6 931.0 L1675.5 925.9 L1677.4 936.2 L1679.4 941.4 L1681.8 936.2 L1684.2 936.2 L1686.1 951.7 L1688.0 972.3 L1690.4 977.5 L1692.8 977.5 L1695.7 951.7 L1698.6 956.8 L1700.5 941.4 L1702.4 920.7 L1704.8 931.0 L1707.2 931.0 L1709.6 931.0 L1712.0 931.0 L1713.9 941.4 L1716.3 931.0 L1718.7 915.6 L1720.4 920.7 L1722.1 915.6 L1723.7 925.9 L1725.4 925.9 L1728.3 920.7 L1731.2 925.9 L1733.1 920.7 L1735.0 920.7 L1736.9 920.7 L1739.8 941.4 L1741.7 936.2 L1743.7 931.0 L1745.6 925.9 L1748.5 936.2 L1748.8 967.2 L1751.0 972.3 L1753.3 977.5 L1755.2 993.0 L1757.1 998.1 L1759.0 993.0 L1760.9 998.1 L1763.3 1003.3 L1765.7 1003.3 L1767.6 1008.4 L1769.6 1018.8 L1772.0 1018.8 L1774.4 1018.8 L1777.2 1008.4 L1779.2 1013.6 L1781.1 1018.8 L1783.0 1013.6 L1784.9 1018.8 L1786.8 1008.4 L1788.8 998.1 L1790.7 1003.3 L1792.6 1018.8 L1794.5 1023.9 L1796.9 1018.8 L1799.3 1013.6 L1802.2 1023.9 L1803.9 1018.8 L1805.7 1018.8 L1807.4 1013.6 L1809.1 1008.4 L1810.8 1008.4 L1812.8 1013.6 L1814.7 1008.4 L1816.6 1013.6 L1819.5 998.1 L1822.4 1018.8 L1825.2 1034.2 L1826.9 1029.1 L1828.6 1034.2 L1830.3 1034.2 L1831.9 1034.2 L1834.3 1018.8 L1836.7 1003.3 L1838.5 998.1 L1840.2 993.0 L1841.9 987.8 L1843.7 1003.3 L1845.4 1008.4 L1847.3 1013.6 L1849.2 1018.8 L1851.1 1023.9 L1853.1 1029.1 L1854.7 1029.1 L1856.4 1018.8 L1858.1 1018.8 L1859.8 1013.6 L1862.2 1013.6 L1864.6 1013.6 L1867.5 998.1 L1869.4 1003.3 L1871.3 1008.4 L1873.2 1013.6 L1875.6 1023.9 L1878.0 1029.1 L1879.7 1034.2 L1881.4 1034.2 L1883.1 1034.2 L1884.7 1039.4 L1886.7 1023.9 L1888.6 1008.4 L1891.0 1003.3 L1893.4 998.1 L1895.3 1003.3 L1897.2 1008.4 L1899.6 1008.4 L1902.0 1013.6 L1904.4 1008.4 L1906.8 1003.3 L1909.7 1018.8 L1912.1 1013.6 L1914.5 1018.8 L1916.4 987.8 L1918.3 982.6 L1920.2 977.5 L1922.2 977.5 L1924.1 977.5 L1926.0 977.5 L1927.9 982.6" fill="none" stroke="#ff0000" stroke-width="3.4" stroke-linejoin="miter" stroke-miterlimit="2" filter="url(#bl)"/>
<rect x="10.2" y="75.8" width="1921.8" height="296.2" rx="1.5" fill="none" stroke="#f2f2f2" stroke-width="2"/>
<path d="M9.2 75.8H1933.0" stroke="#f6f6f6" stroke-width="2.9"/>
<rect x="10.2" y="405.1" width="1921.8" height="393.6" rx="1.5" fill="none" stroke="#f2f2f2" stroke-width="2"/>
<rect x="10.2" y="831.7" width="1921.8" height="218.4" rx="1.5" fill="none" stroke="#f2f2f2" stroke-width="2"/>
<g style="font-family:'Noto Sans Mono CJK JP',IPAGothic,'Liberation Mono',monospace;font-size:19.2px" fill="#cacaca" filter="url(#bt)">
<text transform="translate(56.4,387.6) scale(1,1.08)" xml:space="preserve">04</text>
<text transform="translate(134.3,387.6) scale(1,1.08)" xml:space="preserve">05</text>
<text transform="translate(213.9,387.6) scale(1,1.08)" xml:space="preserve">09</text>
<text transform="translate(309.6,387.6) scale(1,1.08)" xml:space="preserve">10</text>
<text transform="translate(406.8,387.6) scale(1,1.08)" xml:space="preserve">11</text>
<text transform="translate(502.4,387.6) scale(1,1.08)" xml:space="preserve">12</text>
<text transform="translate(594.2,387.6) scale(1,1.08)" xml:space="preserve">13</text>
<text transform="translate(682.9,387.6) scale(1,1.08)" xml:space="preserve">14</text>
<text transform="translate(754.5,387.6) scale(1,1.08)" xml:space="preserve">15</text>
<text transform="translate(795.9,387.6) scale(1,1.08)" xml:space="preserve">16</text>
<text transform="translate(843.9,387.6) scale(1,1.08)" xml:space="preserve">17</text>
<text transform="translate(941.0,387.6) scale(1,1.08)" xml:space="preserve">18</text>
<text transform="translate(1031.6,387.6) scale(1,1.08)" xml:space="preserve">19</text>
<text transform="translate(1120.6,387.6) scale(1,1.08)" xml:space="preserve">20</text>
<text transform="translate(1208.0,387.6) scale(1,1.08)" xml:space="preserve">21</text>
<text transform="translate(1301.9,387.6) scale(1,1.08)" xml:space="preserve">22</text>
<text transform="translate(1396.8,387.6) scale(1,1.08)" xml:space="preserve">23</text>
<text transform="translate(1494.0,387.6) scale(1,1.08)" xml:space="preserve">00</text>
<text transform="translate(1584.5,387.6) scale(1,1.08)" xml:space="preserve">01</text>
<text transform="translate(1668.8,387.6) scale(1,1.08)" xml:space="preserve">02</text>
<text transform="translate(1751.6,387.6) scale(1,1.08)" xml:space="preserve">03</text>
<text transform="translate(1815.9,387.6) scale(1,1.08)" xml:space="preserve">04</text>
<text transform="translate(1873.9,387.6) scale(1,1.08)" xml:space="preserve">05</text>
<text transform="translate(1901.6,387.6) scale(1,1.08)" xml:space="preserve">06</text>
<text transform="translate(163.3,387.6) scale(1,1.08)" xml:space="preserve" fill="#f2f2f2" font-weight="bold" stroke="#f2f2f2" stroke-width="0.45">06</text>
<text transform="translate(191.6,365.2) scale(1,1.08)" xml:space="preserve">31</text>
<text transform="translate(1495.0,365.2) scale(1,1.08)" xml:space="preserve">01</text>
<text transform="translate(56.4,814.3) scale(1,1.08)" xml:space="preserve">04</text>
<text transform="translate(134.3,814.3) scale(1,1.08)" xml:space="preserve">05</text>
<text transform="translate(213.9,814.3) scale(1,1.08)" xml:space="preserve">09</text>
<text transform="translate(309.6,814.3) scale(1,1.08)" xml:space="preserve">10</text>
<text transform="translate(406.8,814.3) scale(1,1.08)" xml:space="preserve">11</text>
<text transform="translate(502.4,814.3) scale(1,1.08)" xml:space="preserve">12</text>
<text transform="translate(594.2,814.3) scale(1,1.08)" xml:space="preserve">13</text>
<text transform="translate(682.9,814.3) scale(1,1.08)" xml:space="preserve">14</text>
<text transform="translate(754.5,814.3) scale(1,1.08)" xml:space="preserve">15</text>
<text transform="translate(795.9,814.3) scale(1,1.08)" xml:space="preserve">16</text>
<text transform="translate(843.9,814.3) scale(1,1.08)" xml:space="preserve">17</text>
<text transform="translate(941.0,814.3) scale(1,1.08)" xml:space="preserve">18</text>
<text transform="translate(1031.6,814.3) scale(1,1.08)" xml:space="preserve">19</text>
<text transform="translate(1120.6,814.3) scale(1,1.08)" xml:space="preserve">20</text>
<text transform="translate(1208.0,814.3) scale(1,1.08)" xml:space="preserve">21</text>
<text transform="translate(1301.9,814.3) scale(1,1.08)" xml:space="preserve">22</text>
<text transform="translate(1396.8,814.3) scale(1,1.08)" xml:space="preserve">23</text>
<text transform="translate(1494.0,814.3) scale(1,1.08)" xml:space="preserve">00</text>
<text transform="translate(1584.5,814.3) scale(1,1.08)" xml:space="preserve">01</text>
<text transform="translate(1668.8,814.3) scale(1,1.08)" xml:space="preserve">02</text>
<text transform="translate(1751.6,814.3) scale(1,1.08)" xml:space="preserve">03</text>
<text transform="translate(1815.9,814.3) scale(1,1.08)" xml:space="preserve">04</text>
<text transform="translate(1873.9,814.3) scale(1,1.08)" xml:space="preserve">05</text>
<text transform="translate(1901.6,814.3) scale(1,1.08)" xml:space="preserve">06</text>
<text transform="translate(163.3,814.3) scale(1,1.08)" xml:space="preserve" fill="#f2f2f2" font-weight="bold" stroke="#f2f2f2" stroke-width="0.45">06</text>
<text transform="translate(191.6,791.9) scale(1,1.08)" xml:space="preserve">31</text>
<text transform="translate(1495.0,791.9) scale(1,1.08)" xml:space="preserve">01</text>
<text transform="translate(56.4,1065.7) scale(1,1.08)" xml:space="preserve">04</text>
<text transform="translate(134.3,1065.7) scale(1,1.08)" xml:space="preserve">05</text>
<text transform="translate(213.9,1065.7) scale(1,1.08)" xml:space="preserve">09</text>
<text transform="translate(309.6,1065.7) scale(1,1.08)" xml:space="preserve">10</text>
<text transform="translate(406.8,1065.7) scale(1,1.08)" xml:space="preserve">11</text>
<text transform="translate(502.4,1065.7) scale(1,1.08)" xml:space="preserve">12</text>
<text transform="translate(594.2,1065.7) scale(1,1.08)" xml:space="preserve">13</text>
<text transform="translate(682.9,1065.7) scale(1,1.08)" xml:space="preserve">14</text>
<text transform="translate(754.5,1065.7) scale(1,1.08)" xml:space="preserve">15</text>
<text transform="translate(795.9,1065.7) scale(1,1.08)" xml:space="preserve">16</text>
<text transform="translate(843.9,1065.7) scale(1,1.08)" xml:space="preserve">17</text>
<text transform="translate(941.0,1065.7) scale(1,1.08)" xml:space="preserve">18</text>
<text transform="translate(1031.6,1065.7) scale(1,1.08)" xml:space="preserve">19</text>
<text transform="translate(1120.6,1065.7) scale(1,1.08)" xml:space="preserve">20</text>
<text transform="translate(1208.0,1065.7) scale(1,1.08)" xml:space="preserve">21</text>
<text transform="translate(1301.9,1065.7) scale(1,1.08)" xml:space="preserve">22</text>
<text transform="translate(1396.8,1065.7) scale(1,1.08)" xml:space="preserve">23</text>
<text transform="translate(1494.0,1065.7) scale(1,1.08)" xml:space="preserve">00</text>
<text transform="translate(1584.5,1065.7) scale(1,1.08)" xml:space="preserve">01</text>
<text transform="translate(1668.8,1065.7) scale(1,1.08)" xml:space="preserve">02</text>
<text transform="translate(1751.6,1065.7) scale(1,1.08)" xml:space="preserve">03</text>
<text transform="translate(1815.9,1065.7) scale(1,1.08)" xml:space="preserve">04</text>
<text transform="translate(1873.9,1065.7) scale(1,1.08)" xml:space="preserve">05</text>
<text transform="translate(1901.6,1065.7) scale(1,1.08)" xml:space="preserve">06</text>
<text transform="translate(163.3,1065.7) scale(1,1.08)" xml:space="preserve" fill="#f2f2f2" font-weight="bold" stroke="#f2f2f2" stroke-width="0.45">06</text>
<text transform="translate(191.6,1043.3) scale(1,1.08)" xml:space="preserve">31</text>
<text transform="translate(1495.0,1043.3) scale(1,1.08)" xml:space="preserve">01</text>
<text transform="translate(1933.6,287.6) scale(1,1.08)" xml:space="preserve">6,625</text>
<text transform="translate(1933.6,391.8) scale(1,1.08)" xml:space="preserve">6,600</text>
<text transform="translate(1933.6,504.8) scale(1,1.08)" xml:space="preserve">3,740</text>
<text transform="translate(1933.6,554.7) scale(1,1.08)" xml:space="preserve">3,730</text>
<text transform="translate(1933.6,604.6) scale(1,1.08)" xml:space="preserve">3,720</text>
<text transform="translate(1933.6,654.5) scale(1,1.08)" xml:space="preserve">3,710</text>
<text transform="translate(1933.6,704.4) scale(1,1.08)" xml:space="preserve">3,700</text>
<text transform="translate(1933.6,754.3) scale(1,1.08)" xml:space="preserve">3,690</text>
<text transform="translate(1933.6,804.8) scale(1,1.08)" xml:space="preserve">3,680</text>
<text transform="translate(1933.6,455.8) scale(1,1.08)" xml:space="preserve">3,750</text>
<text transform="translate(1933.6,881.3) scale(1,1.08)" xml:space="preserve">2,920</text>
<text transform="translate(1933.6,933.3) scale(1,1.08)" xml:space="preserve">2,910</text>
<text transform="translate(1933.6,1036.3) scale(1,1.08)" xml:space="preserve">2,890</text>
</g>
<g style="font-family:'Noto Sans Mono CJK JP',IPAGothic,'Liberation Mono',monospace;font-size:19.2px" fill="#e0e0e0" filter="url(#bt)">
<text transform="translate(11.3,96.9) scale(1,1.06)" xml:space="preserve" style="font-family:IPAGothic,'Noto Sans Mono CJK JP','Liberation Mono',monospace" textLength="38.6" lengthAdjust="spacing">時刻</text>
<text transform="translate(49.9,96.6) scale(1,1.08)" xml:space="preserve" textLength="67.6" lengthAdjust="spacing">:06:00 </text>
<text transform="translate(117.6,96.9) scale(1,1.06)" xml:space="preserve" style="font-family:IPAGothic,'Noto Sans Mono CJK JP','Liberation Mono',monospace" textLength="38.6" lengthAdjust="spacing">始値</text>
<text transform="translate(156.2,96.6) scale(1,1.08)" xml:space="preserve" textLength="67.6" lengthAdjust="spacing">:6,651 </text>
<text transform="translate(223.8,96.9) scale(1,1.06)" xml:space="preserve" style="font-family:IPAGothic,'Noto Sans Mono CJK JP','Liberation Mono',monospace" textLength="38.6" lengthAdjust="spacing">高値</text>
<text transform="translate(262.5,96.6) scale(1,1.08)" xml:space="preserve" textLength="67.6" lengthAdjust="spacing">:6,651 </text>
<text transform="translate(330.1,96.9) scale(1,1.06)" xml:space="preserve" style="font-family:IPAGothic,'Noto Sans Mono CJK JP','Liberation Mono',monospace" textLength="38.6" lengthAdjust="spacing">安値</text>
<text transform="translate(368.7,96.6) scale(1,1.08)" xml:space="preserve" textLength="67.6" lengthAdjust="spacing">:6,651 </text>
<text transform="translate(436.3,96.9) scale(1,1.06)" xml:space="preserve" style="font-family:IPAGothic,'Noto Sans Mono CJK JP','Liberation Mono',monospace" textLength="38.6" lengthAdjust="spacing">終値</text>
<text transform="translate(475.0,96.6) scale(1,1.08)" xml:space="preserve" textLength="58.0" lengthAdjust="spacing">:6,651</text>
<text transform="translate(11.3,424.9) scale(1,1.06)" xml:space="preserve" style="font-family:IPAGothic,'Noto Sans Mono CJK JP','Liberation Mono',monospace" textLength="38.6" lengthAdjust="spacing">時刻</text>
<text transform="translate(49.9,424.6) scale(1,1.08)" xml:space="preserve" textLength="67.6" lengthAdjust="spacing">:06:00 </text>
<text transform="translate(117.6,424.9) scale(1,1.06)" xml:space="preserve" style="font-family:IPAGothic,'Noto Sans Mono CJK JP','Liberation Mono',monospace" textLength="38.6" lengthAdjust="spacing">始値</text>
<text transform="translate(156.2,424.6) scale(1,1.08)" xml:space="preserve" textLength="48.3" lengthAdjust="spacing">:--- </text>
<text transform="translate(204.5,424.9) scale(1,1.06)" xml:space="preserve" style="font-family:IPAGothic,'Noto Sans Mono CJK JP','Liberation Mono',monospace" textLength="38.6" lengthAdjust="spacing">高値</text>
<text transform="translate(243.1,424.6) scale(1,1.08)" xml:space="preserve" textLength="48.3" lengthAdjust="spacing">:--- </text>
<text transform="translate(291.4,424.9) scale(1,1.06)" xml:space="preserve" style="font-family:IPAGothic,'Noto Sans Mono CJK JP','Liberation Mono',monospace" textLength="38.6" lengthAdjust="spacing">安値</text>
<text transform="translate(330.1,424.6) scale(1,1.08)" xml:space="preserve" textLength="48.3" lengthAdjust="spacing">:--- </text>
<text transform="translate(378.4,424.9) scale(1,1.06)" xml:space="preserve" style="font-family:IPAGothic,'Noto Sans Mono CJK JP','Liberation Mono',monospace" textLength="38.6" lengthAdjust="spacing">終値</text>
<text transform="translate(417.0,424.6) scale(1,1.08)" xml:space="preserve" textLength="38.6" lengthAdjust="spacing">:---</text>
<text transform="translate(11.3,851.6) scale(1,1.08)" xml:space="preserve" textLength="9.7" lengthAdjust="spacing">[</text>
<text transform="translate(21.0,851.9) scale(1,1.06)" xml:space="preserve" style="font-family:IPAGothic,'Noto Sans Mono CJK JP','Liberation Mono',monospace" textLength="19.3" lengthAdjust="spacing">金</text>
<text transform="translate(40.3,851.6) scale(1,1.08)" xml:space="preserve" textLength="115.9" lengthAdjust="spacing"> 22/12 6,651</text>
<text transform="translate(156.2,851.9) scale(1,1.06)" xml:space="preserve" style="font-family:IPAGothic,'Noto Sans Mono CJK JP','Liberation Mono',monospace" textLength="19.3" lengthAdjust="spacing">×</text>
<text transform="translate(175.5,851.6) scale(1,1.08)" xml:space="preserve" textLength="48.3" lengthAdjust="spacing">1.00]</text>
<text transform="translate(223.8,851.9) scale(1,1.06)" xml:space="preserve" style="font-family:IPAGothic,'Noto Sans Mono CJK JP','Liberation Mono',monospace" textLength="19.3" lengthAdjust="spacing">－</text>
<text transform="translate(243.1,851.6) scale(1,1.08)" xml:space="preserve" textLength="9.7" lengthAdjust="spacing">[</text>
<text transform="translate(252.8,851.9) scale(1,1.06)" xml:space="preserve" style="font-family:IPAGothic,'Noto Sans Mono CJK JP','Liberation Mono',monospace" textLength="38.6" lengthAdjust="spacing">白金</text>
<text transform="translate(291.4,851.6) scale(1,1.08)" xml:space="preserve" textLength="115.9" lengthAdjust="spacing"> 22/12 3,750</text>
<text transform="translate(407.4,851.9) scale(1,1.06)" xml:space="preserve" style="font-family:IPAGothic,'Noto Sans Mono CJK JP','Liberation Mono',monospace" textLength="19.3" lengthAdjust="spacing">×</text>
<text transform="translate(426.7,851.6) scale(1,1.08)" xml:space="preserve" textLength="58.0" lengthAdjust="spacing">1.00] </text>
<text transform="translate(484.6,851.9) scale(1,1.06)" xml:space="preserve" style="font-family:IPAGothic,'Noto Sans Mono CJK JP','Liberation Mono',monospace" textLength="38.6" lengthAdjust="spacing">終値</text>
<text transform="translate(523.3,851.6) scale(1,1.08)" xml:space="preserve" textLength="9.7" lengthAdjust="spacing"> </text>
<text transform="translate(532.9,851.9) scale(1,1.06)" xml:space="preserve" style="font-family:IPAGothic,'Noto Sans Mono CJK JP','Liberation Mono',monospace" textLength="38.6" lengthAdjust="spacing">時刻</text>
<text transform="translate(571.6,851.6) scale(1,1.08)" xml:space="preserve" textLength="115.9" lengthAdjust="spacing">:06:00 2,901</text>
</g>
<g style="font-family:'Noto Sans Mono CJK JP',IPAGothic,'Liberation Mono',monospace;font-size:19.2px" filter="url(#bt)">
<rect x="1933" y="164.0" width="92" height="33.0" fill="#d2d2d2"/>
<text transform="translate(1978.5,185.7) scale(1,1.08)" xml:space="preserve" fill="#000" font-weight="bold" stroke="#000" stroke-width="0.45" text-anchor="middle">6,651</text>
<rect x="1933" y="443.0" width="92" height="33.0" fill="#d2d2d2"/>
<text transform="translate(1978.5,464.7) scale(1,1.08)" xml:space="preserve" fill="#000" font-weight="bold" stroke="#000" stroke-width="0.45" text-anchor="middle">3,750</text>
<rect x="1933" y="966.5" width="92" height="34.0" fill="#d2d2d2"/>
<text transform="translate(1978.5,988.7) scale(1,1.08)" xml:space="preserve" fill="#000" font-weight="bold" stroke="#000" stroke-width="0.45" text-anchor="middle">2,901</text>
</g>
</svg>
</body></html>
